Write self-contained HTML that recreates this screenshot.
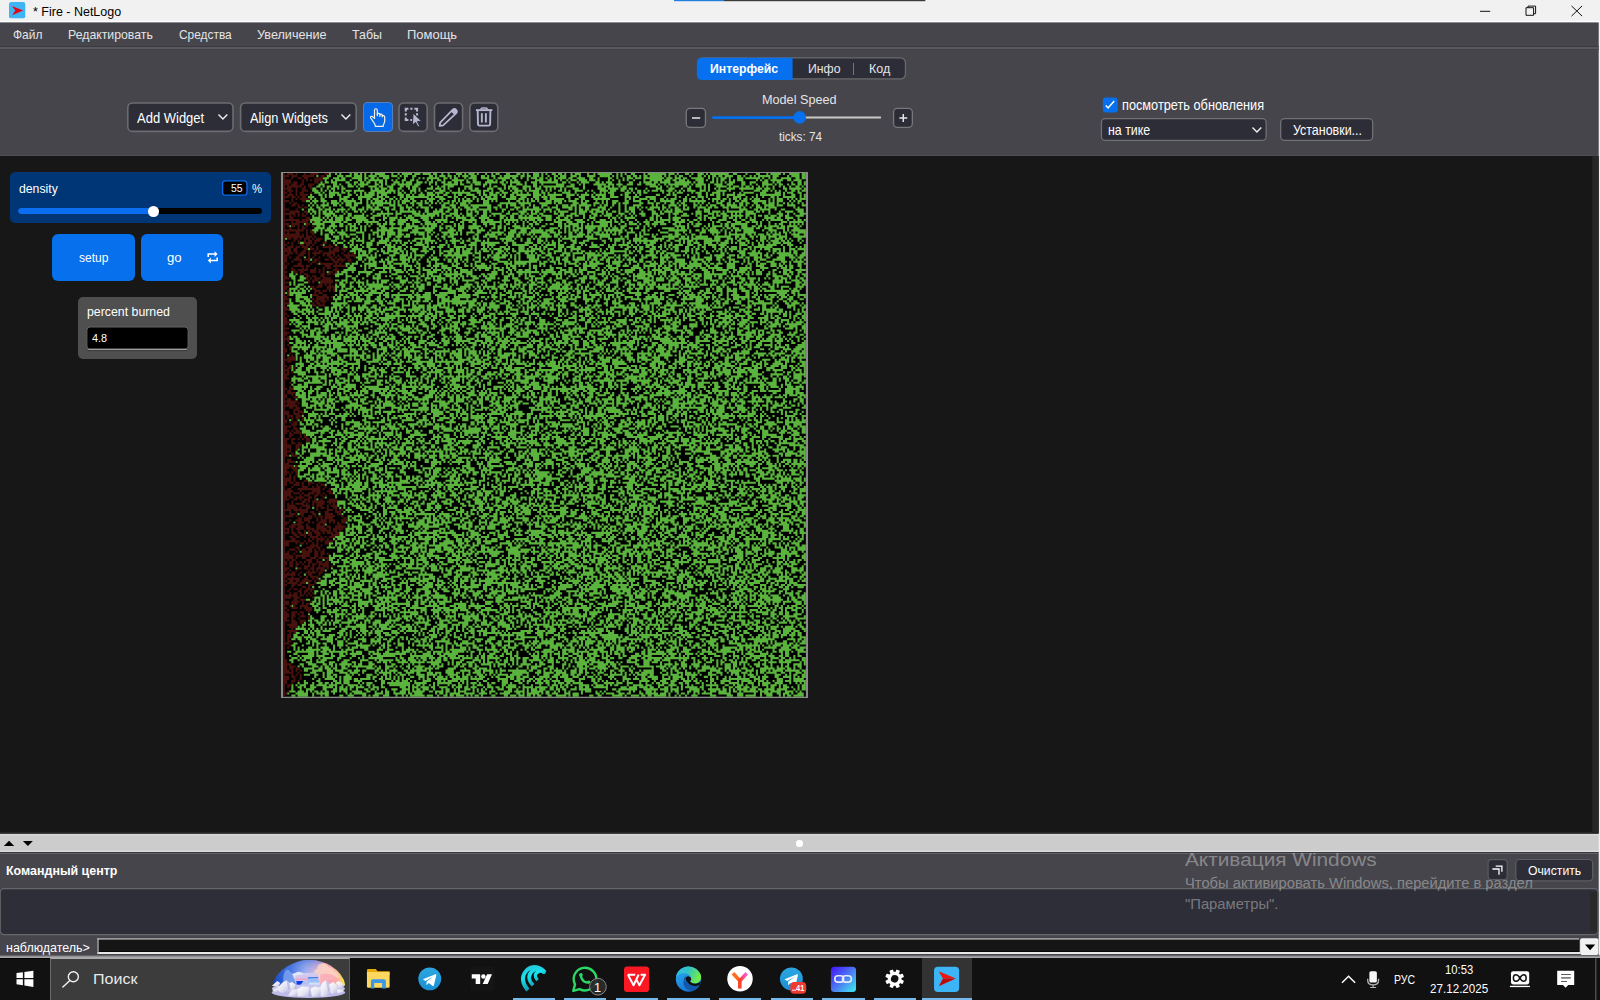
<!DOCTYPE html>
<html lang="ru">
<head>
<meta charset="utf-8">
<title>* Fire - NetLogo</title>
<style>
html,body{margin:0;padding:0;}
body{width:1600px;height:1000px;overflow:hidden;position:relative;background:#171717;font-family:"Liberation Sans",sans-serif;}
.a{position:absolute;box-sizing:border-box;}
.t{position:absolute;white-space:nowrap;line-height:1;transform-origin:0 50%;}
svg{position:absolute;overflow:visible;}
.box{position:absolute;box-sizing:border-box;background:#2d2d37;border:2px solid #5f5f64;border-radius:6px;}
.ul{position:absolute;top:997.6px;height:2.4px;background:#76b9ed;}
</style>
</head>
<body>
<!-- title bar + bands -->
<svg style="left:0;top:0;" width="1600" height="1000" viewBox="0 0 1600 1000">
<rect x="0" y="0" width="1600" height="957" fill="#f1f1f1"/>
<rect x="0" y="20.8" width="1600" height="1.6" fill="#ffffff"/>
<rect x="0" y="22.4" width="1598.7" height="133.5" fill="#46454b"/>
<rect x="0" y="46" width="1598.7" height="1" fill="#3c3b41"/>
<rect x="0" y="47" width="1598.7" height="2.1" fill="#58575d"/>
<rect x="0" y="49.1" width="1598.7" height="0.9" fill="#424147"/>
<rect x="0" y="155.9" width="1598.7" height="677" fill="#171717"/>
<rect x="1592.3" y="155.9" width="6.4" height="677" fill="#272727"/>
<rect x="0" y="832.9" width="1598.7" height="1" fill="#000"/>
<rect x="0" y="833.9" width="1598.7" height="18.1" fill="#cccccc"/>
<rect x="0" y="833.9" width="1598.7" height="1.6" fill="#d8d8d8"/>
<rect x="0" y="850.8" width="1598.7" height="1.2" fill="#dedede"/>
<rect x="0" y="852" width="1598.7" height="1.6" fill="#37363c"/>
<rect x="0" y="853.5" width="1598.7" height="102" fill="#46454b"/>
<rect x="0" y="955.5" width="1600" height="1.1" fill="#34343a"/>
<rect x="0" y="956.6" width="1600" height="1.6" fill="#a9a9a9"/>
<rect x="674" y="0" width="50" height="1.2" fill="#1e7fe0"/>
<rect x="724" y="0" width="201.3" height="1.2" fill="#3a3a3a"/>
</svg>
<!-- netlogo icon -->
<svg style="left:8.5px;top:2.4px;" width="16.3" height="16.4" viewBox="0 0 16.3 16.3"><rect width="16.3" height="16.3" rx="2.2" fill="#3fb4f4"/><path d="M2.9 3.9 L14.1 8.5 L3.1 13.1 L6.3 8.5 Z" fill="#e30613"/></svg>
<span class="t" style="left:33.10px;top:6.00px;font-size:12.60px;color:#000;transform:scaleX(0.9917);">* Fire - NetLogo</span>
<!-- window controls -->
<svg style="left:1470px;top:0;" width="128" height="22" viewBox="0 0 128 22" fill="none" stroke="#111" stroke-width="1">
<path d="M10 11.3h10.2"/>
<path d="M56 7.7h7.6v7.6h-7.6z M58 7.7v-1.6h7.6v7.6h-2" stroke-linejoin="round"/>
<path d="M101.5 5.9l10.6 10.2M112.1 5.9l-10.6 10.2"/>
</svg>
<!-- menu bar + toolbar -->
<span class="t" style="left:12.60px;top:30.00px;font-size:11.90px;color:#e4e4e6;transform:scaleX(1.0049);">Файл</span><span class="t" style="left:67.50px;top:30.00px;font-size:11.90px;color:#e4e4e6;transform:scaleX(1.0328);">Редактировать</span><span class="t" style="left:179.00px;top:30.00px;font-size:11.90px;color:#e4e4e6;">Средства</span><span class="t" style="left:257.40px;top:30.00px;font-size:11.90px;color:#e4e4e6;transform:scaleX(1.0618);">Увеличение</span><span class="t" style="left:351.60px;top:30.00px;font-size:11.90px;color:#e4e4e6;transform:scaleX(1.0445);">Табы</span><span class="t" style="left:407.40px;top:30.00px;font-size:11.90px;color:#e4e4e6;transform:scaleX(1.0900);">Помощь</span>
<svg style="left:0;top:0;" width="1600" height="160" viewBox="0 0 1600 160"><rect x="697.65" y="57.85" width="207.80" height="21.10" rx="4.85" fill="#2d2d37" stroke="#6a6a6e" stroke-width="1.30"/><rect x="127.80" y="103.00" width="105.20" height="28.40" rx="4.70" fill="#2d2d37" stroke="#6c6c70" stroke-width="1.60"/><rect x="240.60" y="103.00" width="115.60" height="28.40" rx="4.70" fill="#2d2d37" stroke="#6c6c70" stroke-width="1.60"/><rect x="399.00" y="103.00" width="28.20" height="28.40" rx="4.70" fill="#2d2d37" stroke="#6c6c70" stroke-width="1.60"/><rect x="434.50" y="103.00" width="28.10" height="28.40" rx="4.70" fill="#2d2d37" stroke="#6c6c70" stroke-width="1.60"/><rect x="469.80" y="103.00" width="28.00" height="28.40" rx="4.70" fill="#2d2d37" stroke="#6c6c70" stroke-width="1.60"/><rect x="686.25" y="108.45" width="19.20" height="19.00" rx="3.85" fill="#2d2d37" stroke="#78787c" stroke-width="1.30"/><rect x="893.55" y="108.45" width="18.80" height="19.00" rx="3.85" fill="#2d2d37" stroke="#78787c" stroke-width="1.30"/><rect x="1101.45" y="118.55" width="164.70" height="21.90" rx="3.85" fill="#2d2d37" stroke="#707074" stroke-width="1.30"/><rect x="1280.65" y="118.55" width="92.00" height="21.90" rx="3.85" fill="#2d2d37" stroke="#707074" stroke-width="1.30"/></svg>
<!-- tabs -->
<svg style="left:690px;top:52px;" width="110" height="34" viewBox="690 52 110 34"><path d="M702.3 57.8H792.6V79.9H702.3Q696.8 79.9 696.8 74.4V63.3Q696.8 57.8 702.3 57.8Z" fill="#0670ee"/></svg>
<div class="a" style="left:853px;top:63px;width:1.4px;height:12px;background:#76767a;"></div>
<span class="t" style="left:710.00px;top:63.00px;font-size:12.00px;color:#ffffff;font-weight:bold;transform:scaleX(1.0176);">Интерфейс</span><span class="t" style="left:807.50px;top:63.00px;font-size:12.00px;color:#e4e4e6;transform:scaleX(1.0220);">Инфо</span><span class="t" style="left:868.75px;top:63.00px;font-size:12.00px;color:#e4e4e6;transform:scaleX(1.0415);">Код</span>
<!-- toolbar left -->
<svg style="left:218px;top:113.6px;" width="10" height="6" viewBox="0 0 10 6" fill="none" stroke="#f0f0f0" stroke-width="1.4"><path d="M0.5 0.6L4.9 5L9.3 0.6"/></svg>
<svg style="left:341px;top:113.6px;" width="10" height="6" viewBox="0 0 10 6" fill="none" stroke="#f0f0f0" stroke-width="1.4"><path d="M0.5 0.6L4.9 5L9.3 0.6"/></svg>
<div class="a" style="left:363.2px;top:102.2px;width:29.6px;height:29.9px;background:#0569e8;border-radius:4px;border:1px solid #5a7fb8;"></div>
<svg style="left:360px;top:99px;" width="72" height="36" viewBox="0 0 1600 800" fill="none">
<g stroke="#f6f1e2" stroke-width="27" stroke-linejoin="round" stroke-linecap="round">
<path d="M322 432V250Q322 217 353 217Q385 217 385 250V372"/>
<path d="M385 338Q387 316 415 318Q442 321 442 347V386"/>
<path d="M442 352Q446 335 470 338Q495 342 495 366V396"/>
<path d="M495 378Q501 361 525 369Q550 379 550 412V470Q550 520 531 550Q516 575 516 608H341Q341 575 321 545L241 426Q226 401 241 389Q261 376 286 396L322 432"/>
</g>
<g stroke="#b6b6d0" stroke-width="46">
<path d="M1017 276V217H1076M1118 217H1166M1209 217H1268V276M1268 318V366M1166 468H1118M1076 468H1017V409M1017 366V318"/>
</g>
<path d="M1180 312L1368 492L1276 503L1326 602L1288 622L1236 522L1164 580Z" fill="#b6b6d0" stroke="#2d2d37" stroke-width="22"/>
</svg>
<svg style="left:430px;top:99px;" width="72" height="36" viewBox="0 0 1600 800" fill="none">
<path d="M214 596L226 527L506 238Q546 203 584 246Q616 286 578 322L292 588Z" stroke="#b6b6d0" stroke-width="38" stroke-linejoin="round"/>
<path d="M468 278L506 238Q546 203 584 246Q616 286 578 322L543 356Z" fill="#b6b6d0"/>
<g stroke="#b6b6d0" stroke-width="42">
<path d="M1020 247H1386"/>
<path d="M1060 268L1066 560Q1068 592 1100 592H1302Q1334 592 1336 560L1342 268" stroke-linejoin="round"/>
<path d="M1152 318V522M1242 318V522"/>
</g>
<path d="M1128 232Q1135 200 1170 200H1235Q1270 200 1277 232" stroke="#b6b6d0" stroke-width="34"/>
</svg>

<!-- speed -->
<svg style="left:680px;top:105px;" width="240" height="26" viewBox="680 105 240 26"><path d="M692 118H700.2M899.4 118H907.2M903.3 114.1V121.9" stroke="#e8e8ea" stroke-width="1.45" fill="none"/></svg>
<svg style="left:700px;top:108px;" width="200" height="20" viewBox="700 108 200 20"><rect x="712" y="116.2" width="88" height="2.7" rx="1.35" fill="#0670ee"/><rect x="800" y="116.6" width="81.2" height="1.9" rx="0.9" fill="#c8c8c8"/><circle cx="799.7" cy="117.4" r="6.3" fill="#0670ee"/></svg>
<!-- toolbar right -->
<svg style="left:1100px;top:95px;" width="20" height="20" viewBox="1100 95 20 20"><rect x="1102.8" y="97.5" width="14.9" height="14.9" rx="3" fill="#0670ee"/><path d="M1105.8 105.4L1108.1 107.9L1114.2 100.9" fill="none" stroke="#fff" stroke-width="1.5"/></svg>
<svg style="left:1251.6px;top:126.6px;" width="10" height="6" viewBox="0 0 10 6" fill="none" stroke="#f0f0f0" stroke-width="1.4"><path d="M0.5 0.6L4.9 5L9.3 0.6"/></svg>
<span class="t" style="left:137.00px;top:111.00px;font-size:14.10px;color:#ffffff;transform:scaleX(0.9219);">Add Widget</span><span class="t" style="left:249.50px;top:111.00px;font-size:14.10px;color:#ffffff;transform:scaleX(0.9048);">Align Widgets</span><span class="t" style="left:761.60px;top:94.00px;font-size:12.30px;color:#e4e4e6;transform:scaleX(1.0291);">Model Speed</span><span class="t" style="left:778.75px;top:131.00px;font-size:12.00px;color:#e4e4e6;transform:scaleX(0.9769);">ticks: 74</span><span class="t" style="left:1122.25px;top:98.00px;font-size:14.10px;color:#ffffff;transform:scaleX(0.9041);">посмотреть обновления</span><span class="t" style="left:1107.80px;top:123.00px;font-size:14.10px;color:#ffffff;transform:scaleX(0.8782);">на тике</span><span class="t" style="left:1292.60px;top:123.00px;font-size:14.10px;color:#ffffff;transform:scaleX(0.8832);">Установки...</span>
<!-- main area scrollbar gutter -->
<!-- widgets -->
<div class="a" style="left:10.2px;top:171.8px;width:260.7px;height:51.3px;background:#003676;border-radius:5px;"></div>
<svg style="left:215px;top:174px;" width="60" height="30" viewBox="215 174 60 30"><rect x="222.55" y="180.85" width="24.4" height="14.3" rx="3.2" fill="#000" stroke="#0a6cf0" stroke-width="1.3"/></svg>
<div class="a" style="left:18.4px;top:208px;width:244px;height:6px;background:#000;border-radius:3px;"></div>
<div class="a" style="left:18.4px;top:208px;width:137px;height:6px;background:#0b6ef0;border-radius:3px;"></div>
<div class="a" style="left:148.3px;top:206.4px;width:10.6px;height:10.6px;background:#fff;border-radius:50%;"></div>
<div class="a" style="left:51.8px;top:234.2px;width:83.2px;height:46.7px;background:#0670ed;border-radius:6px;"></div>
<div class="a" style="left:140.6px;top:234.2px;width:82.9px;height:46.7px;background:#0670ed;border-radius:6px;"></div>
<svg style="left:207px;top:251.2px;" width="11.4" height="12.6" viewBox="0 0 11.4 12.6" fill="none" stroke="#fff" stroke-width="1.5"><path d="M1.2 6V3.1H8.6"/><path d="M10.2 6.6V9.5H2.8"/><path d="M7.6 0.2L10.6 3.1L7.6 6Z" fill="#fff" stroke="none"/><path d="M3.8 6.6L0.8 9.5L3.8 12.4Z" fill="#fff" stroke="none"/></svg>
<div class="a" style="left:78px;top:297px;width:119.3px;height:62.2px;background:#4f4f4f;border-radius:5px;"></div>
<svg style="left:80px;top:320px;" width="116" height="36" viewBox="80 320 116 36"><rect x="86.9" y="327" width="101.2" height="22.2" rx="3.2" fill="#000" stroke="#646464" stroke-width="1"/><path d="M88.5 349.4H186.5" stroke="#a0a0a0" stroke-width="1.1"/><path d="M88 350.6H187" stroke="#3c3c3c" stroke-width="1"/></svg>
<span class="t" style="left:18.80px;top:182.00px;font-size:13.00px;color:#ffffff;transform:scaleX(0.9420);">density</span><span class="t" style="left:230.60px;top:183.00px;font-size:10.90px;color:#ffffff;transform:scaleX(0.9567);">55</span><span class="t" style="left:251.90px;top:182.00px;font-size:13.00px;color:#ffffff;transform:scaleX(0.8651);">%</span><span class="t" style="left:78.80px;top:252.00px;font-size:12.90px;color:#ffffff;transform:scaleX(0.9332);">setup</span><span class="t" style="left:166.70px;top:252.00px;font-size:12.90px;color:#ffffff;transform:scaleX(1.0175);">go</span><span class="t" style="left:87.20px;top:306.00px;font-size:12.90px;color:#ffffff;transform:scaleX(0.9564);">percent burned</span><span class="t" style="left:92.30px;top:333.00px;font-size:10.80px;color:#ffffff;transform:scaleX(1.0057);">4.8</span>
<!-- view -->
<div class="a" style="left:281px;top:172px;width:527.2px;height:526.2px;background:#8a8a8a;"></div>
<svg style="left:283.25px;top:173.2px;" width="522.85" height="523.7" viewBox="0 0 251 251" preserveAspectRatio="none"><rect width="251" height="251" fill="#000"/><path stroke="#5ab33d" stroke-width="1" fill="none" d="M22 0.5h1m2 0h1m1 0h1m4 0h1m1 0h2m1 0h1m1 0h1m2 0h1m1 0h5m3 0h1m2 0h1m1 0h5m1 0h3m1 0h4m1 0h2m2 0h1m2 0h1m3 0h3m1 0h1m1 0h3m1 0h1m3 0h1m2 0h1m1 0h2m3 0h2m3 0h2m1 0h1m1 0h1m2 0h3m1 0h1m1 0h1m2 0h2m1 0h2m1 0h1m2 0h1m1 0h3m3 0h1m2 0h1m1 0h7m2 0h1m1 0h1m1 0h1m2 0h2m4 0h1m1 0h9m1 0h3m1 0h1m3 0h2m1 0h1m2 0h3m1 0h1m1 0h9m2 0h2m4 0h1m4 0h2m3 0h1m1 0h5m1 0h1m2 0h5m1 0h2M16 1.5h1m4 0h2m3 0h3m1 0h3m1 0h4m1 0h1m1 0h4m1 0h5m1 0h3m1 0h1m1 0h2m2 0h2m6 0h2m1 0h1m1 0h3m1 0h2m1 0h1m1 0h1m1 0h3m1 0h3m2 0h2m1 0h1m1 0h2m2 0h1m1 0h7m1 0h2m1 0h2m1 0h3m1 0h1m2 0h1m2 0h2m1 0h3m2 0h3m1 0h1m3 0h4m2 0h5m1 0h1m1 0h1m1 0h1m2 0h2m1 0h2m1 0h1m1 0h2m1 0h6m1 0h1m1 0h1m2 0h1m1 0h2m3 0h1m3 0h2m1 0h1m1 0h1m1 0h2m1 0h2m1 0h4m2 0h2m1 0h1m2 0h1m1 0h1m1 0h6m1 0h3m4 0h1m1 0h4m1 0h2M19 2.5h3m2 0h3m1 0h2m3 0h5m1 0h2m1 0h2m1 0h1m2 0h3m4 0h1m2 0h1m3 0h1m2 0h1m1 0h1m1 0h6m2 0h2m1 0h1m1 0h2m3 0h1m1 0h4m2 0h4m2 0h1m1 0h6m1 0h2m2 0h1m2 0h1m1 0h3m1 0h2m1 0h1m1 0h1m1 0h1m1 0h4m1 0h2m2 0h4m2 0h2m2 0h1m4 0h2m2 0h1m2 0h1m1 0h3m1 0h3m1 0h10m1 0h3m1 0h3m1 0h2m2 0h6m2 0h1m1 0h1m1 0h1m1 0h3m1 0h1m3 0h3m1 0h7m1 0h1m2 0h1m1 0h2m2 0h5m2 0h2m1 0h2M20 3.5h1m2 0h1m1 0h5m2 0h1m3 0h2m1 0h1m1 0h7m1 0h1m2 0h1m1 0h1m2 0h2m2 0h2m1 0h1m4 0h1m1 0h1m2 0h2m1 0h1m3 0h6m1 0h1m2 0h2m5 0h3m1 0h1m2 0h2m2 0h1m1 0h2m4 0h1m3 0h4m2 0h2m1 0h2m1 0h1m2 0h1m1 0h3m1 0h4m1 0h3m1 0h1m4 0h1m1 0h1m2 0h1m1 0h1m1 0h1m2 0h1m4 0h1m2 0h6m1 0h3m1 0h2m1 0h3m1 0h1m3 0h4m1 0h1m2 0h1m1 0h1m1 0h2m2 0h1m1 0h1m1 0h3m6 0h1m1 0h1m1 0h2m1 0h6m2 0h2m1 0h4M18 4.5h1m1 0h2m1 0h3m4 0h2m2 0h2m1 0h2m1 0h2m2 0h1m1 0h2m1 0h1m3 0h3m1 0h1m1 0h3m2 0h3m1 0h1m1 0h2m1 0h1m2 0h2m1 0h2m1 0h2m1 0h1m2 0h2m1 0h4m2 0h6m1 0h2m1 0h1m1 0h5m2 0h1m2 0h3m1 0h9m2 0h2m1 0h1m3 0h1m1 0h4m3 0h2m1 0h1m1 0h3m3 0h1m4 0h2m3 0h1m1 0h4m1 0h2m1 0h5m2 0h8m1 0h1m1 0h3m3 0h2m1 0h1m1 0h1m1 0h1m1 0h3m3 0h2m2 0h3m3 0h3m2 0h1m1 0h2m5 0h1m2 0h2m1 0h1M17 5.5h3m4 0h2m1 0h1m3 0h2m1 0h1m1 0h5m3 0h2m1 0h1m1 0h1m2 0h2m1 0h7m1 0h3m4 0h1m2 0h1m3 0h7m1 0h2m3 0h1m1 0h3m1 0h2m1 0h1m5 0h2m2 0h1m2 0h3m1 0h1m3 0h2m2 0h1m6 0h4m3 0h2m2 0h1m1 0h1m4 0h6m1 0h3m1 0h3m2 0h3m2 0h2m2 0h5m1 0h1m2 0h1m1 0h10m1 0h1m1 0h5m1 0h1m2 0h4m2 0h3m4 0h2m2 0h1m2 0h1m2 0h5m1 0h1m1 0h2m2 0h1m1 0h2m1 0h2m1 0h1M16 6.5h2m1 0h1m1 0h2m1 0h3m1 0h1m2 0h3m1 0h1m1 0h2m2 0h4m1 0h2m2 0h3m3 0h2m1 0h2m1 0h3m6 0h1m2 0h1m1 0h2m1 0h3m5 0h4m5 0h1m2 0h1m1 0h2m3 0h1m1 0h4m3 0h4m1 0h2m1 0h1m1 0h10m1 0h4m4 0h1m6 0h2m1 0h3m1 0h1m2 0h1m1 0h2m11 0h4m1 0h1m2 0h1m1 0h1m1 0h2m2 0h2m1 0h1m2 0h3m1 0h1m1 0h1m3 0h5m1 0h1m1 0h3m1 0h1m1 0h2m1 0h1m2 0h1m1 0h1m1 0h1m2 0h1m2 0h1m1 0h1m2 0h1m2 0h2m1 0h1M14 7.5h2m2 0h1m2 0h1m1 0h2m1 0h1m1 0h2m6 0h1m5 0h1m1 0h2m1 0h3m1 0h2m2 0h2m3 0h1m1 0h2m1 0h1m3 0h3m1 0h3m1 0h1m1 0h1m4 0h1m2 0h1m1 0h2m1 0h2m4 0h3m2 0h2m1 0h1m1 0h1m1 0h3m2 0h2m1 0h1m2 0h3m2 0h1m1 0h1m1 0h1m2 0h1m1 0h1m3 0h3m2 0h1m6 0h4m1 0h5m1 0h3m1 0h2m1 0h1m4 0h1m4 0h3m3 0h3m3 0h1m2 0h2m4 0h1m1 0h1m1 0h1m2 0h1m1 0h1m3 0h4m2 0h7m1 0h3m1 0h3m1 0h1m4 0h2m1 0h6m1 0h1M14 8.5h3m1 0h1m1 0h1m1 0h1m1 0h1m3 0h1m1 0h3m1 0h5m3 0h7m1 0h4m1 0h1m1 0h1m3 0h3m1 0h1m2 0h1m3 0h1m2 0h3m2 0h1m3 0h1m1 0h1m3 0h5m1 0h3m1 0h1m3 0h2m3 0h1m1 0h4m1 0h1m1 0h5m1 0h1m1 0h1m1 0h1m3 0h2m1 0h1m1 0h1m2 0h4m2 0h1m1 0h1m3 0h4m1 0h3m2 0h2m1 0h1m1 0h1m2 0h2m1 0h1m1 0h1m1 0h3m1 0h2m1 0h3m1 0h1m1 0h1m1 0h1m1 0h4m2 0h3m1 0h1m3 0h5m1 0h1m5 0h1m5 0h3m1 0h3m1 0h1m1 0h1m1 0h1m2 0h1m2 0h2m1 0h1m1 0h2M15 9.5h3m1 0h1m2 0h5m1 0h2m1 0h1m2 0h1m2 0h1m1 0h1m1 0h3m1 0h7m1 0h1m1 0h2m1 0h1m2 0h1m1 0h1m2 0h1m2 0h3m1 0h4m1 0h2m1 0h9m3 0h2m1 0h1m2 0h2m1 0h2m1 0h3m2 0h3m1 0h1m2 0h1m2 0h3m1 0h2m1 0h1m2 0h1m3 0h4m2 0h1m4 0h1m3 0h1m2 0h1m1 0h1m1 0h3m5 0h3m1 0h1m1 0h2m1 0h2m7 0h1m2 0h1m1 0h1m1 0h3m4 0h1m1 0h3m2 0h1m2 0h4m1 0h1m4 0h1m2 0h1m1 0h5m3 0h3m4 0h3m1 0h1m1 0h3m2 0h2M13 10.5h1m3 0h2m1 0h1m1 0h3m1 0h2m3 0h2m2 0h1m1 0h1m1 0h5m1 0h1m1 0h3m5 0h3m1 0h2m1 0h1m2 0h3m1 0h4m1 0h1m2 0h2m3 0h1m1 0h2m2 0h4m2 0h1m1 0h2m1 0h4m1 0h1m1 0h1m2 0h2m1 0h7m1 0h4m1 0h1m1 0h7m2 0h4m1 0h1m1 0h4m1 0h1m1 0h5m2 0h2m3 0h1m1 0h2m3 0h1m1 0h1m7 0h2m3 0h2m1 0h2m5 0h1m4 0h2m2 0h1m1 0h2m1 0h2m1 0h1m1 0h4m1 0h4m5 0h1m1 0h10m1 0h1m3 0h2m2 0h1m1 0h1M12 11.5h3m3 0h1m1 0h1m1 0h2m3 0h1m1 0h3m4 0h7m2 0h3m1 0h2m2 0h1m2 0h2m1 0h11m1 0h1m1 0h4m2 0h2m1 0h2m3 0h1m3 0h2m2 0h1m1 0h3m1 0h2m2 0h2m2 0h3m2 0h3m3 0h3m1 0h3m1 0h3m5 0h2m4 0h3m3 0h2m1 0h1m1 0h2m2 0h4m3 0h3m1 0h3m3 0h5m4 0h1m4 0h1m1 0h1m2 0h1m2 0h2m1 0h3m1 0h1m4 0h2m3 0h1m2 0h4m2 0h1m2 0h1m1 0h1m2 0h1m3 0h2m1 0h1m2 0h6m2 0h1m1 0h1M13 12.5h1m1 0h1m2 0h2m7 0h4m2 0h1m2 0h2m2 0h2m1 0h3m1 0h2m2 0h2m1 0h1m1 0h1m1 0h2m1 0h2m6 0h4m2 0h3m4 0h1m1 0h1m1 0h1m1 0h2m1 0h1m1 0h1m1 0h2m1 0h5m4 0h5m1 0h3m1 0h1m1 0h1m1 0h2m2 0h2m1 0h7m2 0h1m2 0h2m1 0h2m4 0h8m7 0h1m1 0h1m1 0h1m2 0h4m1 0h3m2 0h2m1 0h1m1 0h3m3 0h2m1 0h1m2 0h1m2 0h1m2 0h1m1 0h4m1 0h2m1 0h1m1 0h2m1 0h1m1 0h2m1 0h1m1 0h3m4 0h1m1 0h1m1 0h3m2 0h1m1 0h1m1 0h1m1 0h3M11 13.5h2m1 0h3m1 0h3m2 0h3m1 0h1m1 0h6m2 0h1m2 0h1m1 0h1m1 0h4m1 0h1m1 0h1m1 0h1m1 0h1m1 0h4m1 0h2m2 0h1m1 0h1m1 0h2m2 0h1m1 0h1m2 0h1m1 0h2m1 0h1m1 0h5m2 0h1m2 0h3m1 0h1m1 0h1m5 0h1m3 0h2m1 0h1m1 0h1m1 0h2m1 0h1m3 0h3m1 0h4m1 0h1m1 0h4m2 0h1m1 0h2m3 0h1m2 0h1m1 0h1m2 0h3m3 0h2m2 0h4m3 0h1m2 0h1m2 0h7m2 0h1m1 0h2m1 0h8m3 0h1m1 0h1m1 0h2m2 0h1m2 0h2m1 0h3m2 0h7m1 0h1m1 0h1m1 0h3m3 0h1m1 0h1m1 0h2M13 14.5h1m1 0h1m3 0h1m1 0h1m1 0h4m1 0h1m1 0h3m1 0h4m2 0h1m1 0h10m1 0h1m1 0h1m1 0h2m2 0h2m1 0h3m1 0h2m1 0h1m1 0h1m1 0h1m1 0h3m1 0h1m1 0h1m1 0h3m1 0h1m6 0h3m5 0h8m1 0h6m4 0h6m1 0h1m1 0h2m5 0h3m1 0h3m3 0h3m1 0h1m1 0h1m2 0h2m1 0h1m1 0h3m5 0h2m2 0h3m1 0h2m2 0h1m2 0h2m1 0h1m1 0h2m4 0h1m1 0h1m1 0h1m2 0h1m3 0h3m2 0h2m1 0h1m2 0h2m1 0h2m2 0h2m2 0h2m1 0h3m1 0h1m2 0h1m1 0h1m1 0h1m2 0h1m1 0h1M12 15.5h1m1 0h1m1 0h1m1 0h4m2 0h2m1 0h1m2 0h3m1 0h2m4 0h2m1 0h1m1 0h3m3 0h3m1 0h2m2 0h1m2 0h1m2 0h2m3 0h1m5 0h2m2 0h3m2 0h4m1 0h10m3 0h2m2 0h1m1 0h3m2 0h2m2 0h1m1 0h1m3 0h3m4 0h1m2 0h3m1 0h3m1 0h6m1 0h1m2 0h1m1 0h2m2 0h1m2 0h1m2 0h1m3 0h4m5 0h1m1 0h1m2 0h1m2 0h4m1 0h1m1 0h2m3 0h2m1 0h1m2 0h1m1 0h3m2 0h2m1 0h5m1 0h2m1 0h1m2 0h1m1 0h2m2 0h5m1 0h3m2 0h4m3 0h2M13 16.5h1m2 0h2m1 0h1m2 0h1m5 0h1m3 0h3m3 0h1m1 0h3m1 0h2m2 0h3m2 0h1m2 0h2m1 0h3m2 0h1m1 0h4m1 0h1m4 0h4m1 0h2m1 0h1m2 0h3m1 0h3m4 0h2m1 0h2m1 0h1m2 0h1m3 0h3m1 0h1m1 0h1m2 0h3m1 0h1m2 0h1m1 0h3m2 0h5m1 0h1m1 0h1m2 0h2m4 0h4m2 0h1m3 0h1m2 0h1m1 0h3m1 0h1m1 0h1m1 0h1m1 0h5m1 0h2m1 0h1m2 0h2m2 0h1m1 0h1m2 0h1m1 0h4m1 0h2m1 0h2m2 0h3m1 0h5m1 0h1m2 0h1m2 0h3m1 0h1m1 0h4m8 0h1m1 0h1M9 17.5h1m2 0h3m2 0h2m1 0h3m1 0h1m1 0h4m1 0h1m1 0h2m1 0h3m1 0h1m1 0h5m2 0h2m1 0h2m2 0h2m2 0h1m1 0h1m5 0h2m3 0h1m1 0h2m2 0h2m1 0h2m1 0h1m2 0h5m1 0h6m2 0h1m2 0h2m2 0h2m1 0h1m2 0h9m1 0h4m2 0h2m4 0h2m1 0h1m1 0h2m1 0h2m1 0h4m1 0h2m1 0h1m4 0h1m2 0h1m1 0h3m2 0h1m3 0h3m2 0h1m1 0h1m1 0h1m1 0h1m1 0h3m1 0h3m4 0h1m2 0h3m8 0h1m5 0h4m3 0h2m1 0h5m2 0h1m2 0h2m5 0h4M12 18.5h1m1 0h2m1 0h1m1 0h2m1 0h2m1 0h2m1 0h1m1 0h1m3 0h2m1 0h1m1 0h1m3 0h1m3 0h1m2 0h1m3 0h1m1 0h8m1 0h1m2 0h2m2 0h5m1 0h2m2 0h2m4 0h1m1 0h1m1 0h2m2 0h2m1 0h1m5 0h1m2 0h1m4 0h4m2 0h1m1 0h2m2 0h1m2 0h1m1 0h1m1 0h5m3 0h1m1 0h4m1 0h2m1 0h4m1 0h1m2 0h2m1 0h1m2 0h2m1 0h2m3 0h1m4 0h2m2 0h1m1 0h4m1 0h4m6 0h3m1 0h3m1 0h4m1 0h1m1 0h8m1 0h4m1 0h2m1 0h1m2 0h1m4 0h1m2 0h4m2 0h3M13 19.5h1m1 0h1m1 0h1m1 0h6m4 0h1m1 0h2m5 0h1m3 0h1m2 0h8m1 0h3m5 0h4m1 0h1m1 0h6m1 0h2m2 0h4m1 0h1m2 0h3m2 0h1m2 0h2m2 0h5m2 0h2m1 0h3m1 0h2m1 0h1m1 0h3m1 0h2m5 0h2m1 0h2m3 0h3m1 0h3m3 0h3m2 0h1m1 0h3m3 0h3m2 0h1m1 0h1m2 0h3m3 0h3m1 0h2m2 0h1m1 0h3m2 0h2m2 0h1m1 0h3m3 0h3m1 0h1m1 0h3m2 0h1m1 0h1m1 0h1m2 0h5m6 0h1m3 0h3m2 0h1m2 0h1m2 0h3M14 20.5h1m2 0h1m2 0h3m1 0h2m1 0h2m2 0h2m1 0h5m1 0h1m2 0h4m1 0h1m1 0h1m3 0h1m3 0h1m1 0h2m1 0h10m1 0h1m1 0h1m1 0h3m1 0h3m1 0h1m1 0h3m1 0h1m2 0h3m1 0h1m1 0h1m2 0h3m2 0h2m2 0h2m1 0h1m1 0h2m2 0h1m1 0h5m3 0h3m1 0h3m1 0h2m2 0h1m2 0h1m1 0h2m1 0h1m1 0h4m2 0h1m1 0h1m1 0h1m2 0h1m1 0h1m2 0h2m3 0h1m1 0h2m4 0h1m2 0h1m2 0h4m3 0h1m1 0h1m1 0h2m2 0h1m1 0h2m1 0h3m1 0h6m1 0h2m2 0h1m1 0h2m1 0h2m1 0h3m1 0h2m1 0h2m3 0h4M14 21.5h4m1 0h1m1 0h1m1 0h1m1 0h4m1 0h2m1 0h7m2 0h2m4 0h2m1 0h4m1 0h1m2 0h4m3 0h4m1 0h1m4 0h1m1 0h1m2 0h1m1 0h5m2 0h2m2 0h5m5 0h2m1 0h1m1 0h2m2 0h11m2 0h3m2 0h2m2 0h2m1 0h1m5 0h1m2 0h3m6 0h1m1 0h2m1 0h1m2 0h5m7 0h2m1 0h1m1 0h1m3 0h1m1 0h4m8 0h2m1 0h1m1 0h4m3 0h2m1 0h2m1 0h1m1 0h1m2 0h1m1 0h1m1 0h1m4 0h5m1 0h2m2 0h4m2 0h1M13 22.5h6m1 0h1m1 0h2m1 0h4m1 0h3m2 0h6m2 0h1m2 0h1m1 0h1m2 0h3m1 0h5m1 0h4m2 0h3m3 0h6m4 0h1m2 0h7m2 0h2m1 0h3m3 0h1m1 0h7m1 0h1m1 0h1m1 0h3m1 0h3m1 0h3m1 0h1m1 0h6m2 0h4m2 0h1m2 0h1m2 0h3m2 0h1m1 0h1m2 0h1m2 0h1m3 0h1m4 0h1m1 0h2m1 0h1m1 0h5m1 0h3m1 0h2m1 0h1m2 0h2m1 0h1m1 0h1m2 0h1m3 0h4m3 0h2m2 0h2m2 0h3m3 0h1m1 0h1m1 0h6m2 0h1m2 0h1m1 0h2m1 0h1M13 23.5h1m1 0h3m1 0h9m1 0h2m4 0h3m1 0h7m3 0h1m1 0h2m2 0h4m3 0h4m2 0h3m1 0h1m1 0h2m1 0h2m1 0h2m3 0h2m2 0h2m1 0h1m2 0h10m1 0h1m1 0h1m1 0h1m1 0h1m2 0h1m1 0h1m2 0h2m1 0h1m6 0h4m2 0h3m2 0h4m3 0h1m1 0h8m1 0h2m1 0h2m2 0h2m2 0h1m2 0h3m2 0h5m2 0h1m2 0h5m2 0h2m2 0h1m6 0h1m1 0h2m3 0h2m2 0h3m2 0h2m1 0h3m1 0h1m3 0h1m5 0h3m1 0h7M10 24.5h1m3 0h6m3 0h2m2 0h2m2 0h2m1 0h1m1 0h1m3 0h1m1 0h1m2 0h2m1 0h2m1 0h3m1 0h3m1 0h2m1 0h1m3 0h1m1 0h6m2 0h1m5 0h1m1 0h1m1 0h1m4 0h2m3 0h2m1 0h3m2 0h1m2 0h2m2 0h1m3 0h1m2 0h2m1 0h2m3 0h1m1 0h2m2 0h2m1 0h1m1 0h5m1 0h1m2 0h1m1 0h1m3 0h4m1 0h1m3 0h1m2 0h1m1 0h4m1 0h1m2 0h2m1 0h3m1 0h3m3 0h2m1 0h1m3 0h1m1 0h1m1 0h3m3 0h1m1 0h1m3 0h1m1 0h2m1 0h8m4 0h1m1 0h1m3 0h1m2 0h1m1 0h2m3 0h1m1 0h1m1 0h1m1 0h1M3 25.5h1m12 0h2m1 0h1m2 0h4m1 0h2m1 0h1m1 0h3m2 0h1m1 0h1m1 0h1m4 0h3m3 0h1m3 0h1m2 0h6m2 0h1m1 0h1m1 0h3m1 0h1m2 0h3m1 0h1m1 0h3m2 0h6m2 0h1m3 0h1m1 0h2m1 0h1m3 0h4m1 0h1m1 0h1m1 0h1m4 0h2m6 0h2m1 0h3m1 0h3m1 0h1m1 0h11m1 0h1m1 0h1m2 0h3m5 0h1m2 0h1m1 0h1m2 0h1m9 0h5m1 0h1m2 0h3m2 0h1m1 0h1m1 0h5m1 0h2m1 0h2m3 0h3m2 0h2m1 0h2m1 0h1m1 0h5m1 0h2m1 0h5m1 0h1M15 26.5h5m1 0h2m1 0h1m5 0h1m1 0h1m1 0h2m1 0h1m1 0h1m5 0h1m1 0h3m1 0h6m1 0h4m1 0h10m2 0h2m1 0h1m1 0h2m2 0h3m2 0h5m1 0h1m4 0h2m1 0h2m1 0h1m1 0h1m2 0h8m1 0h1m2 0h1m4 0h4m1 0h1m1 0h1m1 0h1m1 0h1m1 0h3m1 0h5m1 0h2m1 0h1m1 0h1m1 0h3m1 0h2m2 0h2m1 0h2m2 0h1m2 0h1m5 0h6m1 0h1m1 0h2m1 0h1m6 0h1m1 0h1m1 0h3m3 0h1m1 0h2m1 0h3m1 0h6m1 0h2m2 0h4m2 0h4m1 0h1m2 0h3M14 27.5h3m1 0h1m1 0h4m1 0h1m2 0h1m1 0h1m1 0h3m2 0h1m1 0h1m2 0h1m2 0h8m2 0h5m2 0h3m3 0h4m3 0h1m3 0h4m1 0h2m4 0h1m2 0h4m2 0h1m3 0h1m2 0h1m2 0h3m2 0h3m2 0h6m1 0h4m2 0h1m2 0h1m1 0h1m1 0h3m1 0h1m2 0h3m2 0h2m1 0h9m1 0h1m2 0h1m4 0h2m1 0h1m4 0h1m4 0h9m1 0h1m2 0h2m1 0h2m1 0h5m1 0h1m1 0h1m2 0h1m1 0h3m1 0h5m4 0h1m2 0h4m3 0h1m1 0h1m1 0h7M15 28.5h1m2 0h1m3 0h3m1 0h4m5 0h4m4 0h3m1 0h2m1 0h4m1 0h2m4 0h7m1 0h2m1 0h1m3 0h6m1 0h1m1 0h1m2 0h4m1 0h2m3 0h1m1 0h6m2 0h4m1 0h4m1 0h9m1 0h3m1 0h2m1 0h1m1 0h2m1 0h1m1 0h2m2 0h2m1 0h3m1 0h1m1 0h1m1 0h1m1 0h1m1 0h2m2 0h4m2 0h1m1 0h1m7 0h4m3 0h2m2 0h1m2 0h1m4 0h3m2 0h5m2 0h1m1 0h1m2 0h1m3 0h6m5 0h1m1 0h1m1 0h1m1 0h1m1 0h2m1 0h1m1 0h1m1 0h4M18 29.5h1m1 0h2m1 0h1m3 0h4m1 0h3m3 0h1m2 0h1m1 0h1m1 0h1m1 0h2m1 0h4m1 0h3m1 0h2m2 0h1m1 0h3m1 0h1m1 0h1m2 0h1m2 0h2m1 0h4m1 0h1m2 0h1m3 0h2m3 0h5m1 0h2m1 0h1m1 0h3m1 0h2m1 0h1m1 0h2m1 0h1m3 0h4m2 0h3m4 0h2m2 0h4m1 0h1m1 0h1m1 0h7m1 0h2m1 0h1m3 0h1m3 0h1m1 0h1m1 0h3m1 0h1m1 0h1m5 0h2m1 0h3m2 0h1m2 0h2m2 0h1m5 0h1m1 0h1m3 0h1m1 0h8m1 0h2m1 0h1m1 0h3m1 0h2m1 0h4m2 0h1m2 0h4m2 0h1M20 30.5h2m2 0h3m1 0h1m1 0h2m3 0h1m2 0h1m2 0h1m3 0h3m2 0h2m2 0h3m1 0h3m6 0h1m1 0h2m2 0h1m2 0h2m1 0h3m9 0h1m1 0h1m2 0h2m1 0h4m4 0h4m1 0h2m5 0h1m1 0h1m1 0h6m1 0h2m1 0h1m1 0h1m1 0h7m1 0h4m3 0h5m5 0h1m1 0h2m3 0h1m1 0h2m4 0h2m3 0h8m1 0h2m1 0h1m1 0h1m1 0h6m3 0h8m2 0h2m1 0h2m2 0h2m1 0h1m1 0h3m1 0h4m1 0h4m3 0h6M1 31.5h1m18 0h3m2 0h2m1 0h1m4 0h2m1 0h1m1 0h1m2 0h1m1 0h1m3 0h1m1 0h2m2 0h1m1 0h1m7 0h8m3 0h1m2 0h1m3 0h2m2 0h1m3 0h1m1 0h3m4 0h1m3 0h1m1 0h6m1 0h1m2 0h1m2 0h2m1 0h1m1 0h2m2 0h1m5 0h1m1 0h5m1 0h1m5 0h5m1 0h1m3 0h2m1 0h5m1 0h1m2 0h4m1 0h2m3 0h5m2 0h3m2 0h5m1 0h10m1 0h3m3 0h3m1 0h1m1 0h4m2 0h1m3 0h3m1 0h1m2 0h4m1 0h1m1 0h1m3 0h2M20 32.5h1m2 0h3m3 0h1m2 0h2m1 0h4m3 0h2m2 0h5m1 0h5m3 0h1m1 0h2m2 0h1m1 0h5m2 0h1m2 0h1m1 0h5m1 0h1m1 0h2m2 0h3m1 0h1m1 0h1m6 0h1m1 0h4m3 0h1m2 0h2m3 0h3m1 0h1m2 0h1m2 0h2m4 0h3m3 0h3m6 0h2m2 0h1m1 0h3m1 0h1m2 0h1m1 0h12m1 0h1m2 0h2m2 0h3m1 0h1m1 0h3m1 0h1m3 0h8m2 0h2m1 0h1m2 0h2m2 0h2m3 0h1m1 0h2m1 0h1m1 0h4m1 0h2m1 0h1m1 0h1m2 0h1m1 0h1M8 33.5h2m14 0h1m1 0h3m2 0h1m1 0h1m4 0h1m1 0h3m2 0h5m1 0h1m2 0h1m1 0h1m1 0h2m1 0h1m2 0h3m1 0h2m1 0h1m1 0h1m4 0h1m2 0h2m2 0h2m3 0h3m2 0h9m2 0h2m2 0h2m4 0h4m2 0h2m1 0h1m1 0h1m1 0h2m1 0h1m2 0h1m3 0h2m1 0h3m3 0h1m5 0h1m4 0h1m3 0h1m1 0h2m2 0h1m1 0h1m1 0h2m1 0h3m4 0h1m2 0h1m3 0h1m1 0h1m1 0h2m1 0h3m2 0h4m2 0h1m1 0h4m1 0h1m1 0h1m1 0h3m1 0h1m1 0h1m2 0h1m1 0h1m2 0h1m1 0h4m1 0h4m4 0h1M19 34.5h1m5 0h1m3 0h1m2 0h2m1 0h1m1 0h1m2 0h3m2 0h1m3 0h3m1 0h1m3 0h2m4 0h5m1 0h1m5 0h3m1 0h1m2 0h1m4 0h1m1 0h4m2 0h2m1 0h4m5 0h1m2 0h8m2 0h2m2 0h1m1 0h5m1 0h3m3 0h2m3 0h1m1 0h1m2 0h3m1 0h2m2 0h1m1 0h2m1 0h5m1 0h1m2 0h1m3 0h4m3 0h1m1 0h1m1 0h2m1 0h4m2 0h3m2 0h2m1 0h1m1 0h4m1 0h4m6 0h4m2 0h1m2 0h3m1 0h5m2 0h1m2 0h3m5 0h1M29 35.5h2m1 0h1m1 0h2m2 0h1m1 0h2m6 0h1m1 0h4m1 0h2m2 0h1m1 0h1m5 0h3m1 0h2m1 0h3m2 0h1m2 0h6m2 0h1m1 0h1m3 0h1m1 0h1m1 0h1m3 0h3m1 0h1m4 0h3m2 0h2m1 0h1m1 0h1m1 0h2m3 0h1m1 0h3m1 0h4m1 0h2m4 0h5m4 0h3m3 0h1m2 0h2m1 0h2m1 0h2m1 0h2m1 0h2m1 0h2m1 0h1m1 0h1m1 0h3m3 0h2m2 0h1m1 0h1m1 0h2m3 0h2m2 0h2m1 0h1m1 0h3m1 0h1m3 0h2m1 0h9m5 0h1m2 0h1m2 0h1m1 0h1m1 0h1M12 36.5h1m20 0h5m3 0h4m2 0h1m2 0h2m1 0h4m1 0h1m2 0h4m2 0h2m1 0h2m3 0h1m4 0h2m1 0h2m1 0h1m1 0h3m1 0h1m2 0h3m1 0h1m1 0h4m1 0h3m1 0h1m2 0h3m1 0h1m1 0h5m1 0h1m1 0h3m2 0h2m1 0h1m2 0h5m9 0h1m2 0h1m1 0h2m5 0h2m3 0h1m1 0h2m3 0h3m2 0h1m2 0h1m1 0h1m1 0h2m3 0h2m1 0h1m1 0h2m2 0h1m4 0h1m1 0h2m1 0h1m1 0h4m1 0h1m1 0h2m1 0h1m1 0h1m2 0h1m1 0h3m1 0h4m1 0h1m2 0h3m1 0h4M32 37.5h3m1 0h4m1 0h2m2 0h1m1 0h2m1 0h5m1 0h2m1 0h1m2 0h2m2 0h4m2 0h1m2 0h1m1 0h5m1 0h2m1 0h4m2 0h1m1 0h1m1 0h3m1 0h1m2 0h3m1 0h1m2 0h2m1 0h8m2 0h2m2 0h1m2 0h4m1 0h1m2 0h1m2 0h1m1 0h2m2 0h1m2 0h1m1 0h1m1 0h1m2 0h8m1 0h1m1 0h1m1 0h2m2 0h4m1 0h2m1 0h2m4 0h2m1 0h4m1 0h1m1 0h1m2 0h1m1 0h1m2 0h1m1 0h1m1 0h1m1 0h1m2 0h1m2 0h4m3 0h2m1 0h1m4 0h1m1 0h2m1 0h1m1 0h1m2 0h1m1 0h2m3 0h1M34 38.5h1m1 0h1m1 0h2m1 0h1m2 0h1m3 0h3m2 0h3m1 0h1m1 0h1m1 0h1m1 0h1m4 0h1m3 0h1m2 0h2m2 0h2m1 0h3m1 0h5m1 0h3m5 0h1m1 0h3m1 0h1m1 0h1m3 0h2m2 0h2m1 0h1m1 0h1m2 0h2m1 0h2m1 0h1m3 0h4m1 0h5m1 0h5m1 0h1m1 0h6m5 0h1m1 0h2m3 0h1m4 0h2m1 0h1m1 0h2m1 0h4m5 0h1m2 0h1m1 0h2m3 0h2m5 0h2m1 0h1m5 0h3m1 0h7m2 0h1m2 0h1m1 0h7m1 0h2m2 0h2M36 39.5h5m1 0h1m1 0h1m1 0h1m4 0h3m2 0h4m1 0h1m1 0h5m3 0h1m3 0h1m1 0h12m2 0h1m2 0h1m3 0h2m1 0h3m1 0h3m1 0h1m1 0h1m1 0h1m3 0h4m1 0h2m2 0h3m4 0h2m1 0h2m1 0h1m4 0h1m1 0h7m1 0h2m3 0h1m1 0h1m1 0h3m3 0h1m2 0h1m1 0h5m2 0h1m1 0h2m1 0h5m1 0h1m1 0h1m2 0h1m1 0h1m5 0h1m1 0h5m2 0h3m1 0h1m1 0h2m2 0h4m1 0h1m1 0h2m1 0h1m3 0h7m1 0h1m1 0h3M10 40.5h1m24 0h3m2 0h5m5 0h1m1 0h1m3 0h3m1 0h2m1 0h1m2 0h1m3 0h1m1 0h2m4 0h1m2 0h1m1 0h3m2 0h1m3 0h3m1 0h1m1 0h1m1 0h7m2 0h1m1 0h1m1 0h1m3 0h4m1 0h1m1 0h2m2 0h2m1 0h2m2 0h2m2 0h1m1 0h4m1 0h2m1 0h2m2 0h2m1 0h3m1 0h2m2 0h1m1 0h1m1 0h1m3 0h3m2 0h3m1 0h5m1 0h2m5 0h1m1 0h2m1 0h1m2 0h4m2 0h3m2 0h2m3 0h3m1 0h2m2 0h4m2 0h2m3 0h4m2 0h3m1 0h3M13 41.5h1m22 0h2m1 0h1m1 0h3m3 0h1m1 0h2m1 0h3m1 0h5m1 0h2m1 0h1m3 0h1m1 0h4m2 0h1m1 0h2m1 0h2m1 0h1m1 0h2m2 0h1m2 0h1m2 0h1m3 0h3m4 0h1m2 0h1m1 0h1m4 0h5m4 0h1m1 0h1m1 0h2m1 0h3m2 0h6m1 0h1m1 0h3m1 0h2m1 0h2m2 0h1m1 0h1m1 0h1m1 0h4m2 0h2m4 0h1m3 0h2m1 0h1m3 0h5m3 0h6m1 0h3m2 0h2m1 0h1m2 0h3m4 0h1m1 0h1m2 0h2m1 0h3m3 0h6m3 0h1m1 0h1m1 0h1m1 0h1M35 42.5h1m2 0h1m2 0h1m1 0h2m1 0h3m1 0h3m4 0h2m1 0h1m1 0h1m1 0h1m4 0h2m2 0h1m5 0h2m1 0h2m2 0h1m1 0h1m3 0h3m4 0h1m3 0h5m1 0h1m1 0h11m1 0h1m1 0h2m1 0h3m1 0h1m2 0h3m2 0h2m3 0h1m1 0h2m1 0h2m3 0h2m1 0h5m3 0h1m1 0h2m1 0h2m1 0h3m1 0h1m2 0h3m1 0h2m1 0h5m2 0h1m1 0h2m2 0h2m1 0h1m4 0h1m2 0h1m1 0h1m1 0h3m2 0h1m1 0h1m1 0h1m1 0h2m3 0h4m3 0h3m1 0h1m1 0h5M17 43.5h1m12 0h2m1 0h3m3 0h6m3 0h1m1 0h2m1 0h7m4 0h2m4 0h1m2 0h4m4 0h1m1 0h2m2 0h1m2 0h1m1 0h1m2 0h2m3 0h3m3 0h4m1 0h6m1 0h1m4 0h3m4 0h1m1 0h2m1 0h1m1 0h4m1 0h1m1 0h2m1 0h7m2 0h1m1 0h4m2 0h1m1 0h1m3 0h1m2 0h1m2 0h4m1 0h2m2 0h1m1 0h2m1 0h4m1 0h6m1 0h2m1 0h2m1 0h3m2 0h4m3 0h1m2 0h2m2 0h1m1 0h3m2 0h3m1 0h1m1 0h1m2 0h1m3 0h2m1 0h1M30 44.5h1m1 0h2m3 0h1m1 0h1m1 0h4m3 0h2m1 0h2m3 0h1m1 0h4m1 0h1m1 0h1m3 0h2m1 0h3m1 0h3m2 0h3m3 0h2m1 0h1m1 0h6m1 0h1m1 0h1m5 0h1m1 0h3m1 0h1m1 0h1m2 0h1m1 0h2m1 0h1m1 0h1m2 0h1m6 0h1m4 0h2m2 0h7m4 0h3m2 0h2m1 0h3m2 0h3m2 0h6m1 0h2m1 0h1m1 0h2m1 0h1m1 0h3m1 0h7m2 0h2m2 0h2m4 0h4m5 0h1m1 0h1m2 0h4m3 0h3m1 0h2m1 0h1m1 0h2m2 0h2M31 45.5h4m4 0h1m1 0h1m2 0h10m4 0h1m2 0h1m2 0h2m1 0h1m3 0h1m1 0h1m2 0h5m2 0h3m5 0h1m1 0h7m1 0h3m1 0h1m1 0h2m1 0h2m6 0h1m1 0h2m6 0h2m1 0h3m3 0h2m3 0h1m1 0h2m2 0h2m1 0h1m2 0h1m1 0h5m6 0h5m1 0h1m1 0h1m2 0h1m1 0h1m1 0h4m2 0h1m1 0h1m1 0h5m1 0h1m1 0h3m1 0h7m2 0h4m2 0h6m4 0h4m4 0h1m1 0h3m1 0h2m3 0h1M29 46.5h6m4 0h1m3 0h1m4 0h1m2 0h1m1 0h4m1 0h1m1 0h3m2 0h1m1 0h4m1 0h4m1 0h1m1 0h2m1 0h1m2 0h4m1 0h1m1 0h1m1 0h1m2 0h2m2 0h1m1 0h3m2 0h2m1 0h1m1 0h2m1 0h3m2 0h1m2 0h1m1 0h4m3 0h3m1 0h2m1 0h1m1 0h4m4 0h2m1 0h1m1 0h1m1 0h2m1 0h1m1 0h1m1 0h5m2 0h2m2 0h1m1 0h5m1 0h4m1 0h2m5 0h1m1 0h1m3 0h3m2 0h1m1 0h6m2 0h2m1 0h4m1 0h1m2 0h2m1 0h1m4 0h2m3 0h4m2 0h5M4 47.5h1m16 0h1m4 0h1m1 0h3m2 0h1m2 0h7m3 0h4m1 0h1m2 0h4m1 0h1m2 0h1m1 0h2m3 0h5m2 0h1m1 0h1m1 0h1m1 0h2m1 0h6m9 0h3m2 0h1m1 0h1m1 0h1m2 0h11m1 0h7m1 0h2m1 0h4m1 0h1m1 0h2m2 0h4m3 0h2m1 0h1m3 0h2m2 0h4m3 0h3m1 0h2m1 0h1m1 0h4m2 0h4m1 0h2m2 0h2m5 0h3m1 0h1m4 0h2m1 0h1m1 0h1m1 0h4m1 0h1m1 0h1m1 0h3m3 0h1m1 0h1m2 0h1m1 0h2m1 0h2m2 0h2M3 48.5h2m1 0h1m18 0h4m1 0h1m5 0h1m3 0h2m2 0h3m5 0h3m5 0h1m4 0h1m1 0h1m1 0h3m3 0h1m1 0h9m2 0h3m4 0h2m1 0h5m2 0h1m2 0h3m2 0h2m1 0h1m1 0h1m4 0h1m1 0h2m2 0h5m1 0h1m2 0h2m1 0h1m1 0h1m2 0h1m2 0h1m1 0h4m1 0h1m1 0h1m3 0h2m1 0h1m2 0h1m1 0h7m1 0h1m1 0h1m1 0h2m2 0h2m1 0h7m1 0h4m1 0h11m2 0h1m2 0h1m1 0h1m1 0h2m1 0h1m1 0h3m2 0h2m1 0h2m3 0h3m1 0h1m2 0h1m1 0h2M3 49.5h3m2 0h2m15 0h2m3 0h3m2 0h1m4 0h1m2 0h1m1 0h2m2 0h1m1 0h1m3 0h2m1 0h1m2 0h4m1 0h2m1 0h1m1 0h5m2 0h3m1 0h2m1 0h2m1 0h1m1 0h3m1 0h1m1 0h2m1 0h3m4 0h3m1 0h1m2 0h1m2 0h1m1 0h3m3 0h2m5 0h1m1 0h1m3 0h1m1 0h2m3 0h2m1 0h3m3 0h1m1 0h1m1 0h1m1 0h2m5 0h1m1 0h6m1 0h3m3 0h1m1 0h1m1 0h1m1 0h2m2 0h1m1 0h1m2 0h2m1 0h2m1 0h4m1 0h1m1 0h2m2 0h1m1 0h5m3 0h1m8 0h1m2 0h5m2 0h2m2 0h2m2 0h1M4 50.5h2m2 0h3m19 0h1m2 0h2m3 0h1m4 0h4m5 0h1m1 0h3m2 0h1m4 0h2m2 0h3m1 0h1m1 0h4m2 0h3m1 0h1m1 0h1m4 0h3m3 0h5m1 0h1m2 0h2m2 0h3m3 0h2m1 0h1m1 0h4m3 0h1m2 0h3m2 0h1m5 0h4m1 0h4m3 0h2m2 0h1m1 0h2m1 0h2m3 0h1m1 0h6m1 0h1m1 0h4m1 0h1m1 0h4m2 0h4m1 0h3m2 0h4m3 0h2m1 0h1m1 0h1m1 0h1m2 0h3m1 0h4m1 0h1m2 0h1m1 0h1m2 0h2m1 0h3m1 0h1m2 0h1m1 0h2M5 51.5h1m1 0h3m15 0h2m1 0h3m3 0h1m1 0h1m3 0h1m4 0h1m1 0h4m5 0h4m2 0h1m1 0h1m1 0h1m1 0h1m3 0h4m1 0h1m2 0h1m1 0h2m2 0h6m3 0h2m1 0h2m5 0h4m2 0h3m4 0h2m1 0h1m2 0h1m2 0h2m1 0h1m3 0h2m4 0h2m1 0h2m4 0h1m1 0h1m1 0h2m3 0h3m1 0h1m2 0h2m1 0h2m3 0h5m1 0h4m2 0h3m1 0h2m2 0h3m2 0h1m1 0h1m1 0h1m2 0h4m2 0h1m3 0h2m3 0h2m2 0h2m2 0h1m6 0h5m1 0h1m2 0h4m1 0h2M3 52.5h1m1 0h1m4 0h2m5 0h1m9 0h2m1 0h1m1 0h2m1 0h4m1 0h1m2 0h1m1 0h1m1 0h3m2 0h1m3 0h3m1 0h2m1 0h3m3 0h2m3 0h2m4 0h1m1 0h2m4 0h1m3 0h2m2 0h2m3 0h1m1 0h1m2 0h1m4 0h1m1 0h2m2 0h1m1 0h2m1 0h4m2 0h1m2 0h2m1 0h2m1 0h2m1 0h1m2 0h2m2 0h1m1 0h1m1 0h3m3 0h4m3 0h3m3 0h2m1 0h3m1 0h2m6 0h1m2 0h3m2 0h1m1 0h3m1 0h1m2 0h1m3 0h1m1 0h1m2 0h1m1 0h4m1 0h3m1 0h1m1 0h2m1 0h1m3 0h2m2 0h5m1 0h3m2 0h3m1 0h1M3 53.5h1m1 0h1m1 0h3m15 0h1m1 0h3m2 0h1m3 0h1m1 0h1m1 0h8m3 0h1m1 0h3m1 0h1m4 0h1m1 0h1m1 0h2m1 0h2m2 0h1m3 0h2m2 0h1m1 0h1m3 0h4m2 0h1m1 0h1m1 0h1m3 0h1m2 0h4m1 0h1m1 0h3m1 0h2m1 0h4m2 0h1m1 0h1m2 0h5m1 0h3m3 0h2m3 0h1m3 0h4m1 0h2m3 0h1m3 0h1m1 0h3m1 0h4m1 0h4m1 0h1m1 0h4m1 0h3m1 0h1m1 0h2m1 0h1m1 0h1m1 0h4m1 0h3m2 0h3m3 0h2m1 0h1m1 0h6m1 0h1m1 0h4m1 0h1m1 0h1m8 0h2m1 0h2M6 54.5h2m2 0h1m1 0h1m12 0h2m1 0h2m2 0h2m2 0h2m1 0h1m1 0h10m1 0h1m1 0h3m2 0h1m1 0h2m1 0h4m4 0h4m1 0h2m1 0h1m4 0h5m1 0h1m1 0h2m1 0h6m1 0h3m1 0h1m1 0h3m1 0h1m1 0h1m2 0h2m2 0h2m2 0h1m1 0h5m1 0h3m1 0h1m2 0h1m1 0h1m1 0h2m2 0h1m2 0h1m1 0h1m1 0h1m2 0h2m2 0h1m2 0h1m1 0h1m2 0h2m1 0h1m1 0h2m1 0h5m1 0h1m1 0h1m2 0h1m1 0h8m5 0h1m2 0h2m1 0h1m1 0h1m5 0h2m2 0h2m1 0h2m1 0h1m3 0h3m1 0h1m1 0h4m3 0h4M3 55.5h4m1 0h2m1 0h1m1 0h1m11 0h1m2 0h1m1 0h3m1 0h1m2 0h2m1 0h3m1 0h3m1 0h3m2 0h1m1 0h1m2 0h2m3 0h1m1 0h3m4 0h1m3 0h5m2 0h5m1 0h1m2 0h1m1 0h1m1 0h1m1 0h1m1 0h3m1 0h3m3 0h1m1 0h1m1 0h2m2 0h2m1 0h1m2 0h2m1 0h12m1 0h2m1 0h1m1 0h1m1 0h3m3 0h1m1 0h2m1 0h2m1 0h1m3 0h3m1 0h4m1 0h4m2 0h10m1 0h1m3 0h1m1 0h1m5 0h2m1 0h1m1 0h3m2 0h2m1 0h2m1 0h3m2 0h1m1 0h3m1 0h2m2 0h2m3 0h1m3 0h1m1 0h2m1 0h1M3 56.5h1m1 0h1m1 0h1m1 0h2m1 0h1m12 0h1m1 0h4m3 0h7m1 0h3m2 0h2m3 0h1m3 0h3m2 0h2m2 0h2m5 0h2m5 0h4m1 0h3m1 0h1m2 0h1m1 0h3m3 0h1m2 0h1m3 0h1m1 0h2m5 0h2m1 0h1m1 0h1m2 0h1m3 0h2m2 0h1m1 0h1m1 0h2m2 0h1m1 0h2m1 0h3m3 0h1m1 0h1m2 0h4m1 0h1m2 0h1m1 0h2m3 0h1m3 0h2m7 0h3m4 0h1m1 0h4m4 0h2m1 0h2m3 0h3m2 0h5m2 0h4m2 0h2m1 0h1m1 0h12m1 0h4M1 57.5h1m1 0h8m16 0h1m3 0h3m1 0h1m2 0h1m2 0h7m1 0h2m4 0h1m6 0h1m1 0h1m3 0h3m1 0h1m2 0h8m3 0h2m4 0h6m1 0h1m1 0h2m1 0h1m2 0h3m1 0h4m1 0h1m1 0h2m1 0h2m5 0h2m2 0h4m1 0h1m3 0h2m1 0h1m2 0h1m2 0h2m1 0h1m5 0h4m3 0h6m1 0h2m3 0h2m1 0h2m6 0h3m1 0h2m1 0h1m2 0h2m1 0h4m1 0h1m2 0h1m2 0h1m2 0h2m4 0h2m1 0h1m1 0h1m9 0h5m2 0h2m1 0h1M3 58.5h2m1 0h3m4 0h1m11 0h1m1 0h2m1 0h1m1 0h4m1 0h1m1 0h4m3 0h1m1 0h3m1 0h10m1 0h3m1 0h4m2 0h6m3 0h1m1 0h6m1 0h3m6 0h2m2 0h3m2 0h1m1 0h1m1 0h1m1 0h2m3 0h1m1 0h1m1 0h1m1 0h1m1 0h1m3 0h2m2 0h1m1 0h2m1 0h1m2 0h2m1 0h6m1 0h1m1 0h3m1 0h1m1 0h2m5 0h3m3 0h1m1 0h2m2 0h1m3 0h3m2 0h1m1 0h1m1 0h4m1 0h1m1 0h2m3 0h1m2 0h2m2 0h1m1 0h4m3 0h2m2 0h2m1 0h1m1 0h1m1 0h4m1 0h3m1 0h1m2 0h1m1 0h4M6 59.5h6m1 0h1m10 0h1m1 0h2m1 0h3m1 0h1m1 0h2m3 0h2m3 0h2m2 0h2m1 0h1m1 0h2m4 0h3m1 0h7m3 0h4m1 0h1m2 0h8m3 0h1m1 0h2m1 0h1m1 0h3m1 0h1m3 0h4m1 0h1m1 0h6m2 0h1m5 0h1m1 0h2m1 0h3m1 0h1m1 0h3m1 0h2m2 0h2m2 0h1m1 0h1m1 0h1m1 0h1m1 0h2m2 0h4m2 0h1m3 0h6m1 0h2m1 0h1m4 0h1m2 0h2m1 0h6m1 0h3m1 0h2m1 0h1m3 0h1m2 0h8m1 0h2m1 0h1m2 0h2m1 0h2m1 0h1m1 0h3m1 0h2m2 0h1m2 0h1M3 60.5h1m2 0h2m2 0h3m11 0h4m1 0h1m3 0h1m1 0h4m1 0h2m2 0h3m1 0h1m4 0h5m1 0h1m1 0h1m2 0h2m2 0h3m3 0h1m1 0h4m1 0h4m3 0h1m2 0h2m4 0h1m3 0h1m2 0h1m1 0h1m3 0h1m3 0h2m2 0h2m2 0h1m2 0h5m2 0h4m1 0h4m3 0h5m2 0h1m2 0h3m2 0h1m1 0h1m2 0h1m2 0h5m1 0h4m1 0h5m2 0h2m4 0h6m1 0h4m1 0h1m2 0h1m1 0h1m1 0h2m1 0h2m1 0h3m1 0h2m1 0h1m3 0h2m3 0h3m3 0h2m2 0h3m3 0h2M3 61.5h1m2 0h4m1 0h3m11 0h1m3 0h1m1 0h2m1 0h4m1 0h5m1 0h3m1 0h1m1 0h1m1 0h3m1 0h1m2 0h1m1 0h4m1 0h3m1 0h1m2 0h1m1 0h17m2 0h1m4 0h1m1 0h2m2 0h3m3 0h2m1 0h1m1 0h2m1 0h2m1 0h1m1 0h3m2 0h1m2 0h4m3 0h1m4 0h2m1 0h1m1 0h2m3 0h1m2 0h2m1 0h2m8 0h1m2 0h1m3 0h3m3 0h1m1 0h1m1 0h1m3 0h1m5 0h4m5 0h3m2 0h2m1 0h1m2 0h2m3 0h3m2 0h3m3 0h1m2 0h1m2 0h2m1 0h1m1 0h2M3 62.5h2m3 0h3m1 0h1m10 0h8m8 0h3m4 0h2m2 0h4m3 0h1m2 0h1m1 0h1m1 0h1m5 0h1m3 0h4m1 0h1m1 0h7m1 0h3m1 0h2m1 0h2m1 0h3m2 0h3m1 0h2m3 0h1m1 0h3m1 0h1m2 0h1m1 0h6m2 0h1m1 0h1m3 0h2m5 0h1m4 0h1m3 0h2m2 0h4m4 0h3m3 0h1m1 0h1m1 0h6m2 0h2m1 0h2m2 0h3m1 0h6m2 0h1m2 0h1m1 0h2m1 0h3m3 0h3m3 0h1m1 0h10m1 0h1m4 0h2m1 0h4m1 0h1M2 63.5h6m1 0h5m10 0h4m1 0h1m1 0h1m4 0h1m1 0h2m3 0h2m2 0h2m4 0h1m3 0h4m1 0h2m1 0h3m1 0h2m1 0h4m1 0h1m1 0h1m3 0h1m1 0h1m3 0h4m1 0h1m1 0h2m1 0h5m3 0h2m1 0h1m1 0h1m1 0h1m2 0h1m1 0h3m1 0h3m1 0h1m1 0h1m1 0h5m2 0h3m1 0h1m3 0h2m1 0h4m2 0h1m3 0h1m1 0h3m1 0h1m1 0h2m1 0h1m1 0h4m1 0h1m2 0h1m2 0h9m2 0h1m1 0h1m1 0h6m1 0h1m1 0h1m1 0h1m1 0h1m8 0h2m1 0h2m1 0h1m3 0h2m3 0h1m1 0h1m4 0h4m2 0h1m1 0h1M3 64.5h4m4 0h1m1 0h1m2 0h1m3 0h2m1 0h3m1 0h2m1 0h2m1 0h2m1 0h5m1 0h3m1 0h1m2 0h1m1 0h5m1 0h1m4 0h6m1 0h5m1 0h5m1 0h1m4 0h2m1 0h2m2 0h1m1 0h2m1 0h6m3 0h3m3 0h1m1 0h1m1 0h4m1 0h1m1 0h3m1 0h2m2 0h1m1 0h2m4 0h2m1 0h1m1 0h2m1 0h2m1 0h1m5 0h13m2 0h4m1 0h1m1 0h1m1 0h3m2 0h2m4 0h1m2 0h1m1 0h8m1 0h5m3 0h1m1 0h3m3 0h3m3 0h1m1 0h2m2 0h1m1 0h2m4 0h2m1 0h1m3 0h2M3 65.5h5m1 0h4m1 0h1m2 0h2m1 0h2m1 0h1m1 0h1m1 0h1m3 0h1m1 0h2m1 0h3m1 0h2m2 0h3m1 0h5m2 0h4m1 0h6m1 0h1m1 0h2m1 0h2m4 0h4m2 0h3m1 0h2m1 0h1m1 0h4m2 0h1m1 0h2m4 0h1m1 0h4m2 0h1m1 0h1m1 0h1m2 0h1m3 0h1m1 0h3m1 0h2m2 0h1m5 0h6m2 0h1m1 0h1m2 0h1m1 0h2m4 0h2m1 0h2m1 0h2m2 0h3m1 0h1m2 0h1m2 0h5m2 0h2m1 0h1m1 0h3m1 0h1m1 0h1m1 0h3m6 0h1m1 0h1m4 0h3m1 0h1m2 0h3m1 0h7m1 0h2m5 0h1m1 0h1m1 0h1M4 66.5h2m1 0h3m1 0h4m1 0h1m3 0h4m1 0h2m1 0h1m2 0h1m1 0h1m3 0h1m2 0h5m1 0h3m4 0h3m2 0h1m2 0h1m1 0h2m1 0h3m1 0h1m2 0h4m1 0h5m1 0h3m1 0h2m3 0h3m2 0h1m3 0h1m1 0h1m1 0h3m3 0h1m1 0h4m2 0h1m4 0h1m6 0h2m2 0h1m2 0h2m1 0h2m1 0h1m1 0h2m2 0h3m1 0h3m1 0h3m1 0h1m2 0h2m1 0h1m1 0h2m1 0h1m1 0h2m1 0h1m2 0h2m1 0h1m1 0h2m1 0h2m1 0h1m1 0h1m1 0h1m2 0h3m3 0h1m1 0h3m1 0h2m1 0h2m2 0h1m1 0h4m5 0h1m1 0h8m1 0h1m1 0h1m3 0h1m1 0h2M5 67.5h2m2 0h2m1 0h1m1 0h1m2 0h6m1 0h1m1 0h1m3 0h2m2 0h1m1 0h1m2 0h1m1 0h2m1 0h2m1 0h1m1 0h2m1 0h1m1 0h2m6 0h1m2 0h3m1 0h3m1 0h1m1 0h2m2 0h1m2 0h1m3 0h1m4 0h1m2 0h1m1 0h1m2 0h3m1 0h3m1 0h1m1 0h4m3 0h2m1 0h4m1 0h2m1 0h1m1 0h1m2 0h1m1 0h1m1 0h1m1 0h1m1 0h1m4 0h3m2 0h1m2 0h1m1 0h1m1 0h2m2 0h1m1 0h1m2 0h3m4 0h2m2 0h2m1 0h1m1 0h4m2 0h1m1 0h1m1 0h1m1 0h2m2 0h4m3 0h1m3 0h4m1 0h1m2 0h2m3 0h2m1 0h2m2 0h2m1 0h1m1 0h1m3 0h1m1 0h2m1 0h1m2 0h3m1 0h1M7 68.5h1m3 0h1m3 0h1m4 0h1m1 0h1m1 0h3m2 0h1m1 0h2m1 0h4m2 0h3m2 0h1m3 0h10m1 0h7m1 0h2m1 0h3m1 0h1m3 0h3m2 0h4m2 0h1m1 0h1m3 0h4m1 0h1m8 0h2m6 0h1m3 0h1m5 0h1m3 0h2m1 0h1m3 0h2m1 0h2m1 0h2m1 0h1m2 0h1m6 0h1m2 0h1m3 0h1m1 0h1m4 0h1m2 0h2m1 0h6m5 0h1m2 0h1m1 0h4m2 0h1m1 0h1m2 0h2m1 0h2m2 0h4m1 0h5m1 0h2m6 0h2m1 0h1m1 0h2m2 0h2m1 0h1m1 0h2m2 0h2M5 69.5h1m2 0h1m2 0h2m1 0h3m1 0h1m1 0h2m1 0h3m1 0h2m2 0h1m1 0h1m1 0h1m1 0h1m1 0h3m1 0h2m1 0h8m1 0h1m3 0h1m1 0h1m1 0h1m1 0h1m2 0h3m1 0h2m2 0h2m2 0h3m1 0h1m1 0h1m3 0h2m3 0h3m1 0h1m1 0h2m2 0h1m1 0h3m1 0h1m1 0h1m1 0h2m1 0h1m2 0h1m1 0h1m6 0h2m5 0h4m2 0h2m2 0h3m1 0h1m1 0h2m1 0h2m6 0h1m4 0h3m4 0h1m1 0h1m1 0h1m3 0h1m1 0h1m1 0h2m2 0h2m1 0h1m3 0h3m1 0h3m3 0h6m1 0h2m2 0h1m2 0h3m2 0h5m1 0h2m1 0h2m4 0h1m1 0h1m1 0h1m1 0h2M3 70.5h5m4 0h2m1 0h1m1 0h1m1 0h1m1 0h1m1 0h1m3 0h1m1 0h2m1 0h2m1 0h1m1 0h1m1 0h1m1 0h2m2 0h1m1 0h4m1 0h1m2 0h1m1 0h1m1 0h1m1 0h1m3 0h2m1 0h2m1 0h2m2 0h1m2 0h3m3 0h1m4 0h4m1 0h2m4 0h2m2 0h2m3 0h2m1 0h1m1 0h2m2 0h1m4 0h3m5 0h3m1 0h2m3 0h1m1 0h3m1 0h2m2 0h1m3 0h1m1 0h1m3 0h5m1 0h2m1 0h1m1 0h1m1 0h1m1 0h2m1 0h1m2 0h6m1 0h1m1 0h1m1 0h1m2 0h3m2 0h2m3 0h1m1 0h2m2 0h2m1 0h2m2 0h1m1 0h4m5 0h1m1 0h2m3 0h2m1 0h4m2 0h1m2 0h1m1 0h1M4 71.5h1m1 0h4m1 0h6m1 0h2m1 0h2m1 0h2m1 0h5m1 0h4m1 0h3m1 0h3m4 0h1m1 0h1m3 0h2m3 0h4m2 0h2m3 0h1m2 0h1m1 0h1m2 0h1m1 0h4m1 0h2m2 0h5m1 0h1m1 0h2m1 0h1m2 0h1m4 0h1m1 0h2m1 0h1m1 0h5m2 0h3m1 0h1m2 0h1m3 0h7m4 0h3m1 0h1m1 0h5m1 0h3m1 0h4m3 0h3m1 0h2m2 0h1m1 0h1m4 0h1m1 0h1m1 0h4m7 0h1m2 0h1m1 0h1m1 0h1m1 0h1m1 0h6m1 0h1m2 0h4m1 0h4m1 0h3m1 0h2m1 0h2m1 0h1m2 0h1m1 0h1m1 0h4M3 72.5h1m1 0h1m1 0h2m3 0h1m2 0h2m1 0h1m1 0h4m1 0h6m3 0h2m1 0h2m1 0h1m3 0h3m1 0h3m1 0h3m2 0h1m4 0h1m2 0h4m2 0h2m2 0h1m2 0h1m1 0h1m1 0h2m1 0h3m1 0h3m4 0h1m1 0h3m1 0h1m1 0h1m2 0h4m2 0h2m1 0h3m1 0h1m1 0h8m1 0h2m1 0h6m1 0h1m3 0h1m2 0h1m1 0h1m1 0h1m1 0h1m4 0h3m1 0h2m2 0h2m4 0h3m7 0h1m2 0h3m1 0h1m4 0h4m2 0h1m1 0h1m1 0h2m2 0h2m1 0h2m1 0h2m1 0h4m1 0h1m1 0h1m3 0h1m2 0h1m1 0h5m2 0h8m1 0h1M6 73.5h2m1 0h4m6 0h3m1 0h1m2 0h2m1 0h7m6 0h1m3 0h3m1 0h1m1 0h1m2 0h3m1 0h2m1 0h1m1 0h1m2 0h3m2 0h2m2 0h1m1 0h1m1 0h4m2 0h1m4 0h2m2 0h3m1 0h3m2 0h1m1 0h4m1 0h2m4 0h1m3 0h1m1 0h2m1 0h1m3 0h1m2 0h2m1 0h1m3 0h1m1 0h1m2 0h1m2 0h2m1 0h1m3 0h2m1 0h1m1 0h3m2 0h1m3 0h4m1 0h2m2 0h1m3 0h4m1 0h3m2 0h2m1 0h4m3 0h1m3 0h1m1 0h2m1 0h2m1 0h1m4 0h2m1 0h2m1 0h1m5 0h1m1 0h4m1 0h1m1 0h1m2 0h4m2 0h2M8 74.5h1m1 0h1m1 0h1m2 0h3m2 0h2m1 0h3m2 0h1m1 0h2m1 0h1m1 0h1m3 0h2m4 0h3m1 0h1m1 0h4m1 0h6m1 0h2m4 0h1m1 0h2m3 0h5m1 0h3m3 0h3m2 0h1m1 0h12m2 0h2m1 0h1m1 0h1m1 0h2m4 0h5m1 0h2m2 0h1m4 0h1m1 0h7m7 0h4m1 0h2m5 0h1m4 0h1m1 0h3m1 0h1m3 0h2m1 0h6m3 0h2m2 0h1m8 0h2m4 0h1m2 0h3m1 0h1m2 0h3m3 0h1m3 0h2m1 0h1m6 0h4m1 0h1m2 0h2M4 75.5h4m1 0h1m1 0h1m1 0h3m1 0h1m1 0h3m8 0h3m1 0h1m1 0h2m4 0h1m1 0h1m1 0h1m1 0h1m2 0h1m2 0h1m2 0h4m1 0h1m1 0h3m2 0h1m5 0h3m2 0h3m1 0h1m4 0h1m1 0h1m5 0h1m1 0h1m1 0h1m2 0h2m3 0h3m2 0h2m1 0h5m2 0h1m1 0h1m3 0h1m2 0h1m1 0h6m1 0h2m3 0h7m1 0h1m1 0h1m4 0h2m1 0h2m1 0h3m1 0h1m1 0h1m1 0h1m1 0h3m3 0h2m1 0h5m1 0h3m5 0h1m1 0h1m1 0h3m4 0h1m1 0h1m3 0h3m2 0h1m1 0h2m1 0h3m3 0h2m1 0h2m7 0h1m1 0h1m1 0h1M5 76.5h1m2 0h2m3 0h2m1 0h3m1 0h1m4 0h2m1 0h1m1 0h1m2 0h3m5 0h2m1 0h6m5 0h2m3 0h4m1 0h1m1 0h2m1 0h1m3 0h1m1 0h1m3 0h1m1 0h2m3 0h3m3 0h2m1 0h1m1 0h6m1 0h1m2 0h3m1 0h2m1 0h4m1 0h3m1 0h1m2 0h1m3 0h1m1 0h2m2 0h2m1 0h1m1 0h3m1 0h2m1 0h1m1 0h2m1 0h4m3 0h1m1 0h1m1 0h1m1 0h1m1 0h1m1 0h1m1 0h1m2 0h1m2 0h2m1 0h3m3 0h1m2 0h2m1 0h3m3 0h2m3 0h4m1 0h1m1 0h2m1 0h1m2 0h2m2 0h5m1 0h1m1 0h1m1 0h2m1 0h1m2 0h2m3 0h1m1 0h2m3 0h1M9 77.5h3m1 0h2m1 0h2m5 0h2m2 0h1m2 0h1m1 0h1m2 0h2m1 0h1m1 0h1m2 0h3m3 0h1m1 0h2m3 0h2m8 0h2m3 0h2m3 0h2m5 0h2m3 0h1m3 0h2m1 0h3m2 0h2m1 0h1m1 0h1m3 0h1m1 0h3m1 0h3m3 0h2m2 0h1m2 0h2m1 0h1m2 0h5m2 0h1m4 0h3m2 0h3m1 0h5m1 0h4m1 0h1m2 0h1m7 0h2m1 0h2m2 0h2m5 0h1m3 0h2m3 0h1m1 0h3m2 0h1m2 0h2m3 0h1m2 0h7m1 0h1m1 0h3m3 0h5m3 0h4m2 0h2M3 78.5h1m1 0h2m2 0h1m1 0h9m1 0h1m1 0h2m1 0h2m1 0h1m1 0h5m1 0h2m1 0h1m1 0h1m2 0h1m1 0h2m1 0h1m1 0h2m4 0h1m1 0h2m1 0h2m1 0h1m2 0h3m5 0h2m1 0h1m1 0h4m1 0h1m4 0h2m1 0h5m2 0h2m1 0h1m1 0h2m3 0h6m1 0h1m8 0h2m1 0h2m1 0h3m1 0h5m2 0h2m1 0h2m4 0h1m1 0h1m1 0h1m2 0h2m1 0h2m1 0h3m1 0h3m1 0h1m1 0h4m2 0h2m1 0h1m2 0h3m1 0h2m3 0h2m1 0h1m1 0h3m1 0h2m2 0h2m1 0h3m3 0h1m1 0h4m1 0h3m3 0h3m1 0h2m1 0h1m3 0h1m1 0h2m2 0h1M3 79.5h2m1 0h2m7 0h3m1 0h3m1 0h5m1 0h4m1 0h2m1 0h3m1 0h2m1 0h1m1 0h2m1 0h5m3 0h1m1 0h2m2 0h1m2 0h1m2 0h1m2 0h1m3 0h2m1 0h1m1 0h1m1 0h3m2 0h4m1 0h1m3 0h3m1 0h1m1 0h2m1 0h2m1 0h3m6 0h1m1 0h1m2 0h2m1 0h2m1 0h2m3 0h4m1 0h1m3 0h1m2 0h1m2 0h1m1 0h5m3 0h1m1 0h1m3 0h1m2 0h4m1 0h2m1 0h1m1 0h8m1 0h2m1 0h3m5 0h2m2 0h2m2 0h2m2 0h2m1 0h3m1 0h1m1 0h2m1 0h2m3 0h2m1 0h1m1 0h3m1 0h1m1 0h2m1 0h1m1 0h1m3 0h1m1 0h1M6 80.5h3m1 0h1m1 0h1m2 0h1m1 0h2m1 0h3m1 0h2m3 0h6m1 0h1m1 0h4m2 0h1m3 0h2m2 0h1m1 0h1m1 0h1m1 0h1m1 0h1m4 0h4m2 0h1m1 0h1m2 0h4m2 0h8m2 0h4m1 0h4m2 0h6m1 0h1m1 0h2m3 0h1m1 0h5m2 0h1m3 0h1m1 0h2m1 0h2m1 0h4m2 0h2m1 0h3m2 0h1m6 0h1m1 0h1m1 0h2m1 0h3m1 0h1m3 0h1m1 0h1m4 0h6m1 0h1m2 0h2m1 0h1m3 0h7m2 0h7m2 0h1m3 0h3m1 0h3m2 0h6m1 0h4m2 0h1m1 0h1m2 0h1m2 0h1M3 81.5h2m1 0h5m2 0h1m2 0h1m1 0h11m1 0h1m1 0h1m1 0h1m1 0h1m2 0h1m1 0h3m2 0h2m2 0h1m1 0h1m1 0h2m2 0h1m1 0h3m2 0h3m1 0h4m2 0h1m1 0h3m3 0h2m1 0h1m2 0h4m2 0h3m1 0h2m1 0h2m1 0h3m1 0h8m1 0h1m1 0h1m2 0h2m1 0h1m1 0h1m1 0h7m2 0h3m2 0h3m1 0h2m3 0h2m2 0h12m1 0h1m1 0h1m4 0h3m2 0h12m1 0h2m1 0h2m6 0h2m1 0h2m2 0h1m1 0h1m1 0h1m2 0h2m2 0h1m3 0h2m4 0h1m2 0h2m5 0h2m3 0h2M5 82.5h2m1 0h1m1 0h1m1 0h1m2 0h2m3 0h1m1 0h1m1 0h6m1 0h3m1 0h2m1 0h3m1 0h3m1 0h2m2 0h3m1 0h1m1 0h2m3 0h3m1 0h1m2 0h1m1 0h5m2 0h2m2 0h1m1 0h1m1 0h1m1 0h1m3 0h2m1 0h1m1 0h1m1 0h2m2 0h1m1 0h3m1 0h1m2 0h2m4 0h3m2 0h3m1 0h2m1 0h1m1 0h2m2 0h1m1 0h2m1 0h2m2 0h3m2 0h2m1 0h1m1 0h1m1 0h1m1 0h4m3 0h3m2 0h1m2 0h2m2 0h2m1 0h2m1 0h1m1 0h5m1 0h1m2 0h5m1 0h2m1 0h2m2 0h2m2 0h3m3 0h3m2 0h1m1 0h1m2 0h3m1 0h4m1 0h1m1 0h1m2 0h2m4 0h4M4 83.5h9m1 0h7m1 0h1m1 0h4m4 0h1m4 0h1m1 0h1m3 0h2m2 0h3m1 0h3m1 0h1m2 0h1m1 0h1m1 0h5m1 0h1m5 0h3m9 0h1m1 0h1m1 0h2m4 0h1m1 0h1m1 0h2m2 0h4m3 0h1m1 0h1m1 0h5m2 0h2m1 0h4m3 0h1m1 0h1m3 0h1m1 0h1m3 0h1m1 0h3m1 0h4m6 0h2m1 0h2m1 0h2m1 0h1m2 0h2m1 0h3m2 0h3m2 0h2m1 0h2m1 0h4m1 0h4m4 0h1m1 0h1m2 0h2m4 0h3m2 0h1m1 0h1m1 0h1m1 0h3m5 0h1m1 0h5m1 0h1m3 0h5M4 84.5h1m2 0h1m1 0h3m2 0h1m1 0h2m1 0h1m1 0h4m1 0h5m1 0h3m1 0h2m1 0h2m4 0h5m2 0h1m1 0h2m1 0h3m1 0h2m4 0h3m2 0h1m4 0h1m1 0h1m3 0h3m1 0h3m1 0h1m3 0h1m3 0h3m1 0h2m1 0h1m2 0h3m1 0h4m3 0h1m1 0h1m1 0h2m2 0h4m1 0h1m4 0h1m1 0h6m3 0h5m1 0h1m2 0h1m1 0h6m1 0h3m5 0h2m2 0h5m1 0h2m1 0h1m2 0h1m2 0h1m1 0h1m1 0h1m1 0h2m2 0h1m1 0h1m1 0h4m1 0h2m6 0h1m1 0h2m4 0h2m2 0h1m2 0h2m2 0h4m1 0h4m1 0h1M4 85.5h3m3 0h1m2 0h2m1 0h1m1 0h6m2 0h5m1 0h4m2 0h1m2 0h1m3 0h1m2 0h2m3 0h1m2 0h1m1 0h8m2 0h1m1 0h2m1 0h7m1 0h2m1 0h2m1 0h1m1 0h4m1 0h1m1 0h1m1 0h1m1 0h1m2 0h2m5 0h1m2 0h3m1 0h3m2 0h2m1 0h1m1 0h1m3 0h2m1 0h2m1 0h3m2 0h1m4 0h5m1 0h1m1 0h1m1 0h1m1 0h2m1 0h1m1 0h1m1 0h1m5 0h1m2 0h1m1 0h1m1 0h4m1 0h2m1 0h2m1 0h1m2 0h3m3 0h2m2 0h1m2 0h4m1 0h2m1 0h1m3 0h1m1 0h4m3 0h1m6 0h2m3 0h1m1 0h1m2 0h4m1 0h2M6 86.5h2m3 0h1m1 0h3m1 0h1m1 0h1m1 0h5m6 0h1m1 0h2m2 0h2m3 0h1m1 0h1m1 0h2m1 0h1m1 0h2m1 0h2m1 0h3m2 0h1m2 0h1m1 0h2m2 0h2m1 0h1m1 0h1m2 0h6m1 0h1m1 0h4m1 0h1m1 0h1m1 0h2m1 0h1m1 0h2m1 0h6m3 0h2m1 0h3m1 0h1m4 0h1m2 0h1m5 0h3m1 0h8m4 0h1m1 0h1m1 0h1m2 0h1m2 0h6m2 0h7m1 0h1m2 0h5m4 0h1m1 0h2m1 0h7m1 0h1m1 0h1m2 0h1m1 0h1m2 0h1m2 0h8m2 0h6m1 0h2m1 0h5m3 0h1m1 0h5M2 87.5h1m3 0h1m3 0h4m2 0h5m2 0h2m1 0h1m2 0h10m1 0h2m1 0h1m1 0h3m1 0h1m1 0h1m2 0h3m1 0h4m1 0h1m1 0h1m2 0h1m4 0h3m1 0h1m2 0h1m1 0h4m1 0h1m1 0h1m1 0h3m2 0h3m4 0h6m1 0h2m1 0h1m1 0h1m2 0h4m2 0h1m1 0h2m1 0h1m3 0h1m1 0h3m1 0h1m3 0h2m2 0h2m2 0h1m1 0h1m4 0h1m3 0h1m1 0h3m3 0h1m1 0h2m1 0h2m1 0h1m1 0h7m1 0h1m1 0h1m1 0h1m1 0h1m3 0h1m3 0h2m1 0h2m3 0h2m1 0h1m1 0h1m1 0h2m2 0h1m3 0h1m2 0h3m1 0h1m1 0h3m1 0h1m2 0h3m1 0h2m1 0h1m1 0h1M6 88.5h1m1 0h1m1 0h5m1 0h2m1 0h4m3 0h2m1 0h1m2 0h1m1 0h1m2 0h2m1 0h2m1 0h1m1 0h2m1 0h1m3 0h2m1 0h1m2 0h1m1 0h2m1 0h4m1 0h2m1 0h1m1 0h1m1 0h2m3 0h2m1 0h3m2 0h3m1 0h2m1 0h1m2 0h2m1 0h2m1 0h4m2 0h1m2 0h1m1 0h1m2 0h1m2 0h2m1 0h2m3 0h3m2 0h1m2 0h3m2 0h1m2 0h1m1 0h1m3 0h3m1 0h3m2 0h2m3 0h3m2 0h5m2 0h4m2 0h2m5 0h3m1 0h3m2 0h2m1 0h1m3 0h3m3 0h4m1 0h5m1 0h1m2 0h1m1 0h1m6 0h1m3 0h2m1 0h1m1 0h2m1 0h4M6 89.5h1m1 0h1m2 0h1m1 0h2m1 0h1m2 0h3m1 0h1m2 0h3m3 0h1m1 0h3m1 0h2m3 0h4m1 0h2m3 0h2m1 0h1m3 0h1m1 0h4m4 0h2m1 0h1m2 0h1m1 0h1m2 0h1m2 0h6m1 0h4m1 0h3m3 0h3m2 0h1m1 0h5m6 0h1m6 0h1m1 0h1m3 0h2m1 0h2m2 0h1m1 0h1m2 0h1m1 0h2m3 0h5m1 0h3m1 0h1m2 0h4m1 0h1m1 0h5m1 0h3m3 0h1m3 0h1m1 0h4m3 0h1m1 0h1m5 0h1m1 0h1m4 0h2m3 0h3m2 0h3m5 0h4m2 0h1m1 0h5m1 0h1m3 0h1M8 90.5h1m2 0h2m2 0h2m1 0h4m1 0h4m1 0h3m4 0h2m3 0h6m1 0h1m2 0h2m2 0h1m1 0h2m1 0h3m2 0h8m1 0h14m2 0h3m1 0h4m2 0h1m1 0h1m1 0h2m2 0h1m1 0h1m1 0h3m1 0h1m1 0h1m2 0h1m2 0h1m2 0h1m1 0h3m1 0h2m1 0h2m1 0h1m2 0h2m1 0h1m1 0h1m1 0h2m1 0h1m1 0h4m1 0h6m2 0h1m1 0h1m1 0h2m2 0h1m2 0h6m2 0h1m2 0h5m1 0h3m1 0h1m1 0h1m2 0h2m1 0h1m2 0h2m1 0h2m1 0h2m1 0h1m2 0h2m2 0h2m2 0h1m1 0h1m4 0h3m2 0h2m1 0h2m2 0h3M6 91.5h4m3 0h2m1 0h2m1 0h1m1 0h8m1 0h7m4 0h1m4 0h1m1 0h4m1 0h4m5 0h5m2 0h4m2 0h1m2 0h2m2 0h4m2 0h1m1 0h5m1 0h4m2 0h2m1 0h3m1 0h2m1 0h5m1 0h3m1 0h3m1 0h5m1 0h1m1 0h1m1 0h1m2 0h2m1 0h1m1 0h1m2 0h2m1 0h5m3 0h7m7 0h2m2 0h3m1 0h4m3 0h2m1 0h2m2 0h2m1 0h4m1 0h1m1 0h1m2 0h2m1 0h5m2 0h1m1 0h4m2 0h1m1 0h3m1 0h2m2 0h5m1 0h1m5 0h1m1 0h2M4 92.5h1m1 0h1m1 0h2m2 0h2m1 0h7m1 0h1m2 0h1m2 0h2m2 0h1m2 0h1m2 0h1m3 0h1m6 0h1m5 0h1m1 0h1m4 0h2m1 0h2m1 0h4m1 0h2m3 0h1m1 0h1m1 0h1m1 0h1m4 0h2m3 0h2m1 0h1m1 0h1m1 0h1m3 0h1m1 0h2m6 0h3m4 0h3m1 0h6m1 0h7m1 0h2m1 0h1m4 0h1m2 0h3m1 0h1m1 0h2m4 0h1m1 0h3m1 0h1m4 0h3m1 0h1m1 0h1m2 0h2m1 0h1m2 0h2m1 0h2m1 0h1m1 0h1m2 0h3m2 0h4m1 0h5m2 0h1m5 0h3m1 0h1m1 0h1m2 0h4m1 0h3m1 0h2m1 0h1m1 0h3M4 93.5h1m2 0h2m2 0h5m2 0h3m1 0h4m2 0h1m3 0h2m1 0h2m2 0h1m1 0h3m1 0h1m1 0h1m1 0h1m2 0h2m1 0h3m2 0h2m1 0h3m1 0h2m1 0h1m1 0h2m3 0h5m1 0h1m1 0h1m1 0h2m3 0h3m1 0h2m2 0h3m1 0h1m1 0h4m1 0h5m4 0h1m2 0h1m5 0h6m1 0h2m2 0h2m1 0h1m1 0h5m1 0h2m1 0h2m1 0h1m1 0h8m2 0h1m1 0h4m2 0h4m1 0h1m2 0h4m1 0h1m3 0h1m3 0h4m1 0h1m2 0h4m1 0h2m2 0h1m1 0h3m1 0h4m1 0h4m2 0h4m3 0h3m2 0h2m1 0h1m2 0h1M4 94.5h1m1 0h3m2 0h2m2 0h1m3 0h1m1 0h1m1 0h5m1 0h2m2 0h1m1 0h1m3 0h1m2 0h3m1 0h3m3 0h1m2 0h1m2 0h1m1 0h1m3 0h1m2 0h2m2 0h1m1 0h4m2 0h2m2 0h4m1 0h1m1 0h2m2 0h2m8 0h2m1 0h7m2 0h1m1 0h3m1 0h10m2 0h1m2 0h4m1 0h8m4 0h2m1 0h2m4 0h2m1 0h5m1 0h2m1 0h2m1 0h2m1 0h4m2 0h1m4 0h4m1 0h2m1 0h1m5 0h1m1 0h2m1 0h4m1 0h1m1 0h4m1 0h5m4 0h2m1 0h5m4 0h1m1 0h3m1 0h1M5 95.5h6m1 0h1m2 0h2m1 0h2m3 0h2m1 0h5m1 0h1m1 0h1m6 0h2m1 0h1m2 0h3m3 0h5m1 0h2m1 0h1m3 0h1m2 0h7m1 0h1m1 0h2m1 0h5m1 0h1m1 0h2m1 0h2m3 0h2m1 0h2m1 0h2m3 0h2m1 0h2m2 0h2m3 0h2m1 0h1m1 0h1m1 0h2m2 0h2m1 0h2m3 0h2m1 0h1m1 0h1m1 0h1m3 0h6m1 0h1m1 0h1m1 0h2m4 0h3m1 0h3m1 0h1m1 0h1m1 0h3m1 0h1m1 0h2m4 0h1m1 0h5m2 0h3m1 0h2m2 0h6m1 0h7m1 0h4m2 0h1m5 0h1m3 0h1m1 0h2m1 0h1m2 0h1m1 0h1M7 96.5h4m5 0h1m3 0h1m1 0h1m1 0h4m3 0h3m1 0h1m2 0h4m2 0h2m1 0h1m4 0h1m6 0h2m6 0h2m1 0h1m2 0h1m1 0h2m3 0h1m3 0h1m1 0h1m1 0h3m2 0h2m2 0h5m1 0h2m1 0h3m2 0h4m1 0h1m2 0h1m1 0h3m2 0h3m2 0h2m1 0h3m2 0h1m2 0h2m2 0h1m2 0h1m2 0h2m1 0h4m1 0h3m1 0h2m1 0h1m3 0h4m2 0h2m2 0h3m1 0h1m1 0h1m1 0h2m2 0h1m1 0h1m2 0h3m1 0h2m1 0h2m1 0h3m1 0h3m3 0h2m2 0h1m2 0h5m4 0h6m2 0h1m2 0h6M5 97.5h1m3 0h1m1 0h10m1 0h1m3 0h1m4 0h1m2 0h3m1 0h2m1 0h4m1 0h2m1 0h1m1 0h1m1 0h3m3 0h5m2 0h2m1 0h2m2 0h1m1 0h1m1 0h5m1 0h7m1 0h2m2 0h3m1 0h1m2 0h1m1 0h1m2 0h1m2 0h1m1 0h2m1 0h8m1 0h8m2 0h1m1 0h1m3 0h3m2 0h4m1 0h3m2 0h1m1 0h3m3 0h1m1 0h9m2 0h2m2 0h2m3 0h2m2 0h2m3 0h2m2 0h1m3 0h3m1 0h2m1 0h1m3 0h1m1 0h6m3 0h4m2 0h1m3 0h1m2 0h1m2 0h2m1 0h1m1 0h4m1 0h1M4 98.5h5m1 0h2m2 0h3m1 0h3m4 0h1m1 0h3m1 0h1m2 0h3m2 0h2m3 0h1m6 0h3m2 0h1m4 0h1m2 0h1m1 0h1m1 0h2m2 0h2m2 0h2m1 0h1m1 0h4m1 0h1m1 0h1m1 0h2m1 0h1m2 0h3m1 0h1m1 0h1m2 0h2m3 0h1m1 0h2m2 0h5m2 0h1m1 0h1m1 0h6m1 0h1m4 0h2m1 0h1m1 0h2m1 0h1m3 0h1m2 0h3m1 0h1m5 0h6m1 0h1m1 0h1m1 0h1m2 0h2m2 0h1m1 0h1m1 0h2m2 0h3m1 0h3m2 0h5m1 0h1m1 0h1m4 0h1m1 0h2m1 0h2m3 0h1m1 0h1m2 0h2m1 0h3m2 0h2m1 0h1m1 0h3m2 0h4M4 99.5h2m1 0h3m2 0h1m1 0h4m2 0h1m1 0h2m1 0h2m2 0h3m1 0h1m1 0h2m3 0h1m1 0h2m1 0h3m1 0h1m1 0h1m1 0h4m2 0h1m1 0h1m1 0h2m1 0h1m2 0h1m1 0h2m2 0h1m1 0h1m2 0h5m1 0h1m2 0h2m1 0h2m1 0h1m3 0h1m7 0h3m1 0h7m2 0h1m4 0h5m1 0h1m3 0h1m1 0h1m1 0h4m4 0h1m1 0h10m1 0h6m1 0h10m2 0h1m1 0h1m1 0h3m1 0h4m3 0h2m2 0h1m2 0h1m8 0h1m2 0h3m1 0h1m3 0h2m1 0h1m1 0h2m1 0h1m1 0h1m3 0h2m1 0h1m2 0h2m1 0h1m2 0h2m1 0h1M5 100.5h1m4 0h9m1 0h1m1 0h1m2 0h5m1 0h1m5 0h1m1 0h3m3 0h2m2 0h2m3 0h3m1 0h1m1 0h4m1 0h2m2 0h1m1 0h1m4 0h2m1 0h1m1 0h2m3 0h1m1 0h2m3 0h2m3 0h2m3 0h3m1 0h1m1 0h2m3 0h4m1 0h4m4 0h3m3 0h1m2 0h1m2 0h1m2 0h2m1 0h2m1 0h1m3 0h2m2 0h2m1 0h1m2 0h1m2 0h1m2 0h2m2 0h4m2 0h2m1 0h1m3 0h5m1 0h1m1 0h3m3 0h6m1 0h3m2 0h3m2 0h2m1 0h2m1 0h9m1 0h5m4 0h1m1 0h1m1 0h3m1 0h2M4 101.5h1m2 0h2m1 0h2m7 0h2m1 0h1m1 0h1m1 0h2m2 0h5m3 0h1m6 0h3m3 0h1m1 0h1m1 0h1m1 0h2m2 0h1m1 0h1m1 0h1m1 0h2m2 0h2m5 0h1m1 0h5m3 0h2m2 0h1m1 0h1m1 0h1m1 0h2m6 0h1m1 0h1m1 0h1m1 0h1m3 0h1m1 0h5m1 0h2m1 0h1m5 0h2m5 0h1m1 0h2m2 0h2m2 0h1m2 0h1m2 0h2m1 0h2m1 0h3m5 0h1m1 0h2m1 0h1m1 0h4m2 0h1m2 0h1m2 0h3m1 0h5m1 0h3m3 0h1m1 0h2m3 0h3m1 0h1m2 0h1m1 0h1m7 0h3m1 0h4m2 0h1m1 0h3m4 0h1M5 102.5h7m1 0h1m2 0h3m4 0h3m1 0h1m1 0h6m2 0h1m1 0h7m3 0h2m1 0h2m3 0h8m1 0h6m2 0h1m2 0h2m1 0h1m1 0h6m1 0h3m2 0h1m1 0h1m4 0h5m1 0h1m1 0h2m1 0h2m1 0h4m1 0h4m1 0h3m1 0h1m1 0h1m2 0h2m2 0h3m1 0h7m3 0h2m2 0h3m1 0h1m1 0h1m6 0h3m2 0h4m1 0h4m1 0h2m1 0h1m2 0h1m1 0h3m1 0h2m1 0h4m1 0h1m2 0h3m2 0h2m1 0h2m1 0h1m2 0h2m3 0h1m1 0h3m1 0h1m1 0h4m1 0h1m2 0h3m1 0h4M5 103.5h4m1 0h1m2 0h1m1 0h3m3 0h1m1 0h1m2 0h4m1 0h2m1 0h1m3 0h2m1 0h10m1 0h1m1 0h2m1 0h2m3 0h2m1 0h2m1 0h2m1 0h1m1 0h1m2 0h1m2 0h1m1 0h3m1 0h1m2 0h2m1 0h1m4 0h1m1 0h2m1 0h2m1 0h1m1 0h1m1 0h1m1 0h1m1 0h3m1 0h2m2 0h4m1 0h2m1 0h11m1 0h5m1 0h5m1 0h1m2 0h1m1 0h1m1 0h1m2 0h3m2 0h3m1 0h1m1 0h1m2 0h1m1 0h1m2 0h4m5 0h3m3 0h1m2 0h1m2 0h1m3 0h3m4 0h2m1 0h4m1 0h2m6 0h2m1 0h1m5 0h1m2 0h7m1 0h1M7 104.5h3m2 0h3m1 0h1m4 0h2m3 0h1m2 0h3m3 0h1m1 0h4m2 0h4m1 0h2m1 0h3m1 0h5m1 0h3m4 0h1m1 0h4m1 0h1m1 0h2m1 0h2m1 0h2m1 0h2m2 0h2m1 0h1m1 0h1m1 0h1m1 0h1m4 0h1m3 0h2m1 0h5m2 0h2m4 0h3m1 0h1m2 0h1m1 0h4m1 0h4m2 0h2m1 0h3m2 0h1m2 0h1m6 0h1m5 0h1m1 0h1m3 0h1m1 0h1m3 0h2m1 0h3m1 0h7m2 0h2m2 0h1m2 0h2m1 0h8m4 0h1m2 0h2m2 0h3m1 0h3m1 0h6m2 0h4m1 0h2M6 105.5h2m1 0h2m1 0h2m2 0h1m1 0h3m1 0h1m1 0h1m1 0h2m1 0h1m2 0h1m1 0h2m1 0h1m1 0h2m2 0h1m2 0h3m1 0h2m2 0h1m2 0h5m3 0h2m3 0h3m1 0h1m1 0h2m1 0h1m2 0h1m2 0h1m2 0h4m2 0h4m1 0h4m1 0h2m4 0h1m1 0h2m3 0h1m1 0h2m1 0h1m1 0h1m2 0h2m2 0h1m2 0h1m1 0h2m1 0h2m2 0h1m2 0h3m1 0h2m2 0h3m1 0h1m3 0h2m1 0h1m3 0h1m3 0h3m1 0h1m1 0h9m1 0h4m1 0h2m2 0h1m1 0h1m3 0h2m1 0h1m1 0h2m1 0h2m1 0h3m1 0h3m2 0h2m9 0h2m4 0h4m1 0h4M6 106.5h5m1 0h1m3 0h5m1 0h2m2 0h2m2 0h1m1 0h7m3 0h2m3 0h7m1 0h1m2 0h1m1 0h3m5 0h4m1 0h1m1 0h3m1 0h1m1 0h1m1 0h2m1 0h1m2 0h4m1 0h3m1 0h2m1 0h2m3 0h1m3 0h2m1 0h1m1 0h1m1 0h1m1 0h2m3 0h1m2 0h2m2 0h1m4 0h1m1 0h1m1 0h2m1 0h2m2 0h2m2 0h4m2 0h2m2 0h1m1 0h3m5 0h2m3 0h6m1 0h3m2 0h1m1 0h1m1 0h4m1 0h1m1 0h5m4 0h3m1 0h2m1 0h4m1 0h1m2 0h1m1 0h1m1 0h1m3 0h1m2 0h1m3 0h1m1 0h2m1 0h4m1 0h3M7 107.5h4m1 0h7m1 0h1m1 0h1m2 0h1m1 0h5m1 0h1m2 0h1m2 0h2m2 0h1m1 0h1m3 0h2m1 0h1m2 0h5m2 0h3m2 0h5m1 0h2m1 0h1m2 0h3m1 0h2m1 0h4m3 0h1m1 0h1m1 0h2m1 0h2m1 0h2m1 0h7m2 0h4m1 0h2m1 0h2m1 0h5m4 0h3m3 0h1m2 0h1m1 0h3m1 0h1m5 0h2m2 0h2m2 0h2m1 0h8m1 0h2m6 0h1m1 0h2m1 0h1m1 0h2m1 0h2m1 0h3m2 0h4m2 0h1m2 0h1m4 0h1m1 0h1m2 0h2m2 0h4m1 0h5m1 0h4m1 0h1m5 0h2m1 0h1M6 108.5h1m2 0h4m1 0h2m1 0h1m1 0h1m1 0h4m2 0h5m2 0h2m1 0h3m5 0h2m2 0h1m2 0h1m2 0h1m1 0h2m1 0h2m1 0h7m3 0h1m1 0h1m4 0h2m1 0h4m1 0h1m1 0h1m2 0h3m1 0h2m1 0h2m1 0h1m2 0h4m1 0h1m5 0h1m1 0h1m3 0h6m1 0h1m1 0h1m2 0h1m1 0h3m2 0h1m2 0h3m2 0h2m1 0h6m1 0h3m1 0h3m2 0h3m1 0h2m1 0h1m1 0h2m1 0h1m1 0h1m3 0h5m2 0h1m1 0h2m2 0h3m1 0h1m1 0h1m1 0h3m1 0h1m2 0h3m1 0h2m4 0h2m1 0h2m2 0h2m6 0h1m4 0h2m1 0h2M9 109.5h2m2 0h4m1 0h2m1 0h3m1 0h2m1 0h1m2 0h2m2 0h1m1 0h2m2 0h2m1 0h1m1 0h2m1 0h3m1 0h1m2 0h1m2 0h1m5 0h1m1 0h1m1 0h1m2 0h6m1 0h3m1 0h4m2 0h1m1 0h2m1 0h2m3 0h2m1 0h2m1 0h4m1 0h2m1 0h2m4 0h3m1 0h2m1 0h1m1 0h5m6 0h2m1 0h2m1 0h3m1 0h1m1 0h2m1 0h2m2 0h1m1 0h2m2 0h1m1 0h3m2 0h1m2 0h1m3 0h1m1 0h1m1 0h1m1 0h2m1 0h3m2 0h1m1 0h5m1 0h3m1 0h1m1 0h3m1 0h4m1 0h2m1 0h4m1 0h8m1 0h3m1 0h1m3 0h2m1 0h1m1 0h1m2 0h2M9 110.5h3m3 0h5m1 0h1m1 0h2m7 0h4m2 0h3m3 0h1m1 0h1m1 0h5m2 0h1m1 0h1m2 0h1m1 0h3m1 0h4m1 0h1m3 0h5m2 0h2m3 0h2m2 0h2m1 0h2m4 0h4m2 0h1m1 0h1m2 0h3m1 0h3m2 0h1m1 0h3m1 0h1m1 0h2m2 0h1m3 0h2m1 0h1m1 0h3m3 0h4m1 0h1m1 0h5m1 0h6m1 0h1m2 0h1m3 0h3m2 0h1m3 0h3m1 0h10m1 0h4m3 0h4m2 0h2m1 0h1m2 0h1m2 0h2m3 0h1m1 0h1m4 0h1m1 0h1m1 0h2m1 0h2m2 0h1m3 0h1m1 0h1M9 111.5h3m1 0h3m1 0h2m1 0h3m1 0h1m5 0h8m4 0h2m1 0h2m1 0h6m2 0h1m1 0h3m1 0h3m2 0h2m2 0h3m1 0h4m2 0h1m1 0h2m3 0h1m1 0h1m2 0h1m1 0h1m3 0h2m1 0h3m1 0h2m1 0h4m8 0h4m2 0h1m1 0h1m3 0h3m2 0h4m2 0h1m1 0h1m3 0h1m2 0h2m3 0h1m1 0h1m2 0h2m5 0h1m2 0h4m1 0h1m1 0h1m1 0h1m3 0h4m1 0h2m2 0h1m1 0h1m3 0h3m2 0h6m2 0h1m2 0h4m5 0h3m1 0h3m2 0h5m1 0h1m2 0h2m1 0h1m2 0h1M11 112.5h3m1 0h1m2 0h1m2 0h4m3 0h1m1 0h3m1 0h2m1 0h3m2 0h1m1 0h5m3 0h5m1 0h1m1 0h1m4 0h5m1 0h1m1 0h1m1 0h1m1 0h3m1 0h1m2 0h2m2 0h1m1 0h2m3 0h4m2 0h1m1 0h4m1 0h2m1 0h2m5 0h3m1 0h1m1 0h5m1 0h3m1 0h2m2 0h1m1 0h2m3 0h1m2 0h1m2 0h3m1 0h5m3 0h1m4 0h1m1 0h1m1 0h3m1 0h3m1 0h1m1 0h2m1 0h1m1 0h16m2 0h1m1 0h1m1 0h3m1 0h4m1 0h4m1 0h1m1 0h2m2 0h1m2 0h1m1 0h3m3 0h4m5 0h2M10 113.5h1m4 0h7m1 0h1m1 0h2m2 0h1m2 0h1m1 0h1m1 0h7m3 0h1m5 0h1m2 0h5m1 0h9m1 0h4m2 0h1m2 0h5m1 0h1m1 0h1m1 0h1m1 0h4m1 0h1m1 0h2m1 0h3m1 0h2m1 0h1m2 0h1m6 0h8m1 0h1m4 0h1m2 0h3m3 0h2m1 0h1m2 0h1m2 0h2m1 0h8m2 0h3m1 0h2m2 0h1m4 0h3m2 0h1m2 0h3m1 0h1m1 0h1m2 0h1m4 0h3m1 0h1m1 0h2m1 0h4m3 0h1m2 0h5m2 0h1m1 0h1m1 0h1m2 0h1m1 0h1m3 0h2m6 0h2M10 114.5h2m2 0h1m5 0h1m2 0h1m6 0h1m1 0h1m3 0h1m1 0h3m1 0h1m1 0h3m1 0h6m1 0h1m1 0h1m5 0h1m2 0h1m1 0h1m2 0h6m1 0h2m3 0h2m1 0h2m2 0h2m8 0h3m1 0h3m4 0h4m4 0h1m4 0h1m1 0h4m1 0h6m1 0h4m1 0h1m1 0h1m1 0h2m2 0h2m1 0h1m1 0h7m2 0h1m1 0h1m1 0h1m1 0h2m2 0h3m2 0h1m3 0h3m2 0h2m1 0h2m1 0h1m1 0h2m1 0h2m1 0h1m1 0h2m1 0h4m4 0h3m1 0h2m1 0h1m1 0h2m3 0h1m3 0h2m1 0h1m1 0h1m1 0h1m1 0h2m1 0h1m2 0h1M12 115.5h5m1 0h1m1 0h1m1 0h3m2 0h1m1 0h3m1 0h1m2 0h1m1 0h1m1 0h1m1 0h1m1 0h1m1 0h1m3 0h2m6 0h6m1 0h1m3 0h2m1 0h5m3 0h2m1 0h1m1 0h4m1 0h1m2 0h1m1 0h2m1 0h8m1 0h1m1 0h7m1 0h3m3 0h1m4 0h1m1 0h2m1 0h2m2 0h3m1 0h2m2 0h1m1 0h2m1 0h5m4 0h1m1 0h5m1 0h3m2 0h2m1 0h4m2 0h1m2 0h3m1 0h2m1 0h3m4 0h1m4 0h2m1 0h5m1 0h2m1 0h1m3 0h1m3 0h4m2 0h1m1 0h1m7 0h1m1 0h1m3 0h2m1 0h1M9 116.5h1m2 0h4m1 0h1m1 0h3m3 0h6m1 0h1m1 0h1m3 0h5m4 0h1m2 0h1m2 0h1m1 0h5m1 0h1m1 0h1m3 0h2m3 0h3m2 0h1m2 0h2m1 0h1m1 0h1m2 0h1m1 0h6m1 0h1m1 0h1m5 0h1m1 0h3m1 0h1m1 0h2m2 0h2m2 0h1m1 0h7m1 0h5m1 0h2m1 0h1m1 0h1m1 0h10m1 0h1m1 0h5m1 0h1m6 0h1m1 0h3m3 0h1m1 0h3m1 0h1m2 0h3m1 0h1m1 0h1m1 0h2m3 0h3m1 0h1m2 0h1m1 0h8m1 0h8m1 0h1m1 0h2m1 0h1m2 0h1m5 0h5m3 0h2M10 117.5h1m1 0h1m2 0h1m1 0h1m5 0h1m1 0h1m2 0h2m9 0h1m1 0h3m1 0h1m2 0h1m1 0h1m1 0h3m1 0h1m2 0h3m2 0h1m2 0h2m2 0h2m2 0h5m1 0h2m1 0h1m1 0h3m1 0h7m2 0h4m3 0h1m1 0h2m1 0h1m1 0h1m3 0h2m1 0h2m1 0h2m1 0h1m1 0h1m3 0h2m4 0h1m1 0h1m1 0h2m1 0h3m1 0h2m2 0h2m1 0h3m6 0h2m1 0h1m7 0h3m1 0h3m1 0h1m1 0h1m1 0h1m4 0h1m1 0h1m1 0h1m1 0h2m2 0h1m2 0h3m1 0h4m2 0h1m2 0h1m1 0h1m1 0h1m2 0h1m2 0h1m3 0h1m3 0h1m1 0h1m2 0h1m1 0h1m1 0h1m2 0h1M3 118.5h1m3 0h1m2 0h5m1 0h3m3 0h1m1 0h1m3 0h2m3 0h1m4 0h2m7 0h2m1 0h2m5 0h6m2 0h5m2 0h1m1 0h3m3 0h2m4 0h3m3 0h2m1 0h1m2 0h3m1 0h1m1 0h1m1 0h1m1 0h3m1 0h6m2 0h1m1 0h1m3 0h1m6 0h5m1 0h1m1 0h1m1 0h1m3 0h2m1 0h1m1 0h1m1 0h2m3 0h1m2 0h2m1 0h2m3 0h1m1 0h2m1 0h2m1 0h1m1 0h3m1 0h1m2 0h1m1 0h1m1 0h3m5 0h1m1 0h1m1 0h1m2 0h2m2 0h1m3 0h2m4 0h1m2 0h2m1 0h2m1 0h1m1 0h2m4 0h1m3 0h2m1 0h1m1 0h2m1 0h2M8 119.5h1m2 0h1m1 0h2m3 0h1m4 0h1m1 0h1m4 0h7m2 0h3m1 0h6m2 0h1m2 0h1m2 0h1m6 0h3m1 0h1m1 0h1m1 0h1m5 0h5m7 0h2m1 0h4m1 0h4m2 0h5m2 0h1m1 0h3m1 0h1m2 0h1m1 0h1m3 0h5m1 0h1m8 0h4m1 0h1m4 0h1m1 0h3m1 0h2m3 0h3m1 0h2m1 0h5m1 0h2m1 0h2m2 0h1m2 0h2m2 0h1m1 0h2m1 0h4m3 0h2m1 0h1m1 0h1m2 0h1m1 0h2m5 0h1m3 0h1m4 0h3m2 0h4m1 0h3m1 0h10M8 120.5h2m1 0h3m1 0h2m6 0h1m4 0h1m1 0h2m2 0h4m1 0h1m1 0h1m3 0h1m3 0h3m1 0h1m1 0h2m3 0h5m1 0h1m1 0h4m1 0h2m1 0h1m3 0h1m3 0h1m1 0h2m2 0h2m1 0h1m2 0h1m2 0h2m2 0h1m3 0h6m4 0h1m3 0h4m2 0h1m1 0h4m1 0h5m1 0h2m2 0h1m1 0h1m2 0h2m1 0h1m1 0h3m1 0h1m2 0h2m1 0h3m1 0h1m1 0h4m1 0h1m1 0h2m3 0h2m8 0h1m1 0h1m2 0h4m1 0h1m1 0h2m1 0h1m1 0h9m3 0h1m1 0h2m1 0h2m3 0h6m4 0h2m2 0h4M10 121.5h1m3 0h1m1 0h1m1 0h1m1 0h2m3 0h1m2 0h1m4 0h4m1 0h1m1 0h2m1 0h1m1 0h1m1 0h2m1 0h4m2 0h3m2 0h2m2 0h1m1 0h2m3 0h6m2 0h1m2 0h1m1 0h3m1 0h1m2 0h1m2 0h3m1 0h1m1 0h3m1 0h2m2 0h3m2 0h3m1 0h5m1 0h1m1 0h1m1 0h4m1 0h7m2 0h1m1 0h1m3 0h1m1 0h1m1 0h1m2 0h3m3 0h5m3 0h3m1 0h3m1 0h1m2 0h2m1 0h1m2 0h4m2 0h5m1 0h2m1 0h1m1 0h1m1 0h2m2 0h1m3 0h1m3 0h3m1 0h1m2 0h2m1 0h1m1 0h2m2 0h2m2 0h1m2 0h1m1 0h2m1 0h2m1 0h3M8 122.5h3m3 0h1m4 0h4m5 0h1m1 0h1m1 0h2m2 0h9m2 0h3m1 0h5m1 0h1m1 0h1m2 0h1m9 0h3m1 0h5m1 0h2m1 0h1m1 0h1m1 0h6m1 0h3m1 0h4m1 0h1m1 0h1m1 0h1m1 0h1m2 0h1m3 0h1m2 0h2m2 0h2m4 0h1m3 0h1m1 0h1m1 0h4m1 0h3m2 0h1m1 0h2m1 0h2m2 0h5m3 0h3m1 0h1m1 0h2m2 0h1m2 0h3m8 0h1m2 0h1m1 0h1m1 0h1m1 0h1m1 0h1m1 0h1m2 0h6m3 0h1m1 0h2m1 0h4m2 0h1m2 0h2m2 0h1m1 0h1m1 0h2m1 0h1m1 0h3m2 0h1m1 0h2M9 123.5h4m3 0h6m1 0h2m1 0h1m2 0h2m3 0h2m3 0h1m1 0h2m2 0h1m1 0h1m4 0h1m1 0h1m4 0h3m1 0h2m1 0h1m3 0h2m2 0h1m2 0h5m1 0h2m1 0h9m2 0h1m2 0h1m2 0h1m2 0h1m2 0h3m2 0h2m3 0h4m1 0h1m3 0h1m1 0h1m3 0h3m1 0h1m1 0h1m2 0h4m2 0h2m3 0h1m1 0h1m2 0h3m1 0h3m3 0h1m4 0h1m1 0h1m5 0h1m1 0h1m4 0h1m3 0h1m3 0h1m1 0h1m1 0h1m1 0h5m1 0h5m1 0h2m1 0h1m1 0h3m4 0h2m1 0h3m1 0h1m2 0h1m1 0h3m2 0h3m2 0h2M9 124.5h8m1 0h2m2 0h2m2 0h2m1 0h5m2 0h3m1 0h2m1 0h2m1 0h1m1 0h5m1 0h1m1 0h1m2 0h2m2 0h3m4 0h2m3 0h2m5 0h1m2 0h1m1 0h7m1 0h3m3 0h5m2 0h7m2 0h1m1 0h1m1 0h1m1 0h1m2 0h2m1 0h5m1 0h1m3 0h1m2 0h1m1 0h3m2 0h1m1 0h5m1 0h1m2 0h3m1 0h3m1 0h2m1 0h1m1 0h2m3 0h1m1 0h1m2 0h9m2 0h2m1 0h2m1 0h1m2 0h1m1 0h2m4 0h2m2 0h1m4 0h2m1 0h2m3 0h1m1 0h3m5 0h3m1 0h2m1 0h3m1 0h2M11 125.5h4m3 0h1m4 0h1m1 0h4m1 0h1m1 0h7m1 0h1m5 0h1m2 0h4m1 0h3m4 0h8m3 0h1m1 0h1m2 0h3m2 0h1m2 0h1m1 0h2m1 0h1m2 0h1m2 0h1m1 0h2m2 0h1m1 0h1m3 0h4m2 0h1m1 0h1m1 0h4m2 0h2m1 0h2m2 0h1m6 0h2m1 0h2m1 0h3m1 0h2m1 0h1m1 0h7m4 0h4m2 0h5m4 0h4m2 0h2m2 0h2m1 0h1m4 0h7m2 0h1m1 0h8m1 0h1m3 0h2m1 0h1m1 0h1m3 0h7m2 0h1m4 0h4M13 126.5h1m1 0h1m1 0h2m2 0h4m3 0h2m1 0h3m2 0h2m1 0h2m1 0h2m2 0h1m1 0h1m1 0h1m2 0h1m1 0h2m3 0h3m3 0h1m5 0h4m1 0h3m3 0h1m1 0h2m2 0h1m1 0h3m1 0h2m3 0h8m1 0h3m1 0h1m1 0h1m1 0h3m4 0h1m1 0h2m1 0h4m2 0h1m1 0h1m2 0h1m2 0h1m5 0h1m3 0h3m2 0h2m5 0h8m2 0h7m2 0h4m1 0h1m1 0h1m3 0h1m3 0h3m2 0h1m5 0h1m2 0h1m1 0h1m2 0h1m1 0h3m2 0h4m1 0h2m2 0h6m3 0h1m1 0h1m2 0h1m1 0h1M14 127.5h2m3 0h2m4 0h1m1 0h1m1 0h2m4 0h2m1 0h1m1 0h10m1 0h1m2 0h1m1 0h1m1 0h2m1 0h1m2 0h2m1 0h1m3 0h2m1 0h1m1 0h1m1 0h5m5 0h1m5 0h2m2 0h1m3 0h3m2 0h2m1 0h7m2 0h1m1 0h1m1 0h5m1 0h1m1 0h4m2 0h4m2 0h2m2 0h2m1 0h4m1 0h2m3 0h1m2 0h1m5 0h1m1 0h4m1 0h4m1 0h1m1 0h2m3 0h2m1 0h4m1 0h2m2 0h1m1 0h1m1 0h1m1 0h1m1 0h2m2 0h1m1 0h2m1 0h2m1 0h2m2 0h2m4 0h1m2 0h1m4 0h2m1 0h3m1 0h5M14 128.5h2m1 0h6m2 0h1m2 0h2m2 0h4m1 0h1m1 0h1m1 0h2m2 0h1m1 0h1m5 0h1m1 0h1m3 0h2m1 0h1m2 0h3m2 0h1m2 0h2m1 0h5m1 0h1m1 0h7m1 0h2m1 0h2m3 0h1m3 0h1m1 0h2m1 0h1m2 0h1m1 0h1m1 0h6m2 0h1m1 0h1m4 0h5m2 0h2m3 0h1m1 0h3m2 0h1m1 0h3m3 0h1m2 0h1m1 0h2m1 0h1m1 0h1m2 0h7m4 0h1m1 0h6m1 0h4m1 0h5m2 0h1m1 0h1m1 0h3m3 0h1m3 0h3m4 0h2m1 0h3m1 0h2m1 0h2m2 0h1m1 0h2m3 0h2m2 0h2M11 129.5h2m1 0h1m1 0h1m2 0h1m4 0h2m1 0h2m2 0h2m1 0h1m1 0h1m1 0h3m1 0h1m1 0h6m1 0h3m1 0h1m1 0h6m1 0h1m1 0h1m1 0h3m2 0h2m4 0h3m1 0h2m1 0h4m3 0h2m1 0h1m2 0h2m1 0h1m1 0h2m1 0h5m1 0h4m1 0h5m2 0h3m2 0h10m1 0h2m1 0h2m2 0h3m1 0h2m3 0h3m1 0h1m1 0h3m1 0h3m1 0h1m1 0h2m1 0h1m1 0h1m1 0h4m2 0h2m4 0h2m1 0h3m2 0h9m1 0h1m5 0h1m2 0h1m1 0h2m2 0h1m1 0h1m1 0h1m2 0h1m3 0h1m1 0h8m1 0h1m2 0h1M9 130.5h1m1 0h1m1 0h4m2 0h2m2 0h1m1 0h1m1 0h1m3 0h2m2 0h2m2 0h1m2 0h1m1 0h1m1 0h2m1 0h3m2 0h1m2 0h2m3 0h1m4 0h1m3 0h2m4 0h4m1 0h2m3 0h1m3 0h4m5 0h1m4 0h4m2 0h1m1 0h1m3 0h1m1 0h1m1 0h3m1 0h5m2 0h2m1 0h2m2 0h1m3 0h2m5 0h1m2 0h2m1 0h1m2 0h1m1 0h2m1 0h1m1 0h1m1 0h1m1 0h1m3 0h1m3 0h2m2 0h1m2 0h1m1 0h2m1 0h6m1 0h2m1 0h1m1 0h1m1 0h1m2 0h1m2 0h1m1 0h4m1 0h2m2 0h2m2 0h1m2 0h1m1 0h1m1 0h1m4 0h2m4 0h7M9 131.5h3m1 0h7m6 0h3m2 0h2m1 0h1m1 0h5m1 0h1m1 0h2m1 0h1m2 0h1m1 0h3m1 0h2m1 0h3m2 0h1m1 0h3m2 0h2m1 0h1m2 0h2m1 0h2m2 0h3m4 0h3m1 0h1m2 0h6m3 0h2m3 0h5m1 0h1m7 0h1m2 0h1m1 0h2m4 0h4m6 0h4m2 0h1m1 0h4m2 0h1m1 0h1m2 0h4m1 0h1m3 0h1m1 0h3m1 0h1m1 0h3m2 0h3m4 0h3m1 0h2m2 0h2m3 0h3m3 0h2m1 0h3m2 0h2m1 0h1m2 0h2m3 0h2m2 0h1m1 0h3m3 0h1m2 0h3M7 132.5h1m1 0h1m2 0h1m3 0h5m1 0h2m1 0h1m1 0h1m1 0h1m1 0h5m3 0h5m2 0h1m1 0h2m1 0h1m1 0h5m1 0h3m1 0h3m1 0h1m2 0h1m2 0h1m1 0h1m1 0h6m2 0h1m1 0h2m3 0h1m1 0h1m1 0h1m1 0h1m4 0h1m2 0h1m2 0h2m6 0h1m1 0h3m1 0h3m1 0h1m2 0h1m2 0h2m2 0h3m1 0h3m1 0h4m3 0h8m4 0h7m1 0h2m1 0h1m1 0h2m1 0h2m2 0h2m1 0h1m2 0h1m2 0h4m1 0h3m2 0h7m2 0h9m1 0h1m2 0h2m1 0h1m2 0h1m3 0h6m1 0h1m2 0h1m2 0h1m1 0h1M6 133.5h1m2 0h2m1 0h1m3 0h2m2 0h1m1 0h1m2 0h3m1 0h2m1 0h2m1 0h2m6 0h1m1 0h2m2 0h1m1 0h2m3 0h3m2 0h2m2 0h1m2 0h9m1 0h1m1 0h1m2 0h1m1 0h4m1 0h3m1 0h1m2 0h1m1 0h2m3 0h2m2 0h3m2 0h2m1 0h2m1 0h3m1 0h1m2 0h1m1 0h2m4 0h8m2 0h1m1 0h3m1 0h2m3 0h2m5 0h1m1 0h3m1 0h3m2 0h3m1 0h2m3 0h1m1 0h2m2 0h1m7 0h9m5 0h4m1 0h3m1 0h2m1 0h2m2 0h1m1 0h4m4 0h2m2 0h1m1 0h3m2 0h4M6 134.5h2m1 0h1m3 0h8m1 0h2m1 0h1m3 0h3m3 0h1m1 0h1m1 0h2m3 0h1m2 0h1m1 0h1m1 0h3m1 0h4m1 0h1m2 0h3m1 0h1m1 0h1m2 0h1m2 0h2m1 0h1m1 0h3m1 0h2m1 0h1m1 0h1m1 0h4m1 0h4m1 0h4m2 0h1m3 0h1m1 0h1m1 0h2m1 0h7m1 0h1m2 0h5m1 0h1m1 0h3m1 0h5m3 0h3m3 0h2m3 0h1m3 0h2m1 0h2m1 0h1m2 0h1m1 0h2m1 0h1m1 0h1m3 0h2m2 0h3m2 0h3m1 0h1m4 0h4m4 0h2m1 0h3m2 0h1m2 0h1m3 0h5m1 0h2m5 0h2m1 0h6m1 0h3M3 135.5h1m4 0h1m4 0h5m1 0h4m2 0h2m1 0h2m2 0h1m1 0h5m1 0h1m1 0h2m1 0h1m2 0h2m1 0h1m1 0h3m1 0h1m1 0h2m2 0h6m1 0h4m1 0h5m1 0h3m7 0h1m5 0h2m1 0h1m1 0h1m4 0h1m3 0h1m1 0h3m1 0h1m1 0h4m1 0h2m1 0h1m1 0h2m2 0h1m3 0h5m1 0h1m4 0h2m1 0h3m1 0h3m1 0h8m1 0h1m1 0h2m2 0h2m4 0h1m1 0h3m1 0h1m2 0h1m6 0h1m2 0h1m5 0h3m2 0h1m1 0h3m1 0h2m1 0h8m1 0h3m1 0h2m1 0h3m1 0h1m1 0h3m2 0h3m1 0h1M7 136.5h1m1 0h1m1 0h4m6 0h4m1 0h1m1 0h1m1 0h5m1 0h4m1 0h2m2 0h1m1 0h2m4 0h2m5 0h1m2 0h3m1 0h1m2 0h3m2 0h2m1 0h2m1 0h2m1 0h6m1 0h2m1 0h4m1 0h2m1 0h2m2 0h3m3 0h4m1 0h1m2 0h3m6 0h3m2 0h3m1 0h1m1 0h1m2 0h1m3 0h2m1 0h2m2 0h2m2 0h3m2 0h3m2 0h1m1 0h7m1 0h2m2 0h4m1 0h1m1 0h1m5 0h2m1 0h1m1 0h2m1 0h7m1 0h3m2 0h2m2 0h1m2 0h2m2 0h2m1 0h3m4 0h1m11 0h2M10 137.5h5m2 0h2m2 0h3m1 0h4m3 0h5m1 0h2m1 0h1m2 0h3m1 0h1m1 0h1m1 0h4m2 0h1m6 0h1m2 0h2m2 0h2m2 0h2m2 0h1m2 0h3m2 0h1m1 0h1m1 0h1m4 0h1m1 0h6m7 0h2m2 0h3m1 0h3m3 0h3m2 0h4m3 0h2m1 0h3m1 0h2m1 0h3m2 0h4m1 0h1m1 0h2m1 0h1m1 0h1m4 0h1m2 0h1m1 0h4m3 0h2m1 0h1m1 0h1m2 0h1m4 0h1m2 0h6m1 0h4m3 0h3m3 0h2m1 0h3m1 0h1m2 0h2m1 0h1m1 0h1m3 0h1m2 0h4m1 0h2m1 0h1m1 0h1M6 138.5h1m1 0h5m1 0h1m1 0h1m2 0h1m4 0h1m1 0h1m1 0h6m2 0h1m3 0h2m4 0h2m3 0h3m1 0h3m1 0h2m1 0h2m4 0h2m1 0h5m1 0h1m1 0h1m1 0h6m1 0h2m3 0h1m1 0h1m2 0h6m2 0h4m1 0h1m4 0h1m1 0h2m4 0h1m1 0h4m4 0h3m3 0h1m1 0h1m4 0h1m2 0h1m2 0h4m2 0h2m1 0h1m1 0h1m1 0h3m1 0h1m1 0h1m1 0h3m3 0h2m2 0h1m1 0h1m3 0h5m3 0h4m2 0h2m1 0h2m1 0h1m2 0h2m2 0h11m2 0h1m1 0h2m3 0h1m1 0h2m1 0h2m1 0h2m1 0h2M8 139.5h1m2 0h3m3 0h1m1 0h5m2 0h1m1 0h3m4 0h1m3 0h1m2 0h6m2 0h2m1 0h5m1 0h1m1 0h1m1 0h1m7 0h3m1 0h1m4 0h1m3 0h1m3 0h2m3 0h3m2 0h2m4 0h1m2 0h5m3 0h5m1 0h3m1 0h5m1 0h2m1 0h1m1 0h2m2 0h5m1 0h1m4 0h3m1 0h1m1 0h1m2 0h1m4 0h5m3 0h5m1 0h1m2 0h1m1 0h1m1 0h1m1 0h1m1 0h2m2 0h3m2 0h1m6 0h4m1 0h6m1 0h2m2 0h5m1 0h2m2 0h3m1 0h1m1 0h1m2 0h2m1 0h7M5 140.5h1m1 0h5m3 0h2m1 0h4m3 0h1m1 0h2m1 0h2m1 0h2m1 0h2m1 0h1m1 0h5m3 0h1m7 0h3m1 0h3m2 0h1m4 0h2m13 0h4m4 0h1m1 0h1m1 0h8m4 0h1m2 0h2m2 0h3m1 0h2m1 0h1m1 0h1m2 0h1m2 0h1m2 0h1m2 0h2m1 0h4m1 0h1m3 0h2m1 0h2m1 0h2m1 0h2m1 0h2m1 0h2m1 0h3m1 0h1m1 0h2m2 0h1m3 0h3m3 0h2m4 0h2m2 0h4m3 0h1m1 0h3m1 0h3m1 0h1m1 0h2m1 0h1m3 0h2m2 0h1m4 0h4m1 0h1m1 0h1m2 0h1m1 0h1m1 0h2m1 0h1M8 141.5h3m1 0h1m1 0h4m1 0h1m1 0h2m1 0h2m3 0h1m1 0h1m6 0h4m2 0h1m1 0h2m1 0h1m1 0h3m1 0h1m1 0h2m1 0h1m2 0h1m3 0h5m1 0h3m1 0h1m1 0h1m1 0h1m1 0h2m1 0h1m1 0h4m2 0h1m1 0h2m1 0h2m7 0h5m1 0h1m2 0h1m3 0h1m1 0h1m2 0h1m2 0h1m4 0h4m1 0h1m2 0h1m1 0h5m3 0h1m1 0h3m2 0h1m1 0h1m3 0h2m1 0h1m1 0h2m2 0h1m2 0h7m3 0h1m2 0h1m2 0h1m1 0h2m3 0h6m1 0h5m1 0h1m2 0h1m1 0h1m2 0h2m4 0h2m1 0h5m1 0h2m6 0h1m2 0h1m1 0h1M7 142.5h3m2 0h6m2 0h3m1 0h3m1 0h3m3 0h1m1 0h1m1 0h1m2 0h1m2 0h4m1 0h1m6 0h2m5 0h3m1 0h1m2 0h1m1 0h4m2 0h1m2 0h2m2 0h3m1 0h3m3 0h5m5 0h1m1 0h4m1 0h2m1 0h2m1 0h1m1 0h3m9 0h2m2 0h1m1 0h1m4 0h5m1 0h1m2 0h2m1 0h1m1 0h2m2 0h1m2 0h4m3 0h3m1 0h3m1 0h2m3 0h2m2 0h3m3 0h3m1 0h1m3 0h1m1 0h2m1 0h3m1 0h4m1 0h1m1 0h2m1 0h2m1 0h3m1 0h2m3 0h3m1 0h3m1 0h1m1 0h4m1 0h1M7 143.5h1m4 0h1m4 0h3m1 0h6m1 0h2m1 0h1m2 0h2m3 0h1m1 0h3m2 0h1m2 0h4m3 0h3m6 0h2m1 0h1m1 0h1m1 0h3m2 0h1m1 0h2m1 0h2m2 0h4m1 0h3m1 0h1m1 0h1m1 0h6m2 0h1m3 0h1m1 0h1m1 0h1m1 0h1m1 0h1m1 0h7m1 0h1m2 0h1m1 0h2m2 0h1m4 0h4m1 0h6m2 0h2m1 0h2m1 0h2m1 0h1m3 0h2m1 0h1m1 0h3m2 0h3m1 0h1m1 0h3m2 0h1m1 0h1m1 0h1m2 0h2m1 0h2m2 0h3m1 0h1m1 0h3m2 0h1m1 0h1m1 0h2m1 0h1m4 0h4m1 0h2m1 0h1m2 0h1m1 0h1m3 0h2m2 0h2M7 144.5h1m2 0h3m1 0h1m1 0h4m1 0h1m4 0h1m1 0h5m1 0h1m1 0h1m1 0h2m3 0h2m2 0h2m1 0h2m2 0h1m3 0h1m9 0h3m1 0h2m1 0h1m2 0h2m1 0h2m1 0h2m2 0h1m2 0h2m2 0h2m1 0h2m2 0h1m1 0h1m1 0h1m1 0h2m1 0h3m2 0h3m1 0h7m1 0h1m2 0h3m4 0h1m2 0h4m2 0h12m3 0h2m1 0h2m1 0h1m1 0h1m3 0h3m1 0h1m5 0h2m1 0h2m1 0h1m1 0h2m1 0h3m2 0h1m3 0h2m1 0h1m3 0h2m1 0h4m1 0h2m1 0h2m1 0h2m2 0h4m1 0h2m1 0h2m1 0h1m1 0h1m1 0h4m1 0h1M7 145.5h4m2 0h2m1 0h1m1 0h1m1 0h3m2 0h2m2 0h1m1 0h1m1 0h1m1 0h2m1 0h1m1 0h1m2 0h2m1 0h1m2 0h4m1 0h3m2 0h2m1 0h1m1 0h2m2 0h2m1 0h4m1 0h3m1 0h3m1 0h1m3 0h1m6 0h2m4 0h2m2 0h2m1 0h1m2 0h2m3 0h3m1 0h1m1 0h7m4 0h2m2 0h1m1 0h3m1 0h1m1 0h3m1 0h2m2 0h1m1 0h7m2 0h2m1 0h3m1 0h2m1 0h1m3 0h3m1 0h6m2 0h2m2 0h3m1 0h2m2 0h1m2 0h3m1 0h1m2 0h1m2 0h1m6 0h2m2 0h1m1 0h3m3 0h1m1 0h4m1 0h1m1 0h1m4 0h1M8 146.5h1m2 0h2m1 0h1m1 0h4m1 0h1m1 0h2m3 0h3m1 0h1m1 0h1m1 0h1m1 0h1m1 0h1m1 0h4m1 0h1m2 0h1m1 0h1m3 0h1m2 0h2m1 0h3m1 0h1m3 0h3m7 0h2m1 0h2m1 0h1m3 0h2m4 0h1m1 0h1m3 0h2m4 0h1m1 0h2m1 0h2m3 0h2m1 0h4m1 0h7m8 0h2m2 0h4m3 0h3m4 0h1m3 0h6m2 0h1m1 0h2m1 0h3m2 0h3m3 0h4m2 0h1m2 0h2m1 0h2m1 0h2m1 0h1m2 0h2m1 0h2m13 0h3m1 0h6m1 0h1m1 0h5m1 0h4m1 0h1M12 147.5h2m1 0h6m1 0h1m1 0h2m1 0h1m2 0h1m1 0h2m1 0h2m3 0h1m1 0h2m2 0h2m1 0h1m2 0h1m3 0h4m1 0h2m1 0h3m1 0h4m1 0h1m4 0h7m2 0h1m3 0h2m1 0h3m3 0h1m1 0h2m1 0h4m1 0h2m1 0h1m2 0h1m1 0h6m2 0h3m3 0h1m2 0h2m2 0h1m1 0h1m3 0h4m1 0h1m1 0h4m1 0h2m2 0h1m4 0h3m1 0h1m2 0h1m1 0h1m2 0h2m1 0h2m1 0h3m2 0h4m3 0h1m1 0h1m3 0h5m1 0h1m3 0h5m1 0h1m1 0h1m2 0h1m3 0h2m7 0h9m1 0h3m1 0h1M21 148.5h4m3 0h1m2 0h2m1 0h4m1 0h2m2 0h5m2 0h11m2 0h2m2 0h1m1 0h1m1 0h5m1 0h1m2 0h1m1 0h2m1 0h1m1 0h6m1 0h1m3 0h1m3 0h1m1 0h1m1 0h1m3 0h1m1 0h2m2 0h1m1 0h2m3 0h5m1 0h1m3 0h2m2 0h1m1 0h1m2 0h1m1 0h1m2 0h2m1 0h1m3 0h1m2 0h3m1 0h1m1 0h7m2 0h1m2 0h3m5 0h1m1 0h2m1 0h3m1 0h2m1 0h1m1 0h1m3 0h2m1 0h3m2 0h1m2 0h1m2 0h1m1 0h2m1 0h7m1 0h1m8 0h3m2 0h1m1 0h2m2 0h2M20 149.5h1m2 0h4m1 0h1m2 0h7m1 0h2m3 0h1m1 0h5m1 0h1m1 0h3m7 0h1m1 0h1m1 0h5m1 0h3m1 0h9m1 0h1m1 0h1m3 0h1m1 0h1m1 0h1m1 0h1m2 0h2m7 0h1m1 0h7m1 0h2m1 0h3m1 0h1m3 0h2m1 0h1m1 0h1m1 0h1m1 0h2m2 0h4m3 0h2m2 0h1m7 0h3m1 0h4m4 0h3m1 0h3m1 0h2m1 0h2m2 0h1m1 0h2m1 0h6m1 0h5m1 0h2m1 0h1m1 0h1m3 0h1m1 0h1m6 0h2m1 0h1m1 0h1m1 0h2m2 0h1m1 0h1m2 0h1m1 0h1m1 0h1M25 150.5h2m1 0h1m1 0h2m1 0h4m1 0h3m2 0h2m1 0h3m1 0h4m1 0h9m1 0h5m1 0h1m2 0h2m1 0h1m1 0h3m2 0h1m5 0h4m2 0h1m3 0h3m1 0h1m1 0h1m1 0h5m2 0h1m3 0h1m2 0h1m8 0h2m2 0h1m1 0h2m1 0h6m1 0h2m2 0h1m1 0h2m1 0h3m1 0h1m1 0h1m1 0h4m2 0h1m3 0h1m7 0h2m1 0h1m5 0h2m3 0h3m1 0h2m1 0h3m3 0h4m2 0h3m1 0h1m1 0h2m1 0h2m3 0h2m1 0h3m1 0h1m1 0h4m2 0h2m1 0h1m2 0h1M23 151.5h3m1 0h6m1 0h6m1 0h1m1 0h1m3 0h1m1 0h1m1 0h1m1 0h1m1 0h4m3 0h2m6 0h1m1 0h1m1 0h1m2 0h1m1 0h2m1 0h2m1 0h1m1 0h6m2 0h2m4 0h1m1 0h2m1 0h1m2 0h1m3 0h2m5 0h4m1 0h2m3 0h2m2 0h3m3 0h1m1 0h2m2 0h3m2 0h4m6 0h2m2 0h3m1 0h1m2 0h7m2 0h1m1 0h1m1 0h5m1 0h7m1 0h2m1 0h1m1 0h4m2 0h1m3 0h2m2 0h4m1 0h1m1 0h4m1 0h2m1 0h2m1 0h1m2 0h2m4 0h2m1 0h3M24 152.5h2m1 0h1m2 0h1m1 0h6m3 0h1m2 0h11m3 0h1m1 0h2m4 0h1m1 0h2m3 0h3m2 0h1m1 0h2m3 0h2m3 0h1m2 0h2m1 0h5m1 0h1m1 0h3m1 0h1m7 0h1m2 0h2m1 0h1m2 0h4m2 0h2m2 0h1m1 0h2m1 0h1m1 0h1m2 0h2m1 0h1m4 0h1m2 0h1m1 0h3m1 0h2m1 0h1m1 0h2m1 0h3m3 0h1m1 0h3m4 0h1m1 0h4m1 0h1m2 0h1m2 0h3m9 0h3m2 0h1m3 0h2m1 0h1m1 0h1m2 0h1m1 0h3m1 0h3m2 0h1m1 0h1m2 0h1m1 0h1m2 0h3M24 153.5h1m1 0h2m1 0h2m2 0h1m4 0h1m2 0h1m1 0h1m1 0h1m1 0h1m2 0h3m3 0h4m1 0h1m1 0h1m1 0h3m4 0h1m1 0h4m3 0h2m1 0h2m2 0h1m2 0h1m1 0h3m1 0h3m2 0h1m1 0h2m5 0h1m2 0h1m2 0h1m1 0h2m1 0h3m1 0h1m1 0h1m2 0h1m1 0h1m1 0h1m1 0h1m1 0h1m1 0h1m1 0h1m3 0h1m3 0h3m7 0h3m1 0h2m1 0h1m3 0h3m3 0h1m2 0h1m1 0h3m3 0h4m1 0h2m7 0h2m2 0h2m3 0h1m1 0h1m3 0h5m2 0h1m2 0h1m1 0h1m2 0h2m1 0h3m5 0h3m1 0h1M25 154.5h1m4 0h1m2 0h3m1 0h1m3 0h6m1 0h1m1 0h1m1 0h4m1 0h5m1 0h3m1 0h2m2 0h5m1 0h1m2 0h4m3 0h1m1 0h3m1 0h3m1 0h2m1 0h1m3 0h2m3 0h3m7 0h1m2 0h1m2 0h6m3 0h8m1 0h9m2 0h1m2 0h2m2 0h1m1 0h1m2 0h7m2 0h1m4 0h2m1 0h4m4 0h1m2 0h1m2 0h1m6 0h2m1 0h1m1 0h2m1 0h3m2 0h2m1 0h2m1 0h3m3 0h4m1 0h3m1 0h1m2 0h2m4 0h4M20 155.5h1m4 0h1m4 0h1m1 0h1m2 0h1m1 0h2m1 0h2m1 0h1m1 0h2m2 0h3m3 0h1m2 0h1m1 0h3m2 0h4m3 0h2m1 0h3m4 0h1m1 0h1m2 0h1m1 0h2m1 0h2m2 0h2m2 0h4m3 0h2m1 0h2m2 0h3m1 0h1m1 0h1m1 0h3m1 0h1m3 0h3m1 0h2m3 0h3m2 0h1m1 0h3m1 0h3m1 0h1m2 0h1m4 0h1m1 0h1m3 0h3m2 0h1m1 0h4m1 0h2m1 0h1m1 0h5m1 0h2m1 0h3m1 0h4m1 0h4m1 0h1m2 0h1m1 0h1m1 0h2m2 0h1m4 0h1m2 0h5m2 0h4m1 0h3m1 0h1m1 0h1m1 0h3M16 156.5h1m14 0h1m1 0h4m1 0h2m1 0h1m1 0h3m2 0h4m4 0h2m1 0h2m4 0h1m2 0h1m1 0h1m2 0h1m4 0h3m2 0h2m1 0h2m3 0h4m1 0h2m1 0h2m1 0h3m2 0h4m1 0h1m1 0h1m1 0h1m1 0h2m1 0h1m1 0h1m1 0h4m1 0h1m4 0h1m2 0h3m1 0h1m1 0h2m2 0h1m1 0h1m1 0h3m2 0h4m2 0h2m1 0h7m2 0h5m5 0h1m3 0h1m1 0h7m1 0h3m1 0h3m1 0h3m4 0h1m3 0h1m1 0h1m2 0h1m2 0h1m3 0h6m1 0h2m1 0h4m1 0h1m1 0h2M26 157.5h4m2 0h1m1 0h1m2 0h1m2 0h2m2 0h2m3 0h5m1 0h3m1 0h1m2 0h3m2 0h1m3 0h3m2 0h3m1 0h2m2 0h1m3 0h2m2 0h4m1 0h1m4 0h2m1 0h3m1 0h5m4 0h1m2 0h1m3 0h1m2 0h3m2 0h2m2 0h2m1 0h2m2 0h1m1 0h4m1 0h1m1 0h2m3 0h1m1 0h3m1 0h1m1 0h1m2 0h1m2 0h3m2 0h2m2 0h7m2 0h2m6 0h5m5 0h1m5 0h5m3 0h1m2 0h3m1 0h1m1 0h1m1 0h2m2 0h1m1 0h2m2 0h4m1 0h3M26 158.5h4m1 0h3m1 0h1m1 0h2m3 0h1m2 0h2m1 0h1m1 0h1m1 0h1m2 0h1m2 0h1m2 0h2m1 0h1m1 0h2m1 0h4m1 0h1m2 0h4m4 0h2m2 0h1m2 0h5m1 0h1m1 0h1m1 0h1m2 0h4m1 0h3m2 0h2m1 0h3m1 0h1m1 0h2m3 0h1m3 0h2m1 0h4m5 0h7m1 0h2m1 0h1m3 0h1m1 0h2m1 0h1m1 0h3m1 0h1m1 0h1m1 0h2m1 0h1m5 0h3m2 0h1m2 0h1m1 0h1m1 0h9m4 0h9m1 0h4m2 0h2m6 0h6m2 0h3m1 0h2m1 0h2M26 159.5h1m2 0h1m3 0h4m1 0h2m2 0h1m1 0h1m2 0h2m2 0h1m1 0h2m4 0h1m3 0h3m3 0h2m2 0h3m4 0h1m5 0h2m1 0h3m2 0h2m2 0h1m2 0h4m1 0h2m1 0h1m1 0h1m1 0h3m1 0h2m1 0h5m1 0h1m1 0h5m2 0h1m5 0h1m1 0h2m1 0h2m4 0h2m1 0h3m1 0h1m2 0h1m3 0h4m1 0h7m2 0h1m2 0h1m1 0h3m1 0h1m1 0h1m3 0h1m1 0h1m3 0h1m1 0h1m1 0h3m2 0h1m1 0h1m1 0h2m1 0h3m3 0h1m2 0h2m2 0h3m2 0h2m1 0h6m2 0h2m1 0h1M14 160.5h1m12 0h1m1 0h1m1 0h1m3 0h3m1 0h1m1 0h2m1 0h1m3 0h1m1 0h5m3 0h1m1 0h2m1 0h1m1 0h1m3 0h3m1 0h3m2 0h1m3 0h2m1 0h1m5 0h1m1 0h3m1 0h4m2 0h4m2 0h1m1 0h2m1 0h4m1 0h1m3 0h1m1 0h2m2 0h1m3 0h4m9 0h4m3 0h3m1 0h2m3 0h1m1 0h1m1 0h3m1 0h2m1 0h2m1 0h5m4 0h1m4 0h3m4 0h4m3 0h1m2 0h3m1 0h3m6 0h7m6 0h4m5 0h2m3 0h2m1 0h1M30 161.5h3m4 0h5m1 0h1m4 0h2m4 0h3m1 0h5m2 0h2m1 0h3m1 0h1m1 0h1m4 0h4m2 0h2m3 0h3m1 0h3m2 0h2m1 0h2m4 0h1m2 0h3m1 0h4m1 0h2m1 0h3m1 0h9m2 0h1m1 0h2m1 0h1m4 0h1m1 0h3m4 0h6m1 0h3m1 0h1m1 0h1m2 0h2m1 0h2m2 0h1m2 0h2m2 0h1m1 0h1m4 0h1m2 0h2m1 0h4m1 0h1m1 0h2m2 0h3m1 0h8m1 0h2m1 0h1m1 0h1m1 0h3m1 0h2m2 0h1m1 0h2m2 0h1m1 0h4M29 162.5h1m1 0h1m1 0h1m7 0h2m2 0h1m2 0h2m1 0h3m1 0h6m1 0h2m2 0h2m5 0h1m2 0h1m6 0h4m1 0h1m1 0h1m2 0h1m1 0h1m3 0h1m2 0h1m1 0h3m1 0h2m1 0h2m1 0h5m3 0h2m1 0h2m3 0h1m2 0h4m1 0h3m3 0h1m1 0h1m1 0h3m3 0h3m1 0h1m2 0h1m1 0h2m1 0h4m1 0h1m1 0h5m1 0h1m1 0h1m1 0h1m1 0h1m2 0h1m2 0h1m3 0h1m1 0h1m2 0h1m1 0h2m3 0h5m2 0h2m4 0h1m7 0h2m3 0h2m3 0h2m3 0h2m1 0h2m1 0h2M7 163.5h1m9 0h1m10 0h1m7 0h1m2 0h1m3 0h2m1 0h1m1 0h2m2 0h2m2 0h1m2 0h3m1 0h10m2 0h5m1 0h1m1 0h1m1 0h1m1 0h2m1 0h2m1 0h1m2 0h3m2 0h2m1 0h2m4 0h1m1 0h3m1 0h3m4 0h1m2 0h1m1 0h1m4 0h3m2 0h3m2 0h2m3 0h4m1 0h1m2 0h1m6 0h1m1 0h1m1 0h1m3 0h1m1 0h4m1 0h2m1 0h1m3 0h1m4 0h4m1 0h5m1 0h2m2 0h3m1 0h4m3 0h1m1 0h1m2 0h3m3 0h2m2 0h1m2 0h4m1 0h5m2 0h1m2 0h2M31 164.5h2m1 0h4m3 0h1m2 0h1m1 0h1m1 0h1m3 0h1m1 0h1m1 0h2m1 0h1m3 0h1m4 0h1m1 0h1m1 0h1m1 0h2m1 0h4m4 0h1m2 0h2m4 0h4m1 0h4m2 0h1m1 0h1m1 0h1m2 0h1m2 0h1m5 0h2m1 0h6m1 0h4m1 0h4m2 0h4m1 0h1m1 0h1m1 0h3m1 0h2m1 0h1m1 0h2m2 0h2m1 0h1m1 0h1m2 0h2m2 0h2m3 0h1m2 0h2m1 0h3m1 0h2m3 0h1m1 0h4m1 0h1m2 0h3m1 0h3m1 0h1m3 0h1m1 0h1m5 0h2m1 0h3m2 0h1m1 0h1m2 0h1m4 0h3m1 0h2M31 165.5h1m1 0h2m2 0h1m2 0h1m3 0h2m1 0h1m1 0h1m1 0h1m1 0h10m1 0h1m2 0h4m1 0h2m1 0h2m1 0h2m1 0h4m1 0h3m3 0h1m2 0h2m1 0h1m2 0h2m1 0h3m1 0h3m1 0h6m2 0h1m1 0h2m1 0h1m1 0h1m1 0h4m1 0h1m5 0h7m1 0h1m4 0h3m1 0h1m1 0h4m1 0h2m2 0h1m1 0h1m2 0h3m1 0h1m1 0h1m1 0h4m1 0h3m3 0h5m1 0h2m1 0h1m1 0h3m2 0h1m1 0h3m1 0h5m1 0h1m1 0h4m2 0h1m1 0h2m1 0h3m1 0h6m1 0h2m1 0h1m2 0h1M31 166.5h2m1 0h4m5 0h2m1 0h1m1 0h1m2 0h1m2 0h1m1 0h1m4 0h1m3 0h3m1 0h2m1 0h3m1 0h2m1 0h1m1 0h2m2 0h2m2 0h1m1 0h1m2 0h1m2 0h1m2 0h3m1 0h5m1 0h1m4 0h3m1 0h1m2 0h1m2 0h2m1 0h4m2 0h1m3 0h1m5 0h2m1 0h1m2 0h1m1 0h4m1 0h2m1 0h1m2 0h5m2 0h1m1 0h3m1 0h1m2 0h1m1 0h7m4 0h3m1 0h2m2 0h1m1 0h4m1 0h1m1 0h5m1 0h3m1 0h1m1 0h4m1 0h2m4 0h4m2 0h2m1 0h3m1 0h4M5 167.5h1m24 0h1m5 0h3m3 0h3m2 0h1m1 0h4m1 0h1m2 0h1m1 0h1m2 0h1m1 0h4m1 0h4m1 0h1m1 0h5m4 0h1m1 0h4m3 0h4m1 0h2m2 0h5m3 0h4m1 0h1m1 0h1m1 0h3m1 0h1m1 0h5m2 0h1m2 0h1m1 0h1m1 0h1m1 0h1m3 0h3m1 0h1m4 0h1m4 0h2m1 0h1m4 0h2m1 0h1m1 0h3m3 0h3m1 0h2m1 0h2m1 0h1m2 0h2m4 0h5m1 0h1m1 0h2m2 0h1m2 0h1m3 0h5m1 0h2m1 0h1m5 0h1m1 0h4m1 0h3m1 0h2m3 0h3M20 168.5h1m10 0h1m1 0h1m2 0h1m1 0h4m2 0h2m1 0h1m2 0h2m2 0h4m2 0h3m1 0h6m2 0h5m1 0h1m3 0h3m1 0h2m1 0h2m3 0h1m2 0h1m1 0h5m2 0h1m1 0h2m2 0h1m1 0h1m2 0h3m1 0h2m1 0h2m5 0h2m1 0h4m1 0h4m1 0h2m2 0h2m1 0h1m1 0h1m2 0h1m3 0h3m1 0h3m1 0h6m3 0h1m1 0h2m1 0h1m4 0h3m2 0h1m3 0h2m4 0h1m2 0h1m1 0h3m1 0h4m1 0h5m1 0h1m1 0h3m1 0h2m1 0h2m2 0h1m2 0h5m1 0h1m1 0h2m2 0h1M31 169.5h1m1 0h5m2 0h1m1 0h1m2 0h2m1 0h1m1 0h1m1 0h2m1 0h2m3 0h6m1 0h8m3 0h2m4 0h4m1 0h2m1 0h2m1 0h2m1 0h4m3 0h4m3 0h1m5 0h1m2 0h6m2 0h2m1 0h3m3 0h2m1 0h3m1 0h1m1 0h1m1 0h1m1 0h2m1 0h2m1 0h3m2 0h1m2 0h5m2 0h4m1 0h3m1 0h4m3 0h1m1 0h2m1 0h4m1 0h1m3 0h1m1 0h4m1 0h4m1 0h5m1 0h4m2 0h3m1 0h1m1 0h1m1 0h1m2 0h1m2 0h3m4 0h1m2 0h1M30 170.5h4m1 0h3m3 0h2m4 0h4m2 0h4m6 0h2m1 0h1m1 0h2m5 0h3m1 0h1m4 0h1m1 0h4m2 0h1m1 0h3m1 0h4m3 0h2m3 0h2m1 0h1m4 0h1m5 0h2m1 0h1m2 0h1m5 0h1m3 0h3m1 0h1m4 0h1m1 0h1m1 0h2m1 0h2m1 0h1m1 0h1m2 0h4m1 0h2m1 0h3m3 0h1m2 0h2m1 0h1m1 0h3m1 0h1m1 0h1m1 0h3m1 0h2m1 0h1m1 0h2m3 0h2m2 0h2m2 0h1m2 0h1m1 0h1m5 0h3m3 0h3m4 0h3m1 0h1m3 0h2M30 171.5h2m1 0h1m2 0h2m2 0h3m3 0h2m4 0h1m1 0h4m1 0h1m2 0h1m2 0h1m1 0h2m3 0h4m1 0h1m2 0h2m7 0h3m2 0h1m7 0h2m3 0h1m1 0h2m1 0h3m2 0h8m2 0h4m1 0h3m1 0h1m2 0h2m2 0h1m9 0h1m1 0h1m1 0h4m1 0h1m1 0h5m1 0h5m1 0h2m1 0h1m2 0h1m1 0h5m3 0h4m4 0h1m1 0h2m7 0h3m1 0h2m3 0h3m2 0h1m1 0h6m1 0h1m1 0h1m2 0h6m1 0h1m1 0h2M11 172.5h1m15 0h2m1 0h1m1 0h3m1 0h2m1 0h1m2 0h1m3 0h1m1 0h1m2 0h1m2 0h1m1 0h2m3 0h1m1 0h11m1 0h8m3 0h1m1 0h1m1 0h4m2 0h1m2 0h3m1 0h1m2 0h2m3 0h1m1 0h1m2 0h2m1 0h7m3 0h2m1 0h8m1 0h1m1 0h3m2 0h10m3 0h1m1 0h2m2 0h1m2 0h4m2 0h1m3 0h2m1 0h3m2 0h1m2 0h1m1 0h1m2 0h1m1 0h2m1 0h2m3 0h1m3 0h1m2 0h1m1 0h2m1 0h3m1 0h2m1 0h1m2 0h1m1 0h6m2 0h1m4 0h1m1 0h2m1 0h3M27 173.5h2m1 0h4m1 0h1m4 0h2m1 0h1m1 0h1m3 0h1m1 0h1m1 0h1m6 0h2m1 0h3m3 0h1m2 0h3m3 0h1m2 0h6m1 0h1m1 0h5m3 0h1m2 0h1m1 0h5m3 0h4m3 0h5m1 0h5m1 0h2m1 0h2m1 0h2m2 0h4m1 0h3m2 0h4m1 0h2m1 0h1m1 0h1m2 0h1m2 0h1m3 0h3m2 0h2m1 0h1m2 0h2m2 0h2m3 0h4m2 0h1m1 0h4m2 0h3m4 0h1m2 0h3m3 0h2m2 0h3m3 0h3m1 0h3m1 0h2m6 0h1m2 0h1M25 174.5h5m4 0h1m1 0h5m2 0h1m1 0h3m1 0h1m1 0h3m1 0h5m1 0h2m2 0h2m1 0h5m1 0h5m3 0h2m2 0h1m2 0h3m1 0h1m1 0h4m4 0h3m1 0h2m8 0h1m1 0h1m1 0h3m3 0h3m1 0h1m2 0h1m2 0h2m3 0h1m1 0h1m1 0h3m1 0h3m2 0h1m1 0h3m4 0h1m2 0h2m2 0h2m1 0h1m2 0h2m2 0h1m1 0h2m1 0h2m1 0h6m3 0h1m1 0h2m3 0h1m1 0h5m1 0h4m2 0h1m2 0h2m1 0h1m1 0h1m2 0h3m1 0h2m2 0h1m1 0h1m1 0h1m1 0h1m2 0h1m1 0h1M24 175.5h1m1 0h3m1 0h2m1 0h2m1 0h1m1 0h1m3 0h3m1 0h3m3 0h5m1 0h1m2 0h1m1 0h1m1 0h6m1 0h2m1 0h1m2 0h2m3 0h3m1 0h2m1 0h1m1 0h3m2 0h1m2 0h3m1 0h2m5 0h7m1 0h2m2 0h3m3 0h1m2 0h2m2 0h4m1 0h2m2 0h3m5 0h2m1 0h3m2 0h2m1 0h1m2 0h2m1 0h1m1 0h4m3 0h1m2 0h2m4 0h2m2 0h1m1 0h2m1 0h1m1 0h1m3 0h3m3 0h3m1 0h2m1 0h3m2 0h11m1 0h6m1 0h3m3 0h1m1 0h2M25 176.5h1m2 0h4m1 0h1m1 0h2m1 0h1m1 0h1m2 0h1m2 0h2m3 0h3m1 0h1m1 0h1m1 0h3m1 0h1m4 0h2m2 0h2m3 0h5m1 0h3m1 0h3m3 0h2m1 0h7m4 0h2m1 0h1m1 0h1m1 0h1m1 0h3m2 0h1m1 0h2m3 0h1m4 0h3m1 0h2m1 0h1m2 0h5m1 0h1m3 0h5m1 0h1m5 0h2m4 0h1m1 0h1m1 0h1m1 0h1m1 0h4m3 0h1m3 0h1m1 0h3m1 0h3m2 0h1m1 0h1m2 0h1m1 0h1m1 0h4m1 0h1m1 0h2m3 0h2m5 0h1m1 0h1m1 0h2m4 0h1m3 0h1m1 0h1m1 0h2M22 177.5h2m1 0h5m2 0h1m1 0h3m1 0h2m2 0h2m4 0h2m2 0h3m4 0h2m1 0h3m1 0h4m2 0h1m2 0h7m2 0h3m1 0h1m2 0h1m1 0h2m2 0h3m4 0h6m1 0h1m1 0h1m1 0h1m2 0h8m1 0h15m1 0h1m1 0h1m1 0h1m2 0h1m5 0h1m2 0h3m4 0h1m3 0h2m1 0h2m1 0h5m1 0h4m1 0h1m2 0h1m1 0h1m1 0h2m1 0h7m1 0h2m2 0h2m1 0h3m1 0h1m2 0h2m1 0h2m2 0h1m1 0h1m1 0h2m1 0h1m1 0h2m1 0h1m1 0h1m1 0h1m1 0h4M8 178.5h1m13 0h1m2 0h1m1 0h1m1 0h2m1 0h1m1 0h1m2 0h2m1 0h2m2 0h1m1 0h2m1 0h2m2 0h1m2 0h2m3 0h3m1 0h2m1 0h1m1 0h9m2 0h2m1 0h2m1 0h3m1 0h3m1 0h2m5 0h1m1 0h1m3 0h2m2 0h3m1 0h1m6 0h1m1 0h1m1 0h3m1 0h2m1 0h2m3 0h5m1 0h3m1 0h4m4 0h3m2 0h5m1 0h10m1 0h3m2 0h1m1 0h2m1 0h6m1 0h9m1 0h2m1 0h2m1 0h1m2 0h1m2 0h6m1 0h1m1 0h1m1 0h3m4 0h1m1 0h1m2 0h2m3 0h2m1 0h2M21 179.5h4m1 0h2m1 0h1m1 0h3m3 0h2m4 0h1m1 0h1m1 0h1m1 0h2m2 0h1m1 0h6m1 0h7m4 0h3m1 0h4m1 0h2m1 0h3m2 0h2m3 0h4m1 0h2m1 0h2m2 0h1m1 0h5m5 0h2m1 0h1m1 0h1m1 0h1m2 0h1m2 0h2m1 0h8m1 0h1m1 0h2m1 0h2m2 0h2m1 0h1m1 0h1m1 0h3m1 0h1m3 0h3m1 0h3m2 0h1m2 0h1m1 0h1m3 0h1m1 0h2m5 0h2m1 0h2m1 0h1m2 0h6m1 0h2m1 0h1m1 0h3m1 0h1m2 0h1m1 0h4m3 0h1m3 0h4m1 0h1m1 0h3m1 0h4M26 180.5h3m1 0h2m1 0h1m1 0h2m2 0h1m2 0h1m3 0h1m4 0h1m1 0h2m2 0h1m1 0h1m2 0h3m1 0h1m1 0h1m1 0h6m1 0h5m2 0h1m1 0h1m2 0h2m1 0h1m2 0h2m1 0h3m1 0h1m4 0h6m1 0h5m1 0h1m3 0h2m1 0h6m2 0h1m1 0h1m1 0h2m3 0h2m1 0h1m2 0h1m3 0h2m2 0h1m1 0h2m2 0h4m1 0h1m3 0h1m1 0h1m1 0h5m2 0h4m2 0h1m5 0h3m1 0h2m1 0h4m2 0h1m1 0h3m1 0h1m1 0h3m2 0h1m2 0h5m1 0h1m1 0h1m5 0h3m1 0h1m1 0h1m1 0h4M8 181.5h1m17 0h2m3 0h1m2 0h3m6 0h2m1 0h3m4 0h6m2 0h4m1 0h3m1 0h3m1 0h3m2 0h3m1 0h4m1 0h1m1 0h2m1 0h13m2 0h10m1 0h4m1 0h3m1 0h2m1 0h2m1 0h5m1 0h1m2 0h2m2 0h4m2 0h2m1 0h3m1 0h2m1 0h4m1 0h3m1 0h6m3 0h2m1 0h3m5 0h2m3 0h3m6 0h1m1 0h3m2 0h1m1 0h1m1 0h4m1 0h3m1 0h2m3 0h1m1 0h3m3 0h4m1 0h3m2 0h1M24 182.5h1m5 0h1m2 0h1m1 0h1m4 0h3m1 0h3m1 0h2m2 0h2m4 0h1m2 0h2m2 0h1m1 0h1m1 0h3m6 0h2m1 0h2m1 0h1m1 0h5m1 0h2m2 0h1m2 0h5m4 0h6m2 0h1m3 0h1m2 0h2m1 0h2m2 0h2m1 0h2m2 0h4m1 0h1m1 0h1m1 0h1m2 0h5m1 0h1m1 0h1m3 0h4m1 0h3m1 0h3m1 0h3m1 0h1m3 0h1m1 0h1m1 0h3m1 0h1m1 0h1m3 0h8m1 0h3m1 0h1m2 0h2m4 0h3m1 0h4m1 0h1m1 0h1m1 0h5m1 0h10m3 0h1M22 183.5h1m1 0h5m3 0h2m1 0h2m1 0h4m2 0h2m5 0h4m1 0h2m2 0h1m2 0h1m1 0h3m1 0h6m3 0h1m2 0h4m1 0h2m1 0h1m2 0h1m4 0h1m2 0h3m2 0h1m2 0h1m2 0h3m1 0h1m6 0h2m2 0h1m1 0h2m1 0h1m1 0h2m2 0h6m1 0h4m1 0h1m2 0h1m1 0h3m1 0h3m2 0h2m1 0h2m1 0h3m1 0h1m1 0h2m2 0h1m1 0h2m1 0h3m2 0h2m1 0h3m2 0h2m2 0h1m1 0h2m1 0h1m1 0h1m1 0h2m4 0h5m1 0h1m3 0h2m2 0h2m1 0h2m2 0h1m1 0h2m1 0h2m2 0h2m1 0h2M22 184.5h3m2 0h1m2 0h2m2 0h2m1 0h1m1 0h1m1 0h2m1 0h5m3 0h4m1 0h5m2 0h1m1 0h3m1 0h1m2 0h5m1 0h2m2 0h3m2 0h1m1 0h1m2 0h3m1 0h1m1 0h1m4 0h1m2 0h3m1 0h1m1 0h1m1 0h3m1 0h2m1 0h1m1 0h2m1 0h2m2 0h2m1 0h1m1 0h2m1 0h2m2 0h2m2 0h1m1 0h6m1 0h2m2 0h2m1 0h1m3 0h1m2 0h2m3 0h2m3 0h1m2 0h2m1 0h1m4 0h3m1 0h1m3 0h1m1 0h2m5 0h1m1 0h2m2 0h2m1 0h4m2 0h1m1 0h1m2 0h2m5 0h6m1 0h1m6 0h2M19 185.5h1m2 0h2m2 0h1m1 0h3m1 0h3m4 0h2m3 0h1m1 0h7m1 0h1m3 0h1m2 0h2m1 0h5m2 0h1m2 0h1m4 0h6m1 0h4m1 0h2m6 0h1m2 0h2m1 0h2m1 0h1m1 0h4m2 0h1m2 0h2m1 0h2m4 0h1m1 0h1m3 0h5m1 0h2m2 0h2m1 0h3m1 0h5m2 0h3m2 0h1m1 0h1m1 0h1m2 0h2m1 0h1m1 0h1m1 0h4m6 0h3m1 0h1m2 0h2m1 0h2m1 0h1m3 0h6m1 0h2m1 0h4m1 0h2m1 0h1m2 0h4m3 0h1m4 0h1m2 0h1m1 0h1m2 0h1m1 0h2m1 0h1M23 186.5h4m2 0h3m1 0h6m1 0h2m1 0h1m2 0h2m7 0h1m2 0h1m2 0h2m1 0h1m2 0h3m5 0h2m2 0h3m1 0h1m1 0h1m1 0h4m1 0h1m1 0h3m1 0h2m2 0h2m2 0h1m1 0h1m2 0h1m2 0h1m1 0h4m4 0h6m1 0h4m2 0h3m2 0h1m1 0h3m1 0h2m1 0h3m1 0h2m1 0h1m1 0h1m2 0h2m2 0h1m2 0h3m2 0h2m1 0h1m2 0h2m1 0h2m2 0h7m2 0h6m1 0h6m4 0h1m3 0h2m1 0h1m1 0h1m1 0h2m3 0h1m1 0h1m2 0h1m1 0h3m1 0h1m1 0h3m1 0h1M24 187.5h1m4 0h1m2 0h7m1 0h2m2 0h2m1 0h3m1 0h1m1 0h1m2 0h7m1 0h3m1 0h2m1 0h2m1 0h1m1 0h3m4 0h2m2 0h1m5 0h1m3 0h7m2 0h1m1 0h4m1 0h1m1 0h2m2 0h3m3 0h1m2 0h1m1 0h3m2 0h2m1 0h4m1 0h1m3 0h1m2 0h3m1 0h2m1 0h1m3 0h1m3 0h2m2 0h1m3 0h2m1 0h1m1 0h3m3 0h2m1 0h3m1 0h1m4 0h2m2 0h1m1 0h1m6 0h1m1 0h2m4 0h2m1 0h2m1 0h2m1 0h4m3 0h1m3 0h2m1 0h3m1 0h3m3 0h1M26 188.5h6m1 0h3m1 0h1m1 0h1m1 0h3m1 0h4m1 0h1m3 0h2m1 0h2m1 0h2m2 0h1m2 0h2m1 0h4m1 0h1m5 0h2m1 0h4m1 0h1m4 0h2m1 0h5m2 0h3m2 0h1m1 0h1m2 0h5m1 0h2m3 0h3m1 0h3m1 0h5m2 0h6m4 0h1m1 0h1m2 0h2m1 0h2m1 0h2m4 0h5m1 0h2m1 0h2m3 0h5m2 0h2m5 0h1m2 0h1m1 0h2m1 0h4m2 0h2m2 0h3m1 0h2m3 0h1m1 0h1m1 0h2m3 0h4m2 0h1m1 0h1m2 0h3m4 0h1M6 189.5h1m16 0h1m4 0h1m1 0h1m2 0h1m1 0h1m2 0h1m1 0h3m1 0h2m1 0h1m1 0h1m4 0h3m2 0h9m1 0h1m1 0h3m1 0h2m1 0h1m1 0h2m3 0h7m1 0h1m3 0h1m5 0h3m1 0h1m2 0h2m2 0h2m1 0h2m6 0h2m1 0h1m1 0h5m1 0h1m2 0h1m1 0h2m1 0h5m1 0h2m2 0h8m1 0h1m1 0h1m1 0h2m1 0h5m1 0h1m1 0h1m4 0h5m1 0h1m4 0h1m1 0h1m2 0h2m2 0h2m2 0h3m1 0h3m1 0h1m1 0h3m2 0h1m1 0h1m1 0h1m2 0h3m2 0h1m1 0h4m4 0h3m1 0h2M20 190.5h1m3 0h2m1 0h2m1 0h3m1 0h3m1 0h7m2 0h2m2 0h1m1 0h1m4 0h1m7 0h2m3 0h4m1 0h1m1 0h3m2 0h7m1 0h1m1 0h6m1 0h8m1 0h4m1 0h3m1 0h1m1 0h1m2 0h3m1 0h2m3 0h1m2 0h1m1 0h3m4 0h1m2 0h2m1 0h2m2 0h2m2 0h1m2 0h2m3 0h1m1 0h3m1 0h1m1 0h2m4 0h2m2 0h1m1 0h3m1 0h2m1 0h1m4 0h1m3 0h5m2 0h1m1 0h1m1 0h1m1 0h1m1 0h1m1 0h1m1 0h5m1 0h1m1 0h3m1 0h1m1 0h4m2 0h1m2 0h6M23 191.5h3m2 0h3m4 0h1m3 0h4m2 0h3m1 0h1m1 0h3m1 0h1m2 0h3m1 0h3m1 0h1m1 0h1m7 0h1m2 0h2m1 0h2m1 0h1m4 0h3m3 0h1m1 0h4m2 0h2m1 0h2m1 0h1m1 0h2m1 0h2m2 0h1m1 0h2m3 0h2m1 0h1m1 0h1m2 0h1m1 0h5m1 0h1m1 0h6m1 0h2m2 0h2m2 0h2m2 0h1m1 0h2m1 0h1m1 0h2m1 0h15m3 0h1m1 0h3m1 0h1m1 0h2m1 0h4m1 0h3m1 0h1m3 0h3m1 0h3m1 0h2m3 0h3m1 0h2m1 0h5m1 0h2m1 0h2m2 0h1m1 0h1M10 192.5h1m9 0h3m1 0h1m1 0h3m1 0h1m1 0h1m1 0h1m1 0h1m2 0h1m1 0h1m1 0h8m4 0h3m2 0h2m3 0h7m5 0h4m2 0h3m3 0h1m1 0h3m1 0h1m1 0h8m3 0h1m2 0h1m2 0h1m1 0h1m2 0h1m2 0h1m1 0h1m3 0h2m1 0h2m4 0h1m3 0h1m1 0h6m3 0h3m1 0h2m1 0h3m1 0h1m1 0h2m1 0h1m1 0h1m1 0h2m1 0h1m1 0h1m1 0h3m3 0h1m1 0h2m1 0h5m3 0h1m1 0h2m1 0h1m1 0h2m1 0h1m1 0h2m1 0h1m2 0h2m3 0h2m2 0h4m1 0h3m4 0h1m1 0h1m1 0h1m1 0h1m5 0h2M19 193.5h4m4 0h1m2 0h2m1 0h2m1 0h1m1 0h2m3 0h6m3 0h4m7 0h1m1 0h1m1 0h1m2 0h3m2 0h1m1 0h2m3 0h3m1 0h4m1 0h1m6 0h1m1 0h3m1 0h2m1 0h1m3 0h2m3 0h2m2 0h8m5 0h1m1 0h1m2 0h1m2 0h3m2 0h1m1 0h3m1 0h1m1 0h5m1 0h3m1 0h1m1 0h1m6 0h2m2 0h4m1 0h2m1 0h2m2 0h4m1 0h3m4 0h1m2 0h1m1 0h1m1 0h2m4 0h3m1 0h3m1 0h2m1 0h1m2 0h2m1 0h1m1 0h1m4 0h5m2 0h2m1 0h2M17 194.5h1m2 0h1m3 0h2m1 0h3m1 0h1m1 0h1m1 0h2m2 0h1m2 0h1m1 0h2m2 0h5m3 0h1m1 0h1m1 0h6m1 0h6m1 0h1m4 0h1m2 0h2m1 0h1m1 0h2m1 0h1m1 0h1m1 0h1m2 0h7m2 0h3m1 0h2m3 0h1m2 0h2m2 0h2m3 0h1m5 0h1m1 0h3m1 0h1m1 0h1m1 0h1m1 0h4m1 0h1m1 0h2m2 0h1m1 0h2m1 0h3m1 0h6m2 0h2m9 0h4m1 0h3m1 0h1m1 0h3m8 0h1m2 0h3m1 0h1m1 0h2m2 0h1m1 0h2m1 0h3m2 0h2m2 0h4m1 0h2m1 0h4m3 0h1m1 0h1M18 195.5h3m1 0h3m2 0h4m1 0h2m3 0h6m1 0h1m2 0h3m2 0h2m3 0h1m1 0h1m1 0h3m1 0h5m2 0h1m1 0h3m3 0h1m1 0h2m1 0h4m1 0h3m1 0h7m1 0h1m2 0h2m4 0h1m1 0h1m2 0h3m2 0h5m3 0h2m3 0h1m2 0h6m2 0h1m2 0h1m1 0h3m1 0h3m2 0h6m1 0h3m4 0h6m3 0h1m6 0h3m2 0h2m1 0h1m1 0h2m1 0h2m2 0h3m1 0h1m1 0h1m1 0h2m1 0h5m1 0h1m2 0h5m1 0h2m2 0h6m1 0h2m2 0h1m1 0h2M11 196.5h1m4 0h5m1 0h2m1 0h3m2 0h1m1 0h1m1 0h3m1 0h1m2 0h1m1 0h2m1 0h1m3 0h1m1 0h1m3 0h4m4 0h2m1 0h1m1 0h3m2 0h1m1 0h2m1 0h1m1 0h2m2 0h2m3 0h2m2 0h1m2 0h17m1 0h1m1 0h1m5 0h2m2 0h1m2 0h1m1 0h2m2 0h1m2 0h3m1 0h1m2 0h2m1 0h3m2 0h1m1 0h2m2 0h1m1 0h1m2 0h1m1 0h1m2 0h1m2 0h1m3 0h4m3 0h4m1 0h1m1 0h1m2 0h2m1 0h2m1 0h3m2 0h1m1 0h1m3 0h2m1 0h5m1 0h2m1 0h6m3 0h1m1 0h2m1 0h1m3 0h1m1 0h4M18 197.5h3m2 0h2m2 0h4m1 0h1m1 0h5m2 0h1m1 0h2m2 0h1m1 0h1m2 0h2m1 0h2m2 0h1m1 0h2m2 0h2m1 0h4m1 0h4m3 0h1m1 0h2m1 0h1m1 0h1m2 0h5m1 0h4m3 0h3m1 0h1m1 0h4m2 0h3m1 0h1m1 0h1m2 0h1m4 0h1m3 0h6m1 0h1m1 0h1m1 0h3m1 0h7m1 0h1m1 0h8m1 0h4m3 0h1m1 0h3m1 0h2m2 0h1m1 0h1m3 0h1m1 0h5m1 0h4m3 0h1m1 0h1m1 0h2m1 0h1m1 0h1m1 0h2m1 0h2m1 0h1m1 0h2m3 0h3m2 0h1m1 0h2m1 0h2m1 0h2m1 0h6M14 198.5h1m2 0h1m4 0h1m4 0h2m2 0h7m3 0h2m1 0h2m1 0h5m1 0h1m2 0h1m2 0h2m6 0h5m2 0h2m1 0h1m1 0h1m1 0h1m1 0h1m1 0h9m2 0h2m2 0h1m2 0h1m1 0h1m1 0h1m2 0h5m1 0h2m1 0h1m2 0h3m4 0h2m1 0h7m3 0h2m1 0h1m1 0h7m3 0h4m1 0h3m1 0h2m3 0h1m2 0h1m1 0h1m1 0h1m3 0h1m1 0h1m2 0h2m1 0h1m1 0h1m1 0h3m3 0h1m6 0h1m5 0h1m2 0h1m1 0h2m1 0h2m3 0h2m1 0h1m1 0h1m1 0h2m3 0h2m1 0h2m1 0h1m2 0h3M19 199.5h1m6 0h2m1 0h2m1 0h3m2 0h6m2 0h1m3 0h1m3 0h4m2 0h3m2 0h6m2 0h1m1 0h1m1 0h3m3 0h3m2 0h2m1 0h1m5 0h2m1 0h2m1 0h1m2 0h1m1 0h2m1 0h1m1 0h1m1 0h8m4 0h3m1 0h1m1 0h4m5 0h1m1 0h8m2 0h2m2 0h10m1 0h1m2 0h3m1 0h1m3 0h3m1 0h2m1 0h1m3 0h1m1 0h2m4 0h1m1 0h2m2 0h2m3 0h4m2 0h2m2 0h6m1 0h1m2 0h3m1 0h1m1 0h2m3 0h3M15 200.5h2m1 0h1m1 0h2m2 0h2m1 0h2m3 0h1m1 0h3m1 0h4m2 0h2m2 0h1m1 0h2m1 0h3m2 0h3m3 0h2m2 0h3m1 0h2m3 0h3m2 0h1m1 0h1m2 0h1m1 0h3m1 0h3m1 0h1m2 0h6m1 0h6m1 0h2m9 0h1m1 0h1m1 0h1m1 0h2m3 0h6m1 0h1m1 0h2m2 0h2m1 0h1m1 0h1m3 0h4m1 0h4m2 0h2m1 0h3m1 0h4m3 0h5m1 0h1m4 0h2m2 0h1m7 0h1m1 0h1m1 0h1m6 0h4m2 0h3m2 0h1m1 0h6m2 0h2m1 0h1m2 0h1m2 0h2M15 201.5h1m2 0h1m1 0h1m1 0h1m1 0h2m1 0h3m1 0h3m2 0h2m1 0h4m2 0h2m3 0h4m2 0h2m1 0h1m2 0h1m1 0h1m3 0h3m2 0h2m6 0h4m1 0h2m3 0h4m4 0h4m2 0h2m1 0h3m1 0h1m5 0h1m1 0h1m4 0h1m4 0h4m3 0h1m2 0h1m1 0h3m2 0h6m1 0h1m5 0h4m1 0h2m1 0h2m1 0h3m1 0h1m1 0h2m3 0h2m1 0h7m1 0h3m7 0h1m1 0h4m2 0h1m3 0h4m1 0h2m2 0h1m1 0h2m1 0h1m1 0h1m1 0h1m4 0h1m2 0h4m1 0h2m2 0h1M18 202.5h2m1 0h1m2 0h2m2 0h1m1 0h1m2 0h5m1 0h1m1 0h1m1 0h2m3 0h1m1 0h1m1 0h1m1 0h3m1 0h1m1 0h1m2 0h2m1 0h4m1 0h7m4 0h2m1 0h2m1 0h1m2 0h3m1 0h1m1 0h3m1 0h1m1 0h4m6 0h1m1 0h1m1 0h1m1 0h6m3 0h5m4 0h1m1 0h5m1 0h1m1 0h2m3 0h1m2 0h1m1 0h3m1 0h1m2 0h4m1 0h4m2 0h1m1 0h1m4 0h4m2 0h10m2 0h3m5 0h1m2 0h2m1 0h1m1 0h1m1 0h3m1 0h1m1 0h3m1 0h5m1 0h4m2 0h1m2 0h2m2 0h1m1 0h2M15 203.5h3m1 0h1m1 0h1m1 0h1m1 0h1m1 0h5m1 0h1m2 0h1m2 0h1m1 0h1m3 0h10m2 0h2m1 0h1m1 0h5m2 0h2m1 0h7m1 0h1m1 0h1m3 0h2m1 0h1m2 0h1m1 0h2m2 0h3m1 0h4m2 0h1m1 0h8m3 0h1m1 0h1m1 0h6m1 0h2m1 0h3m4 0h2m5 0h3m1 0h3m1 0h2m1 0h3m3 0h2m1 0h5m1 0h1m1 0h2m2 0h1m1 0h3m3 0h6m3 0h1m1 0h1m1 0h2m4 0h2m1 0h2m2 0h3m1 0h1m1 0h2m1 0h1m1 0h1m2 0h5m1 0h4m3 0h1m1 0h2m1 0h4M11 204.5h2m2 0h1m1 0h1m1 0h1m1 0h6m1 0h1m3 0h6m3 0h2m1 0h1m1 0h2m1 0h2m1 0h3m4 0h1m1 0h1m2 0h1m1 0h1m1 0h2m1 0h1m2 0h1m2 0h2m1 0h1m2 0h1m6 0h1m1 0h1m3 0h1m5 0h3m1 0h7m1 0h1m1 0h1m1 0h2m1 0h1m2 0h1m1 0h1m1 0h2m1 0h1m2 0h2m1 0h2m2 0h1m1 0h3m1 0h3m6 0h1m1 0h1m1 0h1m3 0h1m1 0h3m3 0h2m4 0h1m1 0h1m4 0h2m2 0h1m1 0h2m1 0h1m1 0h1m1 0h4m1 0h2m1 0h1m2 0h3m1 0h1m2 0h2m1 0h2m1 0h1m1 0h3m1 0h2m1 0h9m2 0h1m1 0h3m2 0h2M14 205.5h2m1 0h1m1 0h1m1 0h1m2 0h5m1 0h1m1 0h1m3 0h7m1 0h2m1 0h5m2 0h1m4 0h2m2 0h2m1 0h3m1 0h3m1 0h7m4 0h1m2 0h1m1 0h1m6 0h4m1 0h4m8 0h5m2 0h1m1 0h2m1 0h2m1 0h1m2 0h2m2 0h3m2 0h1m3 0h2m3 0h1m3 0h1m3 0h5m1 0h3m2 0h2m4 0h2m3 0h1m1 0h1m2 0h1m1 0h3m1 0h1m1 0h2m1 0h1m2 0h1m1 0h2m1 0h2m1 0h1m2 0h2m2 0h6m1 0h1m2 0h1m2 0h4m1 0h2m1 0h4m1 0h4m1 0h4m1 0h1M13 206.5h2m1 0h2m1 0h1m1 0h3m1 0h1m1 0h1m1 0h2m3 0h1m1 0h5m1 0h1m2 0h4m1 0h1m1 0h9m2 0h2m1 0h2m2 0h1m1 0h2m1 0h3m4 0h6m2 0h2m1 0h1m3 0h3m3 0h1m2 0h2m1 0h1m2 0h1m4 0h2m1 0h3m4 0h1m2 0h2m1 0h1m1 0h1m1 0h2m1 0h4m3 0h2m2 0h4m1 0h5m3 0h1m1 0h3m1 0h1m3 0h3m2 0h2m1 0h7m1 0h3m2 0h2m1 0h1m1 0h3m3 0h4m4 0h1m2 0h2m1 0h1m1 0h1m3 0h2m1 0h3m1 0h1m1 0h1m1 0h1m2 0h1m5 0h3m1 0h1M4 207.5h1m9 0h3m2 0h1m2 0h1m5 0h4m1 0h2m1 0h2m1 0h2m2 0h4m1 0h1m1 0h3m2 0h1m3 0h2m1 0h3m3 0h7m2 0h1m2 0h3m1 0h4m1 0h8m3 0h1m3 0h1m1 0h3m1 0h3m1 0h3m1 0h1m1 0h1m1 0h3m2 0h1m1 0h1m3 0h2m1 0h1m3 0h1m2 0h3m1 0h1m1 0h1m3 0h7m2 0h1m1 0h5m1 0h4m1 0h2m1 0h1m2 0h5m1 0h1m1 0h1m1 0h6m1 0h5m1 0h2m4 0h2m1 0h2m1 0h2m1 0h3m1 0h7m1 0h1m4 0h2m1 0h1m2 0h1m1 0h3m2 0h1M15 208.5h1m1 0h1m1 0h2m4 0h1m1 0h1m4 0h1m1 0h1m2 0h2m5 0h2m1 0h4m1 0h3m2 0h2m2 0h8m3 0h1m1 0h6m2 0h6m1 0h1m2 0h3m2 0h3m4 0h2m1 0h2m1 0h1m3 0h1m1 0h3m1 0h1m3 0h1m1 0h3m3 0h1m1 0h14m2 0h4m1 0h1m4 0h1m3 0h1m3 0h8m4 0h1m2 0h1m1 0h1m3 0h3m3 0h1m3 0h1m1 0h3m1 0h3m1 0h1m1 0h2m2 0h1m1 0h1m1 0h3m6 0h1m1 0h3m1 0h1m1 0h1m1 0h2m1 0h4m1 0h3m1 0h1M15 209.5h3m3 0h2m1 0h3m1 0h3m2 0h2m1 0h1m1 0h1m5 0h5m1 0h3m1 0h2m2 0h1m1 0h1m2 0h1m2 0h3m2 0h5m1 0h7m1 0h4m4 0h1m1 0h8m1 0h1m1 0h1m1 0h1m1 0h1m1 0h2m5 0h1m5 0h1m1 0h1m3 0h1m2 0h4m1 0h3m2 0h3m2 0h1m1 0h1m1 0h1m1 0h1m1 0h1m3 0h1m1 0h5m1 0h1m1 0h2m2 0h3m2 0h1m1 0h2m2 0h2m1 0h1m2 0h1m1 0h2m3 0h3m1 0h6m1 0h1m1 0h1m1 0h1m4 0h1m1 0h1m2 0h4m1 0h1m2 0h2m1 0h2m2 0h1m1 0h1m2 0h3m2 0h1M16 210.5h1m2 0h1m1 0h5m2 0h1m1 0h1m2 0h2m3 0h1m3 0h2m4 0h1m3 0h1m3 0h9m1 0h1m1 0h1m3 0h3m1 0h1m1 0h2m1 0h2m5 0h2m1 0h1m2 0h2m2 0h1m3 0h2m2 0h3m1 0h1m2 0h1m1 0h1m4 0h2m3 0h8m1 0h2m1 0h1m1 0h3m3 0h1m1 0h6m4 0h1m5 0h2m1 0h1m2 0h2m3 0h1m3 0h1m1 0h3m2 0h6m2 0h1m2 0h6m3 0h1m1 0h5m1 0h10m1 0h1m2 0h6m1 0h2m2 0h2m1 0h2m3 0h1m2 0h1M12 211.5h1m9 0h1m2 0h5m1 0h2m2 0h1m1 0h2m3 0h1m1 0h1m1 0h1m1 0h1m1 0h1m2 0h1m1 0h1m2 0h1m2 0h4m3 0h1m3 0h1m1 0h1m2 0h1m1 0h1m2 0h1m1 0h3m1 0h1m1 0h2m1 0h1m1 0h2m1 0h1m5 0h4m5 0h2m1 0h1m1 0h1m2 0h3m2 0h2m1 0h1m1 0h3m1 0h8m1 0h2m1 0h4m5 0h6m1 0h1m1 0h4m1 0h1m1 0h3m2 0h2m1 0h1m1 0h1m1 0h1m1 0h1m1 0h1m2 0h1m1 0h4m1 0h3m2 0h2m1 0h4m2 0h1m3 0h1m2 0h1m3 0h1m1 0h1m4 0h3m1 0h3m1 0h2m1 0h2m2 0h4M13 212.5h1m4 0h3m2 0h1m1 0h2m1 0h1m1 0h1m2 0h7m1 0h3m2 0h1m1 0h2m1 0h1m1 0h1m1 0h1m1 0h5m1 0h1m1 0h2m2 0h1m1 0h1m1 0h2m3 0h5m1 0h1m1 0h8m2 0h2m1 0h2m1 0h2m1 0h1m2 0h3m1 0h3m1 0h4m3 0h1m1 0h2m1 0h4m2 0h1m3 0h1m1 0h6m2 0h2m2 0h1m1 0h1m1 0h3m2 0h3m1 0h1m2 0h1m4 0h2m2 0h3m1 0h1m1 0h3m1 0h2m1 0h2m3 0h2m2 0h1m1 0h1m1 0h1m1 0h2m2 0h4m2 0h2m1 0h4m2 0h2m1 0h2m5 0h2m1 0h1m2 0h7m3 0h1M13 213.5h2m3 0h2m5 0h1m2 0h1m2 0h1m1 0h1m1 0h4m1 0h1m1 0h1m8 0h1m2 0h3m1 0h2m1 0h1m2 0h4m1 0h1m2 0h1m1 0h2m2 0h1m1 0h1m1 0h1m3 0h4m1 0h3m2 0h1m3 0h2m1 0h1m1 0h1m1 0h2m1 0h2m2 0h3m2 0h4m1 0h2m2 0h2m4 0h1m2 0h1m1 0h1m2 0h1m1 0h1m1 0h3m2 0h1m3 0h4m2 0h4m1 0h5m2 0h5m1 0h1m2 0h1m3 0h2m2 0h1m2 0h4m1 0h4m1 0h2m6 0h1m2 0h3m2 0h1m5 0h1m4 0h1m1 0h2m1 0h2m2 0h1m1 0h2m3 0h5M12 214.5h2m1 0h2m1 0h2m1 0h1m1 0h1m1 0h3m3 0h5m3 0h3m2 0h3m3 0h6m3 0h2m1 0h1m2 0h1m1 0h1m1 0h2m4 0h5m1 0h3m3 0h4m1 0h3m1 0h2m3 0h2m1 0h2m2 0h2m2 0h1m1 0h2m1 0h1m1 0h3m1 0h1m1 0h1m1 0h1m1 0h2m1 0h5m1 0h4m2 0h1m1 0h2m1 0h1m2 0h2m1 0h2m2 0h3m1 0h1m1 0h1m2 0h5m2 0h2m2 0h4m1 0h1m1 0h1m2 0h3m1 0h1m3 0h4m3 0h1m3 0h4m1 0h1m2 0h6m1 0h1m2 0h3m2 0h1m2 0h1m2 0h1m2 0h1m1 0h2m1 0h1m1 0h1M10 215.5h1m2 0h1m2 0h3m1 0h1m1 0h1m1 0h3m1 0h5m1 0h1m2 0h1m1 0h1m1 0h1m1 0h4m2 0h3m1 0h1m3 0h1m5 0h7m3 0h1m1 0h2m2 0h2m3 0h5m3 0h1m2 0h3m1 0h2m2 0h4m2 0h2m1 0h1m1 0h1m2 0h2m2 0h1m3 0h1m1 0h1m1 0h1m1 0h1m1 0h1m2 0h3m1 0h4m2 0h1m1 0h1m3 0h2m1 0h1m1 0h1m1 0h2m1 0h1m3 0h1m1 0h2m1 0h2m1 0h1m1 0h1m2 0h1m1 0h2m2 0h2m8 0h1m1 0h2m3 0h4m1 0h1m6 0h2m4 0h2m1 0h3m1 0h2m1 0h2m2 0h2m2 0h4m1 0h3m2 0h1m1 0h1M9 216.5h2m1 0h3m2 0h1m1 0h2m1 0h1m1 0h1m2 0h1m3 0h1m3 0h5m3 0h2m1 0h5m1 0h1m1 0h3m2 0h2m1 0h1m1 0h1m3 0h3m3 0h5m2 0h4m1 0h3m2 0h1m1 0h1m1 0h5m3 0h6m1 0h1m3 0h1m1 0h1m1 0h1m1 0h8m1 0h7m3 0h1m2 0h1m5 0h1m1 0h3m1 0h1m1 0h3m1 0h3m2 0h1m1 0h3m2 0h2m1 0h6m1 0h3m1 0h1m1 0h3m4 0h3m1 0h1m4 0h8m1 0h1m1 0h1m2 0h1m1 0h4m1 0h3m3 0h3m3 0h1m6 0h1m2 0h2M7 217.5h1m1 0h1m3 0h2m3 0h1m6 0h1m1 0h1m2 0h10m1 0h2m1 0h1m1 0h4m1 0h3m2 0h6m1 0h1m1 0h1m2 0h1m3 0h2m1 0h4m2 0h1m1 0h1m2 0h2m1 0h2m1 0h3m3 0h1m1 0h2m1 0h1m1 0h4m1 0h1m1 0h2m2 0h1m1 0h2m2 0h1m2 0h5m2 0h1m1 0h1m2 0h2m1 0h1m1 0h4m1 0h1m1 0h1m4 0h6m1 0h1m3 0h1m1 0h2m1 0h2m2 0h2m2 0h1m1 0h1m1 0h1m5 0h1m1 0h2m1 0h1m1 0h2m1 0h1m2 0h2m4 0h1m2 0h5m2 0h3m2 0h1m1 0h1m2 0h4m1 0h1m1 0h4m1 0h1m1 0h4m1 0h1m1 0h2M6 218.5h5m1 0h1m1 0h1m1 0h1m1 0h1m1 0h1m1 0h3m3 0h3m2 0h2m2 0h3m3 0h1m1 0h1m1 0h5m3 0h1m1 0h2m1 0h2m1 0h1m2 0h3m2 0h2m1 0h3m1 0h1m1 0h2m1 0h1m2 0h1m1 0h1m1 0h2m3 0h1m1 0h1m2 0h3m4 0h3m1 0h1m6 0h1m2 0h2m3 0h1m1 0h3m2 0h3m5 0h1m4 0h1m1 0h1m1 0h4m1 0h1m5 0h1m2 0h2m1 0h1m1 0h1m1 0h2m1 0h2m1 0h1m1 0h6m2 0h5m3 0h1m2 0h2m1 0h3m3 0h2m3 0h1m1 0h3m1 0h1m4 0h3m1 0h2m1 0h1m1 0h1m1 0h3m3 0h6m3 0h2M10 219.5h2m1 0h1m1 0h3m1 0h4m4 0h3m2 0h1m2 0h1m1 0h4m1 0h1m1 0h4m4 0h3m1 0h2m1 0h6m1 0h1m3 0h3m1 0h1m3 0h3m2 0h2m1 0h1m2 0h3m1 0h5m2 0h2m1 0h1m1 0h1m1 0h1m6 0h6m2 0h4m1 0h4m2 0h2m4 0h1m3 0h2m1 0h2m1 0h1m1 0h3m1 0h2m1 0h1m5 0h2m1 0h3m1 0h1m2 0h1m1 0h1m3 0h2m5 0h1m2 0h4m5 0h2m2 0h2m1 0h1m2 0h5m2 0h1m2 0h1m1 0h2m3 0h2m1 0h2m2 0h1m2 0h3m1 0h4m1 0h3m2 0h1M6 220.5h2m2 0h2m1 0h2m1 0h2m8 0h3m1 0h1m1 0h1m3 0h1m1 0h2m1 0h2m1 0h3m1 0h3m1 0h4m2 0h1m4 0h1m1 0h1m1 0h1m1 0h1m2 0h1m1 0h1m1 0h1m1 0h2m2 0h1m4 0h2m1 0h2m2 0h1m1 0h9m1 0h1m1 0h1m1 0h6m1 0h2m2 0h4m1 0h4m2 0h1m2 0h1m1 0h1m1 0h2m1 0h11m3 0h3m6 0h1m1 0h4m1 0h1m1 0h1m1 0h1m2 0h1m2 0h5m1 0h4m1 0h2m1 0h2m4 0h1m3 0h3m2 0h2m3 0h1m1 0h1m2 0h3m6 0h2m1 0h1m1 0h2m1 0h1m1 0h3m1 0h2m1 0h2M5 221.5h2m2 0h1m2 0h1m1 0h1m1 0h4m2 0h3m2 0h2m1 0h1m1 0h1m2 0h1m1 0h1m1 0h1m1 0h1m3 0h2m2 0h3m2 0h1m7 0h1m2 0h1m1 0h1m2 0h4m1 0h1m2 0h1m1 0h1m1 0h1m2 0h1m1 0h1m3 0h1m2 0h1m1 0h2m4 0h1m1 0h7m1 0h4m6 0h3m1 0h1m3 0h3m1 0h1m5 0h1m3 0h1m2 0h3m2 0h9m1 0h1m3 0h2m1 0h1m1 0h11m1 0h1m1 0h1m1 0h2m2 0h5m3 0h1m1 0h4m2 0h1m4 0h2m1 0h2m2 0h2m3 0h1m3 0h2m1 0h3m1 0h3m1 0h3m1 0h3m1 0h2M5 222.5h4m1 0h4m2 0h1m2 0h1m1 0h3m2 0h2m1 0h1m2 0h1m1 0h1m3 0h1m5 0h1m1 0h2m4 0h2m2 0h2m1 0h1m3 0h1m4 0h2m1 0h3m3 0h2m3 0h3m2 0h1m1 0h3m7 0h3m3 0h1m2 0h1m3 0h1m1 0h8m1 0h2m4 0h1m2 0h4m3 0h1m1 0h6m1 0h3m2 0h10m1 0h2m4 0h1m1 0h4m2 0h2m1 0h1m1 0h1m2 0h1m2 0h2m1 0h1m1 0h3m1 0h2m5 0h1m3 0h2m2 0h1m1 0h4m1 0h1m4 0h1m1 0h2m1 0h2m1 0h1m1 0h3m1 0h1m4 0h1m3 0h3M4 223.5h2m1 0h2m2 0h1m1 0h3m2 0h6m1 0h1m3 0h1m1 0h1m4 0h4m2 0h2m1 0h2m1 0h2m1 0h2m2 0h1m1 0h1m1 0h1m1 0h2m1 0h1m1 0h3m1 0h2m4 0h2m1 0h1m4 0h2m3 0h1m2 0h4m2 0h4m3 0h1m2 0h1m2 0h5m5 0h1m2 0h1m1 0h1m1 0h3m1 0h1m2 0h2m2 0h2m1 0h3m1 0h2m2 0h1m3 0h6m1 0h1m1 0h10m1 0h1m1 0h1m3 0h2m2 0h1m1 0h1m1 0h1m1 0h2m1 0h1m6 0h3m2 0h4m1 0h2m1 0h1m2 0h3m1 0h2m1 0h13m6 0h4m1 0h2m1 0h1M8 224.5h1m3 0h1m1 0h3m4 0h3m2 0h3m1 0h1m3 0h2m2 0h2m2 0h5m3 0h2m3 0h1m4 0h1m2 0h3m1 0h2m1 0h1m2 0h7m2 0h1m3 0h3m2 0h1m1 0h2m2 0h3m3 0h2m1 0h5m4 0h1m2 0h1m1 0h3m1 0h6m4 0h1m1 0h1m1 0h4m1 0h1m1 0h5m1 0h2m1 0h1m1 0h1m1 0h2m1 0h4m2 0h1m1 0h1m1 0h1m1 0h2m1 0h2m3 0h3m1 0h4m1 0h1m3 0h3m4 0h1m1 0h5m2 0h2m2 0h2m1 0h1m2 0h2m4 0h7m1 0h1m1 0h1m3 0h2m3 0h1m1 0h1m1 0h2M5 225.5h2m4 0h2m1 0h1m1 0h2m1 0h2m2 0h1m2 0h3m2 0h5m1 0h1m4 0h1m1 0h1m1 0h1m1 0h1m1 0h1m2 0h1m1 0h3m2 0h1m1 0h1m2 0h1m1 0h1m1 0h1m1 0h1m2 0h1m3 0h3m1 0h2m1 0h7m5 0h1m1 0h2m1 0h3m3 0h1m2 0h1m1 0h3m1 0h1m1 0h3m1 0h7m1 0h3m3 0h2m2 0h1m1 0h1m1 0h4m2 0h3m1 0h3m1 0h1m1 0h1m4 0h3m5 0h3m2 0h4m1 0h1m2 0h2m1 0h1m2 0h1m1 0h1m2 0h2m2 0h1m1 0h3m1 0h1m5 0h6m2 0h1m1 0h1m1 0h2m1 0h1m2 0h1m1 0h1m1 0h6m1 0h2m1 0h1m1 0h3M4 226.5h2m3 0h1m4 0h1m1 0h1m3 0h1m3 0h1m1 0h3m1 0h1m4 0h7m1 0h1m3 0h2m1 0h2m3 0h3m4 0h1m1 0h8m2 0h1m1 0h1m1 0h1m2 0h1m1 0h3m2 0h1m2 0h2m1 0h2m4 0h2m1 0h2m1 0h3m2 0h2m2 0h4m1 0h1m1 0h2m2 0h1m1 0h7m1 0h3m1 0h1m1 0h2m1 0h2m3 0h2m1 0h1m1 0h2m1 0h1m1 0h2m2 0h1m1 0h1m2 0h2m3 0h1m1 0h2m2 0h1m4 0h2m1 0h1m1 0h2m3 0h1m1 0h3m1 0h2m2 0h4m2 0h1m6 0h11m1 0h1m2 0h1m1 0h4m1 0h4m1 0h3M5 227.5h1m1 0h1m4 0h2m2 0h1m1 0h4m2 0h1m2 0h1m3 0h1m1 0h3m1 0h4m5 0h1m1 0h1m1 0h1m3 0h1m2 0h1m2 0h1m6 0h1m2 0h2m1 0h4m1 0h1m2 0h1m3 0h3m1 0h1m1 0h3m3 0h1m2 0h2m3 0h2m1 0h4m4 0h2m1 0h1m1 0h3m4 0h4m1 0h1m1 0h1m2 0h2m2 0h1m1 0h1m1 0h1m1 0h1m2 0h4m2 0h2m1 0h4m1 0h4m1 0h1m1 0h1m2 0h1m1 0h1m1 0h1m1 0h1m1 0h1m2 0h4m2 0h2m2 0h2m1 0h2m3 0h1m1 0h1m1 0h1m2 0h7m1 0h2m1 0h3m1 0h1m1 0h1m2 0h6m2 0h4m1 0h3m1 0h3M5 228.5h1m1 0h1m1 0h1m1 0h7m1 0h4m1 0h1m3 0h1m1 0h4m5 0h2m4 0h3m2 0h3m4 0h1m1 0h4m1 0h1m3 0h1m2 0h1m4 0h1m1 0h1m1 0h8m1 0h1m3 0h3m1 0h6m1 0h1m1 0h2m2 0h1m3 0h1m1 0h1m2 0h2m4 0h4m1 0h2m2 0h6m1 0h1m3 0h1m1 0h7m3 0h2m1 0h4m1 0h1m1 0h2m4 0h1m1 0h4m1 0h1m3 0h4m1 0h1m2 0h4m5 0h2m1 0h1m2 0h2m1 0h5m2 0h4m1 0h1m1 0h3m1 0h1m1 0h1m4 0h1m2 0h6m2 0h4M2 229.5h2m2 0h9m1 0h1m1 0h3m1 0h9m2 0h1m1 0h3m3 0h3m1 0h1m3 0h2m3 0h2m1 0h4m1 0h2m1 0h2m2 0h2m1 0h5m1 0h2m1 0h6m1 0h1m1 0h2m2 0h1m3 0h1m2 0h3m2 0h2m1 0h1m2 0h1m4 0h1m3 0h2m1 0h6m2 0h1m1 0h2m1 0h3m1 0h6m2 0h2m1 0h4m1 0h1m1 0h2m1 0h2m2 0h2m4 0h2m1 0h2m2 0h4m1 0h3m2 0h1m1 0h4m4 0h1m1 0h5m2 0h9m1 0h1m1 0h1m2 0h2m1 0h4m2 0h1m2 0h2m1 0h2m1 0h2m1 0h1m2 0h4M5 230.5h2m5 0h3m1 0h1m2 0h3m1 0h1m3 0h2m1 0h1m1 0h6m3 0h1m1 0h4m1 0h11m2 0h1m1 0h1m3 0h4m1 0h1m1 0h2m1 0h7m6 0h1m3 0h1m1 0h1m2 0h3m3 0h1m1 0h3m2 0h1m5 0h1m1 0h1m1 0h1m2 0h2m1 0h1m1 0h3m1 0h3m2 0h3m1 0h1m2 0h5m2 0h1m1 0h1m1 0h1m1 0h3m1 0h1m5 0h2m1 0h2m1 0h9m1 0h4m1 0h1m2 0h4m1 0h1m1 0h2m2 0h4m3 0h2m3 0h1m3 0h1m1 0h4m3 0h4m1 0h1m4 0h1m1 0h2m4 0h1M3 231.5h1m3 0h1m1 0h6m1 0h4m3 0h2m2 0h3m3 0h2m3 0h1m3 0h1m2 0h9m2 0h1m4 0h11m3 0h3m1 0h4m1 0h3m1 0h1m1 0h1m2 0h1m1 0h2m1 0h3m1 0h1m1 0h2m3 0h1m1 0h2m6 0h4m1 0h3m1 0h1m3 0h1m1 0h1m2 0h2m2 0h3m2 0h2m1 0h3m1 0h1m1 0h2m4 0h1m1 0h2m2 0h5m1 0h4m5 0h1m1 0h1m1 0h2m2 0h1m1 0h1m1 0h1m4 0h1m2 0h1m4 0h3m1 0h1m2 0h1m1 0h3m2 0h1m2 0h8m1 0h3m2 0h2m1 0h2m2 0h1m1 0h2M4 232.5h3m1 0h1m1 0h4m3 0h1m1 0h5m2 0h2m4 0h1m3 0h1m1 0h1m2 0h7m6 0h1m1 0h2m2 0h3m1 0h1m1 0h3m1 0h3m1 0h2m1 0h2m1 0h5m1 0h5m1 0h2m1 0h2m1 0h6m3 0h1m1 0h2m1 0h2m1 0h3m2 0h3m1 0h1m1 0h1m1 0h2m2 0h5m2 0h2m1 0h2m1 0h1m1 0h3m3 0h3m1 0h2m2 0h2m3 0h4m2 0h2m1 0h7m1 0h12m1 0h2m3 0h3m1 0h1m5 0h2m3 0h1m1 0h1m1 0h1m1 0h3m1 0h3m2 0h1m2 0h4m1 0h2m2 0h1m1 0h1m3 0h2M3 233.5h2m2 0h1m1 0h2m2 0h1m2 0h1m1 0h3m5 0h1m2 0h3m5 0h4m3 0h1m1 0h7m1 0h2m1 0h2m1 0h4m1 0h1m1 0h2m2 0h1m1 0h3m1 0h2m2 0h1m3 0h2m4 0h4m1 0h1m1 0h1m3 0h1m1 0h1m1 0h2m1 0h2m1 0h1m2 0h2m1 0h6m1 0h1m1 0h3m1 0h1m2 0h1m1 0h1m1 0h1m1 0h1m1 0h3m1 0h4m1 0h1m3 0h2m8 0h2m2 0h2m2 0h4m1 0h3m1 0h4m4 0h1m1 0h2m3 0h1m1 0h1m2 0h1m2 0h2m1 0h1m1 0h1m1 0h1m1 0h2m1 0h1m2 0h1m1 0h1m2 0h2m2 0h4m1 0h1m3 0h2m1 0h7m1 0h2M4 234.5h1m6 0h3m2 0h4m2 0h3m3 0h3m2 0h2m2 0h1m3 0h2m2 0h2m1 0h2m1 0h1m3 0h5m1 0h7m1 0h7m3 0h1m1 0h1m1 0h3m2 0h4m2 0h1m1 0h1m1 0h3m1 0h2m2 0h2m2 0h1m1 0h1m2 0h2m2 0h1m3 0h2m2 0h3m1 0h2m2 0h1m2 0h1m1 0h7m1 0h6m1 0h4m1 0h1m1 0h1m2 0h5m3 0h3m1 0h3m1 0h1m3 0h1m2 0h1m2 0h2m4 0h1m1 0h2m2 0h3m2 0h1m1 0h2m3 0h3m1 0h4m5 0h1m2 0h1m1 0h4m1 0h6m4 0h1m1 0h1M8 235.5h2m2 0h4m3 0h2m1 0h2m1 0h1m1 0h6m1 0h1m1 0h2m3 0h3m5 0h1m2 0h2m3 0h1m2 0h1m1 0h1m2 0h1m5 0h4m1 0h1m2 0h1m1 0h1m1 0h2m1 0h2m1 0h2m1 0h1m2 0h5m1 0h1m1 0h4m1 0h1m1 0h1m1 0h1m1 0h5m2 0h1m1 0h3m3 0h1m4 0h2m1 0h1m3 0h5m1 0h2m2 0h5m1 0h3m1 0h1m7 0h2m2 0h3m5 0h1m1 0h4m1 0h2m1 0h3m2 0h4m2 0h1m5 0h1m1 0h1m1 0h3m1 0h2m1 0h1m1 0h1m1 0h1m2 0h3m1 0h2m2 0h1m4 0h1m2 0h1m2 0h4m1 0h1M7 236.5h1m1 0h1m4 0h3m1 0h1m1 0h2m1 0h1m1 0h1m2 0h2m1 0h1m1 0h10m1 0h1m1 0h1m2 0h4m1 0h1m1 0h1m2 0h2m2 0h5m2 0h1m1 0h1m1 0h3m5 0h2m1 0h2m2 0h2m1 0h2m5 0h1m1 0h1m1 0h1m2 0h1m2 0h1m3 0h2m2 0h1m1 0h5m3 0h3m4 0h1m2 0h1m1 0h1m1 0h3m1 0h2m2 0h6m1 0h1m1 0h2m2 0h4m1 0h1m2 0h8m1 0h5m1 0h1m1 0h2m2 0h3m1 0h1m1 0h3m1 0h4m1 0h1m1 0h1m3 0h3m1 0h2m3 0h1m2 0h1m2 0h2m2 0h2m1 0h1m2 0h1m1 0h1m1 0h2m2 0h1m1 0h2M10 237.5h5m2 0h2m1 0h3m1 0h2m2 0h3m4 0h1m4 0h4m1 0h2m2 0h2m2 0h1m3 0h1m2 0h1m1 0h1m1 0h3m1 0h4m1 0h2m4 0h4m4 0h1m3 0h2m1 0h4m1 0h1m4 0h1m7 0h1m4 0h1m1 0h3m3 0h2m1 0h2m1 0h1m2 0h1m1 0h1m3 0h1m1 0h4m1 0h3m1 0h5m3 0h2m1 0h1m3 0h1m1 0h1m8 0h1m3 0h2m1 0h1m1 0h3m1 0h1m1 0h1m2 0h1m2 0h1m2 0h7m1 0h2m1 0h3m1 0h1m1 0h1m1 0h3m2 0h1m3 0h7m1 0h4m1 0h2m1 0h1m2 0h1M10 238.5h2m2 0h5m2 0h3m1 0h4m2 0h2m1 0h3m1 0h2m4 0h2m1 0h1m1 0h1m1 0h4m3 0h2m1 0h8m1 0h1m7 0h4m3 0h5m2 0h3m1 0h5m1 0h1m1 0h3m1 0h9m1 0h2m2 0h2m1 0h1m2 0h1m1 0h4m1 0h1m2 0h3m1 0h2m1 0h1m4 0h1m1 0h1m1 0h1m2 0h2m2 0h3m2 0h2m3 0h1m1 0h5m4 0h2m2 0h1m1 0h2m3 0h1m5 0h4m2 0h5m2 0h1m1 0h6m2 0h4m1 0h1m1 0h3m1 0h1m1 0h5m1 0h7m1 0h2M13 239.5h3m3 0h1m1 0h3m3 0h4m1 0h4m2 0h1m5 0h1m1 0h6m1 0h1m1 0h2m2 0h4m1 0h2m3 0h3m1 0h3m2 0h4m1 0h2m1 0h1m2 0h1m1 0h4m1 0h1m2 0h2m1 0h1m1 0h1m5 0h8m3 0h3m1 0h5m1 0h5m2 0h3m1 0h2m1 0h2m1 0h1m2 0h3m3 0h1m1 0h1m2 0h1m1 0h1m2 0h1m1 0h2m1 0h6m3 0h1m2 0h1m1 0h1m2 0h3m1 0h3m1 0h1m1 0h1m4 0h2m2 0h3m2 0h1m1 0h4m1 0h3m1 0h1m2 0h1m1 0h2m1 0h5m2 0h2m2 0h1m2 0h3m1 0h1M10 240.5h3m2 0h2m2 0h1m1 0h2m1 0h2m4 0h2m1 0h1m2 0h1m3 0h3m2 0h1m2 0h2m1 0h1m2 0h1m1 0h3m1 0h1m3 0h4m1 0h5m1 0h1m3 0h5m2 0h1m1 0h2m3 0h3m1 0h1m1 0h1m1 0h1m1 0h5m1 0h6m2 0h1m4 0h1m2 0h3m2 0h3m1 0h3m1 0h2m1 0h2m2 0h1m3 0h1m1 0h1m2 0h2m1 0h6m1 0h1m1 0h1m1 0h1m1 0h5m1 0h2m4 0h3m1 0h4m1 0h1m1 0h6m1 0h1m3 0h4m2 0h1m4 0h1m1 0h2m2 0h1m1 0h3m1 0h1m3 0h1m4 0h3m2 0h1m1 0h1m1 0h2m2 0h2M15 241.5h1m3 0h1m1 0h3m1 0h1m1 0h1m1 0h4m7 0h2m1 0h2m2 0h1m1 0h1m1 0h1m1 0h1m1 0h1m1 0h1m3 0h2m2 0h3m1 0h1m2 0h1m1 0h3m1 0h1m1 0h2m1 0h2m1 0h3m1 0h1m1 0h1m1 0h3m3 0h1m1 0h2m3 0h4m1 0h2m1 0h3m2 0h1m2 0h5m1 0h3m1 0h4m2 0h3m2 0h1m1 0h3m1 0h1m1 0h1m3 0h3m4 0h2m4 0h1m2 0h2m1 0h5m2 0h1m2 0h1m1 0h5m2 0h1m1 0h2m4 0h2m1 0h1m2 0h1m3 0h1m1 0h1m3 0h2m1 0h1m2 0h3m1 0h1m1 0h3m3 0h2m2 0h4m1 0h1m1 0h1m1 0h2M14 242.5h1m2 0h1m2 0h5m2 0h1m1 0h4m1 0h2m1 0h5m1 0h1m2 0h2m1 0h3m1 0h1m1 0h1m1 0h1m1 0h2m4 0h1m1 0h1m1 0h2m2 0h6m2 0h8m1 0h6m2 0h1m4 0h5m1 0h2m1 0h4m2 0h2m1 0h4m1 0h1m1 0h1m2 0h1m3 0h4m3 0h3m3 0h2m1 0h2m4 0h1m1 0h1m3 0h4m1 0h3m1 0h3m2 0h3m2 0h4m1 0h3m1 0h2m1 0h1m1 0h1m1 0h1m6 0h2m1 0h1m2 0h2m1 0h10m2 0h3m1 0h2m5 0h3m3 0h1m1 0h5M10 243.5h1m5 0h2m6 0h2m1 0h1m1 0h3m2 0h4m6 0h1m2 0h2m3 0h1m1 0h2m1 0h3m1 0h1m1 0h1m3 0h4m3 0h2m1 0h1m1 0h5m1 0h2m1 0h1m4 0h1m2 0h2m5 0h1m1 0h3m3 0h3m1 0h1m1 0h2m1 0h1m1 0h2m1 0h3m1 0h4m2 0h5m2 0h1m5 0h2m1 0h1m1 0h1m1 0h1m4 0h1m2 0h1m1 0h1m5 0h5m2 0h1m2 0h3m2 0h3m3 0h4m1 0h2m1 0h1m2 0h1m1 0h2m3 0h5m3 0h1m1 0h5m1 0h1m1 0h3m1 0h1m2 0h1m1 0h3m1 0h3m1 0h6M7 244.5h1m2 0h2m2 0h1m2 0h2m1 0h2m1 0h1m1 0h3m1 0h3m4 0h1m1 0h1m1 0h3m4 0h2m1 0h11m2 0h6m3 0h1m1 0h7m3 0h1m1 0h1m1 0h1m1 0h3m1 0h1m3 0h1m1 0h2m3 0h3m1 0h1m3 0h2m2 0h1m3 0h4m1 0h2m2 0h1m1 0h3m1 0h2m1 0h5m5 0h2m3 0h5m1 0h3m2 0h3m3 0h1m2 0h1m2 0h1m1 0h2m1 0h3m1 0h2m2 0h2m1 0h2m3 0h2m1 0h1m3 0h1m1 0h1m2 0h2m2 0h5m1 0h1m2 0h3m2 0h1m1 0h4m2 0h4m3 0h1m2 0h1m1 0h1m1 0h1M4 245.5h1m1 0h1m1 0h3m2 0h2m1 0h5m1 0h4m2 0h1m2 0h5m1 0h1m2 0h2m1 0h1m3 0h1m3 0h10m1 0h1m1 0h2m1 0h1m2 0h1m1 0h1m1 0h1m4 0h1m1 0h2m1 0h2m2 0h1m2 0h1m1 0h3m2 0h2m5 0h2m1 0h4m3 0h1m3 0h1m3 0h1m3 0h1m1 0h3m1 0h1m1 0h2m1 0h1m3 0h5m1 0h1m1 0h4m1 0h1m1 0h1m1 0h2m4 0h1m2 0h5m1 0h3m3 0h3m2 0h4m2 0h1m2 0h1m1 0h1m4 0h1m1 0h6m3 0h2m2 0h1m1 0h3m1 0h1m2 0h1m2 0h1m1 0h3m1 0h3m1 0h1m1 0h2m5 0h1m1 0h2M4 246.5h1m2 0h2m1 0h1m2 0h3m3 0h5m1 0h1m1 0h2m1 0h1m1 0h2m1 0h4m2 0h1m1 0h3m1 0h2m7 0h3m1 0h1m1 0h3m1 0h4m1 0h2m2 0h4m2 0h1m1 0h3m1 0h2m1 0h3m3 0h1m1 0h3m1 0h2m1 0h1m1 0h5m1 0h1m1 0h5m1 0h6m1 0h2m1 0h1m1 0h2m1 0h1m3 0h1m1 0h2m1 0h2m2 0h7m6 0h3m1 0h4m1 0h4m1 0h2m2 0h1m2 0h2m1 0h1m2 0h1m1 0h1m1 0h6m1 0h2m3 0h1m2 0h1m2 0h1m2 0h2m1 0h3m1 0h3m1 0h3m4 0h1m1 0h2m2 0h1m1 0h3m1 0h1m2 0h1m1 0h2M4 247.5h1m3 0h1m2 0h4m4 0h2m3 0h2m1 0h4m1 0h1m2 0h1m3 0h2m1 0h2m1 0h1m3 0h1m2 0h3m2 0h4m1 0h1m1 0h2m1 0h3m2 0h1m3 0h1m1 0h2m2 0h1m1 0h1m2 0h3m1 0h1m1 0h1m1 0h1m1 0h1m2 0h1m2 0h3m2 0h2m2 0h1m2 0h1m1 0h1m1 0h3m1 0h3m2 0h2m1 0h2m1 0h2m2 0h3m1 0h6m7 0h1m2 0h2m1 0h9m3 0h7m1 0h4m1 0h4m1 0h1m3 0h5m1 0h1m2 0h6m1 0h2m1 0h1m1 0h1m1 0h5m1 0h3m1 0h2m1 0h5m1 0h5m3 0h1m1 0h1m1 0h2M3 248.5h3m1 0h3m1 0h1m1 0h1m1 0h2m1 0h1m1 0h2m1 0h3m1 0h1m1 0h2m2 0h5m2 0h2m2 0h1m2 0h1m1 0h2m2 0h1m2 0h3m1 0h1m1 0h6m2 0h2m1 0h4m1 0h2m2 0h1m1 0h4m3 0h1m1 0h1m1 0h2m2 0h3m4 0h4m1 0h5m1 0h1m1 0h6m1 0h2m2 0h1m1 0h1m2 0h1m1 0h1m5 0h1m1 0h3m2 0h1m1 0h1m1 0h1m5 0h2m4 0h1m1 0h1m2 0h1m2 0h3m1 0h1m4 0h2m1 0h1m1 0h2m4 0h2m1 0h3m2 0h1m2 0h3m1 0h4m1 0h1m1 0h2m1 0h1m1 0h7m1 0h4m1 0h5m2 0h4m1 0h1m1 0h1M2 249.5h1m3 0h6m2 0h1m1 0h6m2 0h1m5 0h1m1 0h1m1 0h6m4 0h4m1 0h2m2 0h6m1 0h2m1 0h4m6 0h1m1 0h2m1 0h1m1 0h5m2 0h5m2 0h4m1 0h1m2 0h1m1 0h5m3 0h2m1 0h1m1 0h6m1 0h1m1 0h2m1 0h3m3 0h3m1 0h3m1 0h1m6 0h2m1 0h1m1 0h4m2 0h3m1 0h2m4 0h2m1 0h6m1 0h3m1 0h1m3 0h1m1 0h2m1 0h1m2 0h1m1 0h1m1 0h5m3 0h6m3 0h3m5 0h1m2 0h1m1 0h4m2 0h2m1 0h3m1 0h1m2 0h3M4 250.5h2m1 0h5m2 0h1m3 0h1m1 0h2m5 0h2m2 0h3m4 0h2m1 0h1m1 0h3m2 0h3m3 0h1m2 0h1m1 0h1m1 0h7m1 0h3m2 0h1m2 0h2m1 0h2m1 0h4m1 0h1m1 0h1m1 0h2m1 0h1m4 0h2m4 0h2m1 0h3m1 0h3m1 0h2m1 0h1m1 0h2m3 0h2m2 0h5m1 0h1m1 0h3m5 0h2m2 0h2m5 0h5m1 0h1m2 0h4m1 0h2m1 0h2m1 0h6m1 0h1m2 0h1m1 0h1m2 0h1m2 0h3m6 0h3m5 0h3m2 0h3m1 0h5m2 0h1m2 0h3m3 0h1m1 0h1m1 0h2m1 0h5"/><path stroke="#47110e" stroke-width="1" fill="none" d="M0 0.5h1m1 0h3m1 0h1m3 0h1m2 0h4m3 0h2M0 1.5h3m1 0h3m2 0h6m3 0h2M0 2.5h1m3 0h1m2 0h2m1 0h2m3 0h4M0 3.5h4m5 0h1m1 0h1m1 0h1m1 0h4M0 4.5h4m1 0h2m2 0h1m5 0h2M0 5.5h3m1 0h3m1 0h2m2 0h3M0 6.5h1m1 0h7m1 0h1m1 0h2M0 7.5h4m2 0h1m2 0h2m2 0h1M0 8.5h1m1 0h3m1 0h1m2 0h3M0 9.5h2m1 0h1m2 0h1m1 0h2m3 0h1M0 10.5h1m1 0h3m1 0h1m1 0h4M0 11.5h3m1 0h2m1 0h1m1 0h2M0 12.5h1m3 0h1m1 0h1m1 0h5M0 13.5h3m1 0h1m4 0h2M0 14.5h1m2 0h1m1 0h2M0 15.5h1m3 0h2m1 0h1m1 0h1M0 16.5h1m6 0h2m1 0h2M0 17.5h3m3 0h1M0 18.5h1m2 0h5m2 0h2M0 19.5h6m1 0h1m1 0h1m1 0h1M0 20.5h1m2 0h1m1 0h1m1 0h1m1 0h2M0 21.5h1m2 0h2m6 0h2M0 22.5h8m1 0h4M0 23.5h1m3 0h1m1 0h6m2 0h1M0 24.5h3m1 0h4m3 0h2M0 25.5h1m1 0h1m1 0h2m1 0h1m1 0h1m1 0h1m2 0h1M0 26.5h1m2 0h1m3 0h1m1 0h2M0 27.5h10m1 0h1m1 0h1M0 28.5h1m1 0h1m3 0h2m3 0h1m1 0h2M0 29.5h8m1 0h1m1 0h1m2 0h1M0 30.5h10m1 0h3m1 0h1M0 31.5h1m1 0h2m1 0h2m1 0h1m1 0h3m1 0h1m1 0h3M0 32.5h1m4 0h1m1 0h1m2 0h1m1 0h2m1 0h3M0 33.5h1m1 0h1m1 0h1m2 0h1m2 0h4m1 0h1m3 0h2M0 34.5h2m2 0h1m3 0h2m1 0h2m1 0h1m3 0h1m3 0h1m1 0h1M0 35.5h1m1 0h3m1 0h2m1 0h3m1 0h1m2 0h1m2 0h5m1 0h2M0 36.5h4m1 0h2m3 0h2m1 0h2m1 0h1m5 0h1m1 0h3m1 0h3M0 37.5h4m1 0h2m2 0h2m1 0h1m2 0h1m1 0h2m3 0h5m2 0h1M0 38.5h1m1 0h3m1 0h1m1 0h3m1 0h1m1 0h4m1 0h6m3 0h1m2 0h1m1 0h1M0 39.5h3m4 0h3m2 0h1m2 0h1m3 0h1m1 0h2m1 0h1m1 0h1m2 0h6M0 40.5h2m1 0h1m2 0h2m4 0h1m1 0h1m2 0h1m4 0h2m1 0h1m1 0h1m2 0h2m2 0h1M0 41.5h2m3 0h4m1 0h3m2 0h2m3 0h2m1 0h2m1 0h4m1 0h2M0 42.5h2m2 0h1m3 0h1m3 0h1m1 0h2m1 0h1m6 0h3m1 0h1m2 0h2M0 43.5h1m1 0h1m4 0h2m4 0h1m2 0h1m1 0h6m1 0h1m1 0h1M0 44.5h2m3 0h5m1 0h2m7 0h3m1 0h6M0 45.5h2m2 0h1m4 0h1m1 0h1m3 0h1m3 0h1m1 0h2m2 0h1M0 46.5h1m3 0h2m1 0h5m1 0h3m1 0h1m1 0h1m4 0h3M0 47.5h2m3 0h2m1 0h2m3 0h3m1 0h1m1 0h1m2 0h2m1 0h1M0 48.5h1m7 0h1m1 0h2m6 0h2m1 0h2m1 0h1M0 49.5h2m9 0h2m1 0h2m2 0h2M0 50.5h3m8 0h1m1 0h1m1 0h3m1 0h4M0 51.5h1m11 0h1m1 0h3m1 0h6M0 52.5h3m9 0h1m1 0h1m3 0h6m1 0h1M0 53.5h1m16 0h2m1 0h1m1 0h1M0 54.5h3m10 0h2m1 0h3m2 0h4M0 55.5h2m12 0h2m5 0h2m1 0h1M0 56.5h1m1 0h1m12 0h3m1 0h2m1 0h1m1 0h1M0 57.5h1m1 0h1m12 0h1m1 0h2M0 58.5h1m1 0h1m11 0h3m2 0h2M0 59.5h2m14 0h6m1 0h1M0 60.5h3m11 0h1m1 0h4m1 0h1M0 61.5h1m14 0h2m1 0h3M0 62.5h3m11 0h1m1 0h2m1 0h1M0 63.5h1m13 0h2m1 0h3M0 64.5h2M0 65.5h3M0 66.5h1M0 67.5h2M0 68.5h1m1 0h1M0 69.5h2M0 70.5h2M0 71.5h3M0 72.5h2M0 73.5h1M0 74.5h3M0 75.5h1M0 76.5h3M0 77.5h2M0 78.5h1m1 0h1M0 79.5h3M0 80.5h1m1 0h1M0 81.5h1M0 82.5h1m1 0h1M0 83.5h1m2 0h1M0 84.5h2m1 0h1M0 85.5h2M0 86.5h1m2 0h1M0 87.5h1m3 0h1M0 88.5h1m1 0h4M0 89.5h6M0 90.5h1m1 0h2M0 91.5h1M0 92.5h2m1 0h1M0 93.5h1m1 0h2m1 0h1M0 94.5h3M0 95.5h1m1 0h1m1 0h1M0 96.5h3M0 97.5h2M0 98.5h3M0 99.5h1M0 100.5h1m2 0h1M0 101.5h1M0 102.5h1m2 0h1M0 103.5h2m1 0h2M0 104.5h1m1 0h2M0 105.5h1m1 0h4M0 106.5h2m2 0h1M0 107.5h2m3 0h2M0 108.5h1m1 0h2M0 109.5h7M0 110.5h1m1 0h4m1 0h1M0 111.5h7M0 112.5h1m2 0h2m1 0h2M0 113.5h1m4 0h3M0 114.5h3m2 0h1m1 0h3M0 115.5h3m2 0h3m1 0h1M0 116.5h1m1 0h3m1 0h3M0 117.5h1m1 0h1m1 0h1m1 0h2m1 0h1M0 118.5h2m2 0h1m4 0h1M0 119.5h2m1 0h1m1 0h2M0 120.5h1m3 0h3M0 121.5h4m1 0h1M0 122.5h2m3 0h2M0 123.5h3m1 0h1m1 0h2M0 124.5h2m1 0h1m1 0h4M0 125.5h1m2 0h2m3 0h1m1 0h1M0 126.5h1m2 0h1m4 0h1m1 0h2M0 127.5h3m1 0h2m1 0h1m1 0h1m1 0h2M0 128.5h2m2 0h1m6 0h2M0 129.5h2m2 0h2m1 0h2M0 130.5h4m2 0h3M0 131.5h4m2 0h2M0 132.5h2m1 0h1m2 0h1M0 133.5h4M0 134.5h2m2 0h1M0 135.5h3m1 0h3M0 136.5h1M0 137.5h1m1 0h2M0 138.5h1m1 0h4M0 139.5h3M0 140.5h5m1 0h1M0 141.5h3m1 0h3M0 142.5h2m3 0h2M0 143.5h3m1 0h1m1 0h1M0 144.5h2m1 0h1m2 0h1M0 145.5h1m2 0h1m1 0h1M0 146.5h4m1 0h1M0 147.5h4m1 0h1m4 0h2M0 148.5h2m1 0h2m1 0h2m1 0h1m2 0h3m2 0h1M0 149.5h2m3 0h3m1 0h1m2 0h1m3 0h1m1 0h2M0 150.5h1m3 0h1m4 0h3m2 0h1m1 0h2m2 0h1M0 151.5h1m1 0h2m3 0h11m1 0h1m2 0h1M0 152.5h5m3 0h1m5 0h4m3 0h2M0 153.5h4m1 0h3m1 0h1m2 0h3m1 0h2m1 0h1m2 0h2M0 154.5h4m4 0h1m1 0h3m2 0h2m1 0h1m1 0h1M0 155.5h2m1 0h2m1 0h4m2 0h2m1 0h1m3 0h1M0 156.5h3m2 0h2m1 0h1m1 0h3m2 0h1m2 0h1m3 0h4M0 157.5h1m3 0h1m4 0h2m1 0h1m1 0h6m1 0h5M0 158.5h1m1 0h1m1 0h1m1 0h4m1 0h1m2 0h1m1 0h4m2 0h1m1 0h1M0 159.5h1m1 0h4m3 0h4m1 0h1m1 0h3m2 0h1m1 0h3M0 160.5h1m1 0h5m1 0h1m2 0h2m3 0h1m1 0h2m1 0h1m2 0h2M0 161.5h4m1 0h7m4 0h1m4 0h3m1 0h1m1 0h2M0 162.5h1m2 0h1m2 0h1m1 0h4m1 0h2m2 0h1m2 0h2m3 0h3M0 163.5h1m2 0h3m2 0h2m4 0h2m4 0h4m2 0h2M0 164.5h5m1 0h1m2 0h1m2 0h2m1 0h1m1 0h2m1 0h5m3 0h1M0 165.5h1m6 0h2m1 0h4m2 0h1m1 0h1m1 0h4m5 0h2M0 166.5h1m2 0h1m2 0h3m1 0h3m3 0h1m1 0h3m1 0h3m3 0h3M0 167.5h3m4 0h3m2 0h1m1 0h1m2 0h4m1 0h1m1 0h1m1 0h1m1 0h2M0 168.5h2m2 0h5m2 0h1m4 0h2m1 0h1m6 0h2M0 169.5h1m2 0h3m1 0h3m1 0h2m3 0h4m1 0h2m2 0h5M0 170.5h3m1 0h1m1 0h4m1 0h4m1 0h5m1 0h1m1 0h5M0 171.5h1m1 0h1m1 0h1m2 0h1m2 0h1m1 0h1m1 0h3m1 0h5m1 0h2m1 0h1M0 172.5h3m1 0h2m1 0h2m1 0h1m1 0h2m1 0h3m1 0h1m1 0h3m1 0h2M0 173.5h1m4 0h2m1 0h3m1 0h2m2 0h2m5 0h4M0 174.5h1m2 0h2m1 0h2m2 0h1m2 0h4m1 0h1m1 0h1m1 0h3M0 175.5h1m3 0h2m6 0h1m1 0h1m1 0h4m1 0h1M0 176.5h8m2 0h1m1 0h2m2 0h1m1 0h1m1 0h4M0 177.5h3m3 0h1m1 0h2m1 0h1m2 0h1m1 0h1m3 0h2M0 178.5h3m10 0h4m1 0h1M0 179.5h1m5 0h2m3 0h4m1 0h2M0 180.5h1m2 0h3m1 0h1m1 0h2m1 0h2m1 0h1m1 0h1m1 0h1M0 181.5h1m1 0h1m3 0h1m2 0h5m1 0h2m1 0h2M0 182.5h3m2 0h1m3 0h4m2 0h2m1 0h2m1 0h1M0 183.5h5m1 0h7m2 0h2m1 0h1M0 184.5h5m1 0h1m2 0h2m2 0h3m1 0h5M0 185.5h1m1 0h1m1 0h2m5 0h3m2 0h1m4 0h1M0 186.5h2m1 0h2m1 0h1m1 0h1m1 0h1m1 0h2m2 0h3m1 0h2M0 187.5h2m1 0h2m1 0h2m1 0h1m2 0h1m1 0h2m1 0h5M0 188.5h1m2 0h2m1 0h1m3 0h3m1 0h1m2 0h1m1 0h3m1 0h1M0 189.5h3m4 0h2m1 0h2m1 0h2m1 0h4m1 0h1M0 190.5h2m1 0h1m2 0h1m5 0h1m1 0h1m1 0h1m1 0h2M0 191.5h1m1 0h1m1 0h2m2 0h1m2 0h5m1 0h2M0 192.5h6m1 0h1m4 0h2m3 0h1M0 193.5h2m2 0h1m3 0h1m2 0h1m1 0h4M0 194.5h1m1 0h6m2 0h2m2 0h1m1 0h1M0 195.5h2m1 0h2m1 0h2m1 0h5m1 0h1m1 0h1M0 196.5h1m1 0h5m1 0h3m1 0h1m2 0h1M0 197.5h2m2 0h2m1 0h2m3 0h3M0 198.5h1m3 0h1m4 0h2m1 0h1M0 199.5h1m2 0h1m1 0h2m1 0h1m2 0h4M0 200.5h1m1 0h1m4 0h2m1 0h2m1 0h1M0 201.5h1m2 0h1m1 0h2m1 0h1m1 0h1m1 0h1m1 0h1M0 202.5h7m1 0h2m1 0h1m1 0h1M0 203.5h4m1 0h3m6 0h1M0 204.5h1m4 0h2m1 0h3M0 205.5h3m1 0h4m1 0h1m3 0h1M0 206.5h3m1 0h3m2 0h1m1 0h2M0 207.5h1m2 0h1m1 0h1m2 0h4M0 208.5h2m2 0h3m1 0h1m1 0h4M0 209.5h1m1 0h1m8 0h3M0 210.5h2m2 0h3m1 0h2m2 0h1M0 211.5h3m1 0h2m1 0h1m1 0h1M0 212.5h3m1 0h2m2 0h3m1 0h1M0 213.5h2m2 0h1m2 0h1m4 0h1M0 214.5h3m1 0h2m2 0h3M0 215.5h1m3 0h3m1 0h2M0 216.5h1m1 0h5M0 217.5h1m2 0h4M0 218.5h1m3 0h1M0 219.5h1m1 0h5M0 220.5h1m2 0h1m1 0h1M0 221.5h1m1 0h2M0 222.5h1m1 0h2M0 223.5h1m1 0h1M0 224.5h1m1 0h2M0 225.5h3M0 226.5h1m2 0h1M0 227.5h1m1 0h1M0 228.5h1M0 229.5h1M0 230.5h1M0 231.5h1M0 232.5h1M0 233.5h2M0 234.5h2M0 235.5h4M0 236.5h2m1 0h3M0 237.5h2m1 0h2m1 0h2M0 238.5h3m1 0h1m1 0h1m1 0h1M0 239.5h5m2 0h1M0 240.5h1m3 0h1m1 0h1m1 0h1M0 241.5h3m1 0h2m2 0h1M0 242.5h3m2 0h1m2 0h1M0 243.5h2m2 0h2m1 0h1M0 244.5h2m2 0h1M0 245.5h1m1 0h2M0 246.5h1m1 0h1M0 247.5h1M0 248.5h1m1 0h1M0 249.5h2M0 250.5h1"/></svg>
<!-- divider -->
<svg style="left:0;top:833px;" width="40" height="20" viewBox="0 833 40 20"><path d="M3.9 846.1L9.05 840.8L14.2 846.1Z M22.9 840.9H32.9L27.9 846.1Z" fill="#000"/></svg>
<div class="a" style="left:796.4px;top:840px;width:6.6px;height:6.6px;background:#fff;border-radius:50%;"></div>
<!-- command center -->
<svg style="left:0;top:885px;" width="1600" height="52" viewBox="0 885 1600 52"><rect x="0.2" y="888.7" width="1597.9" height="46" rx="4" fill="#2e2e38" stroke="#66666b" stroke-width="1.2"/><rect x="1590.2" y="892" width="6.8" height="39.5" fill="#292929"/></svg>
<svg style="left:0;top:850px;" width="1600" height="40" viewBox="0 850 1600 40"><rect x="1488.10" y="859.60" width="19.10" height="20.00" rx="3.40" fill="#2d2d37" stroke="#5a5a60" stroke-width="1.20"/><rect x="1515.80" y="859.50" width="76.90" height="21.40" rx="3.90" fill="#2d2d37" stroke="#5e5e64" stroke-width="1.20"/><path d="M1495.7 866.1H1501.9V871.8M1492.4 869H1499V874.8" fill="none" stroke="#fff" stroke-width="1.3"/></svg>
<svg style="left:90px;top:935px;" width="1510" height="22" viewBox="90 935 1510 22">
<rect x="97.4" y="938.2" width="1481.6" height="15.7" fill="#151515"/>
<rect x="97.4" y="951.4" width="1481.6" height="0.9" fill="#000"/>
<rect x="97.4" y="938.2" width="1481.6" height="1.4" fill="#b6b6b6"/>
<rect x="97.4" y="952.1" width="1482.6" height="1.8" fill="#ffffff"/>
<rect x="97.4" y="938.2" width="1.2" height="15.7" fill="#c4c4c4"/>
<rect x="1580.1" y="938.2" width="18.4" height="16.7" rx="2" fill="#f1f1f1"/>
<path d="M1585 944.4H1595.2L1590.1 950.2Z" fill="#000"/>
</svg>
<span class="t" style="left:6.20px;top:865.00px;font-size:12.30px;color:#ffffff;font-weight:bold;transform:scaleX(1.0113);">Командный центр</span><span class="t" style="left:6.20px;top:941.00px;font-size:13.00px;color:#ffffff;transform:scaleX(0.9587);">наблюдатель&gt;</span><span class="t" style="left:1528.40px;top:865.00px;font-size:12.50px;color:#ffffff;transform:scaleX(0.9777);">Очистить</span>
<span class="t" style="left:1184.50px;top:851.00px;font-size:18.90px;color:rgba(255,255,255,0.37);transform:scaleX(1.1009);">Активация Windows</span><span class="t" style="left:1184.50px;top:877.00px;font-size:13.80px;color:rgba(255,255,255,0.37);transform:scaleX(1.0679);">Чтобы активировать Windows, перейдите в раздел</span><span class="t" style="left:1184.50px;top:898.00px;font-size:13.80px;color:rgba(255,255,255,0.37);transform:scaleX(1.0723);">"Параметры".</span>
<!-- taskbar -->
<div class="a" style="left:0;top:958.2px;width:1600px;height:41.8px;background:#111111;"></div><div class="a" style="left:0;top:958.2px;width:50px;height:1.2px;background:#000;"></div>
<div class="a" style="left:50px;top:958.2px;width:300px;height:41.8px;background:#3c3c3c;border-left:1px solid #6c6c6c;border-right:1px solid #5a5a5a;border-top:1px solid #a9a9a9;"></div>
<div class="a" style="left:921.7px;top:958px;width:50.8px;height:42px;background:#333333;"></div>
<!-- start + search -->
<svg style="left:0;top:958px;" width="120" height="42" viewBox="0 0 1600 560"><path d="M220 201L305 189V266H220Z M325 186L445 169V266H325Z M220 284H305V363L220 351Z M325 284H445V386L325 367Z" fill="#fff"/><circle cx="978" cy="250" r="67" fill="none" stroke="#f4f4f4" stroke-width="18"/><path d="M928 303L838 388" stroke="#f4f4f4" stroke-width="18" stroke-linecap="round"/></svg>
<!-- dome -->
<svg style="left:264px;top:956px;" width="90" height="44" viewBox="0 0 1600 782">
<defs>
<linearGradient id="sky" x1="0" y1="0" x2="1" y2="0"><stop offset="0" stop-color="#0a40c0"/><stop offset=".25" stop-color="#3a6ee0"/><stop offset=".45" stop-color="#9fb0ee"/><stop offset=".6" stop-color="#e4b8d6"/><stop offset=".78" stop-color="#fba6b4"/><stop offset=".9" stop-color="#f7c48c"/><stop offset="1" stop-color="#fbee3c"/></linearGradient>
<linearGradient id="skyv" x1="0" y1="0" x2="0" y2="1"><stop offset="0" stop-color="#2a5fd8" stop-opacity=".55"/><stop offset=".5" stop-color="#8fa8f0" stop-opacity=".1"/><stop offset="1" stop-color="#fff" stop-opacity="0"/></linearGradient>
<linearGradient id="rock" x1="0" y1="0" x2="1" y2="1"><stop offset="0" stop-color="#ffffff"/><stop offset=".55" stop-color="#e6e6f4"/><stop offset="1" stop-color="#b4b2de"/></linearGradient>
<linearGradient id="ice" x1="0" y1="0" x2="0" y2="1"><stop offset="0" stop-color="#c8d2f6"/><stop offset=".45" stop-color="#d8c0e8"/><stop offset="1" stop-color="#b4ccf6"/></linearGradient>
<clipPath id="dm"><path d="M160 520Q190 310 420 180Q620 70 800 70Q1000 70 1180 170Q1410 310 1445 520Z"/></clipPath>
</defs>
<g clip-path="url(#dm)">
<rect x="140" y="60" width="1320" height="470" fill="url(#sky)"/>
<rect x="140" y="60" width="900" height="470" fill="url(#skyv)"/>
<path d="M340 470Q335 300 395 250Q445 225 468 285Q515 295 520 360L560 470Z" fill="#86a8f0" opacity=".75"/>
<path d="M880 300Q900 240 950 220Q940 150 1030 135Q1110 130 1140 190Q1230 200 1250 270Q1330 300 1330 380L1000 470Z" fill="#fbd3c6" opacity=".85"/>
<path d="M1000 330Q1100 300 1200 330Q1300 360 1350 470H1000Z" fill="#fba4b4" opacity=".7"/>
</g>
<path d="M505 318L612 282L700 300L940 296L990 420L1000 520L570 545L548 420Z" fill="url(#ice)"/>
<path d="M505 318L612 282L700 300L690 330L560 345L548 420Z" fill="#e8ecff" opacity=".8"/>
<path d="M562 398H770V432H570Z" fill="#f2a2c6" opacity=".85"/>
<path d="M575 445H700L650 520H580Z" fill="#0c3fe0"/>
<path d="M650 520L720 440L770 520Z" fill="#a8c0f2"/>
<path d="M775 380H960L990 520H770Z" fill="#9fc0f6"/>
<path d="M780 378L960 372L962 392L782 400Z" fill="#3d78e6"/>
<path d="M800 470H990V530H790Z" fill="#dfe8fb" opacity=".8"/>
<ellipse cx="790" cy="650" rx="655" ry="95" fill="#bebbea"/>
<ellipse cx="790" cy="575" rx="650" ry="70" fill="#c9c7ee"/>
<g fill="url(#rock)">
<path d="M140 530L235 445L290 480L250 560Z"/>
<path d="M200 600L330 470L400 430L450 470L470 580L330 660Z"/>
<path d="M440 480L500 460L560 500L580 580L470 600Z"/>
<path d="M430 700L500 600L590 590L600 720Z"/>
<path d="M590 590L680 540L800 550L840 720H600Z"/>
<path d="M830 580L900 540L1000 560L1010 720H850Z"/>
<path d="M1000 560L1040 470L1100 430L1150 470L1180 600L1120 720H1010Z"/>
<path d="M1130 520L1230 460L1300 520L1330 620L1200 680Z"/>
<path d="M1280 470L1330 445L1440 520L1400 560L1320 560Z"/>
<path d="M1300 600L1440 590L1380 650L1300 660Z"/>
<path d="M135 600L250 570L260 640L200 640Z"/>
</g>
<g fill="#a9a6d8" opacity=".55">
<path d="M400 430L450 470L470 580L430 600Z"/><path d="M800 550L840 720H790Z"/><path d="M1100 430L1150 470L1180 600L1140 640Z"/><path d="M560 500L580 580L545 590Z"/>
</g>
</svg>
<!-- folder -->
<svg style="left:354px;top:958px;" width="150" height="42" viewBox="0 0 1600 448">
<path d="M138 132Q138 118 152 118H232L252 140H380V180H138Z" fill="#e9a80c"/>
<path d="M138 150H366Q380 150 380 164V303Q380 317 366 317H152Q138 317 138 303Z" fill="#ffd75e"/>
<path d="M180 326V246Q180 226 200 226H320Q340 226 340 246V326H300V266H216V326Z" fill="#3b97e8"/>
<!-- telegram -->
<defs><linearGradient id="tg" x1="0" y1="0" x2="0" y2="1"><stop offset="0" stop-color="#2ca7e2"/><stop offset="1" stop-color="#1b8fd2"/></linearGradient></defs>
<circle cx="808" cy="222" r="122" fill="url(#tg)"/>
<path d="M735 226L868 174Q880 171 877 186L852 292Q848 303 836 296L798 266L778 286Q772 290 772 280L775 250L850 195L762 244Z" fill="#fff"/>
<!-- tradingview -->
<rect x="1236" y="90" width="266" height="266" rx="40" fill="#151515"/>
<path d="M1256 172H1346V276H1298V219H1256Z M1420 172H1472L1426 276H1372Z" fill="#fff"/><circle cx="1380" cy="196" r="24" fill="#fff"/>
</svg>
<!-- wave, whatsapp, wps -->
<svg style="left:508px;top:958px;" width="150" height="42" viewBox="0 0 1600 448" fill="none">
<defs><linearGradient id="wv" gradientUnits="userSpaceOnUse" x1="160" y1="80" x2="260" y2="350"><stop offset="0" stop-color="#2bbfd4"/><stop offset=".45" stop-color="#17e2ee"/><stop offset="1" stop-color="#1291a9"/></linearGradient></defs>
<g stroke="url(#wv)" fill="none"><path d="M212.7 342C150 270 138 190 207 124C262 78 345 95 392 156" stroke-width="44"/><path d="M268 291C214 236 208 176 267 134C310 108 352 120 386 152" stroke-width="39"/><path d="M315 237C280 200 283 160 332 143C356 136 374 143 388 156" stroke-width="35"/></g><circle cx="386" cy="156" r="15" fill="#19c6dc"/>
<path d="M714.7 281.8A121 121 0 1 1 764.7 331.8L696 351Z" stroke="#2bd866" stroke-width="25" stroke-linejoin="round" fill="none"/>
<path d="M776 183Q779 226 812 251Q836 266 859 258" stroke="#2bd866" stroke-width="25" stroke-linecap="round"/>
<circle cx="778" cy="180" r="19" fill="#2bd866"/><circle cx="861" cy="257" r="18" fill="#2bd866"/>
<circle cx="959.4" cy="306.3" r="89" fill="#2b2b2b" fill-opacity=".93" stroke="#9a9a9a" stroke-width="9"/>
<rect x="1237.3" y="89.8" width="268.4" height="273.9" rx="36" fill="#fb1823"/>
<path d="M1277 178H1357M1279 178L1339 291L1394 176M1370 231L1402 291L1462 178H1415" stroke="#fff" stroke-width="21" stroke-linejoin="round" fill="none"/>
</svg>
<span class="t" style="left:594.20px;top:982.00px;font-size:12.20px;color:#fff;transform:scaleX(1.0464);">1</span>
<!-- edge, yandex, telegram2 -->
<svg style="left:662px;top:958px;" width="150" height="42" viewBox="0 0 1600 448" fill="none">
<defs>
<linearGradient id="e1" x1="0" y1="0" x2=".6" y2="1"><stop offset="0" stop-color="#2cb0f2"/><stop offset="1" stop-color="#1670d0"/></linearGradient>
<linearGradient id="e2" x1="0" y1="0" x2="1" y2=".35"><stop offset="0" stop-color="#36bcf4"/><stop offset=".5" stop-color="#2fc4c4"/><stop offset="1" stop-color="#70ec4c"/></linearGradient>
<linearGradient id="yr" x1="0" y1="1" x2="1" y2="0"><stop offset="0" stop-color="#ff3a2c"/><stop offset="1" stop-color="#fc5ee0"/></linearGradient>
</defs>
<g transform="translate(85.3 42.67) scale(.3628)">
<circle cx="545" cy="505" r="372" fill="url(#e1)"/>
<path d="M470 400Q380 500 400 650Q440 820 640 850Q790 830 860 690Q760 720 650 690Q500 640 455 540Q440 460 470 400Z" fill="#1259ac"/>
<path d="M175 440Q200 250 400 160Q600 90 780 210Q930 330 915 480Q890 620 740 630Q620 630 590 570Q640 540 620 450Q560 330 400 330Q260 340 175 440Z" fill="url(#e2)"/>
<path d="M455 500Q460 420 540 420Q620 430 625 510Q605 555 590 572Q640 640 760 640Q860 630 908 560Q905 640 862 692Q760 722 650 690Q500 640 455 500Z" fill="#111"/>
</g>
<circle cx="832" cy="222" r="136" fill="#fff"/>
<path d="M757 162L830 242" stroke="#ff6a1c" stroke-width="38"/>
<path d="M830 242L904 162" stroke="url(#yr)" stroke-width="38"/>
<path d="M830 225V326" stroke="#ff4226" stroke-width="38"/>
<circle cx="1380" cy="222" r="122" fill="url(#tg)"/>
<path d="M1307 226L1440 174Q1452 171 1449 186L1424 292Q1420 303 1408 296L1370 266L1350 286Q1344 290 1344 280L1347 250L1422 195L1334 244Z" fill="#fff"/>
<rect x="1368.6" y="256.0" width="169.6" height="125.3" rx="42" fill="#ef3a30"/>
</svg>
<span class="t" style="left:791.60px;top:984.00px;font-size:9.00px;color:#fff;font-weight:bold;transform:scaleX(0.8194);">..41</span>
<!-- link, gear, netlogo -->
<svg style="left:822px;top:958px;" width="150" height="42" viewBox="0 0 1600 448" fill="none">
<defs><linearGradient id="lk" x1="0" y1="0" x2="1" y2="1"><stop offset="0" stop-color="#4410fa"/><stop offset=".5" stop-color="#4a78f2"/><stop offset="1" stop-color="#3ef0f0"/></linearGradient></defs>
<rect x="95" y="92" width="268" height="270" rx="38" fill="url(#lk)"/>
<rect x="136.5" y="188.8" width="95" height="68.3" rx="34" stroke="#e6eaff" stroke-width="17"/>
<rect x="218.6" y="188.8" width="95" height="68.3" rx="34" stroke="#e6eaff" stroke-width="17"/>
<g transform="translate(775 222) rotate(22.5)" fill="#fff">
<circle r="57" fill="none" stroke="#fff" stroke-width="34"/>
<g id="th"><rect x="-20" y="-100" width="40" height="36" rx="7"/></g>
<use href="#th" transform="rotate(45)"/><use href="#th" transform="rotate(90)"/><use href="#th" transform="rotate(135)"/><use href="#th" transform="rotate(180)"/><use href="#th" transform="rotate(225)"/><use href="#th" transform="rotate(270)"/><use href="#th" transform="rotate(315)"/>
</g>
<rect x="1195" y="92" width="268" height="270" rx="42" fill="#3db4f6"/>
<path d="M1245 140L1427 219L1290 219Z" fill="#f21405"/><path d="M1427 219L1245 302L1290 219Z" fill="#c20808"/>
</svg>
<!-- underlines -->
<div class="ul" style="left:512.5px;width:42.4px;"></div><div class="ul" style="left:564.1px;width:42.4px;"></div><div class="ul" style="left:615.8px;width:42.4px;"></div><div class="ul" style="left:667.4px;width:42.4px;"></div><div class="ul" style="left:719px;width:42.4px;"></div><div class="ul" style="left:770.7px;width:42.4px;"></div><div class="ul" style="left:822.3px;width:42.4px;"></div><div class="ul" style="left:874px;width:42.4px;"></div><div class="ul" style="left:921.7px;width:50.8px;"></div>
<!-- tray -->
<svg style="left:1300px;top:955px;" width="300" height="45" viewBox="0 0 1600 240" fill="none">
<path d="M224 148L259 113L294 148" stroke="#fff" stroke-width="8"/>
<rect x="370" y="86" width="40" height="61" rx="9" fill="#f6f6f6"/>
<path d="M361 126V134Q361 159 390 159Q419 159 419 134V126" stroke="#b2b2b2" stroke-width="7"/><path d="M390 159V172M374 173H406" stroke="#b2b2b2" stroke-width="6"/>
<rect x="1125.3" y="86.9" width="97.1" height="69.9" rx="11" fill="#fff"/>
<path d="M1119.5 167.7H1226.1" stroke="#fff" stroke-width="7"/>
<path d="M1172.8 122.8C1160 99 1138 101 1138 122.8C1138 144.6 1160 146.6 1172.8 122.8C1186 99 1206 101 1206 122.8C1206 144.6 1186 146.6 1172.8 122.8Z" stroke="#161616" stroke-width="8" fill="none"/>
<path d="M1371.7 83.5H1462.4V160.5H1430.5L1416.5 174.9L1402.5 160.5H1371.7Z" fill="#fff"/>
<path d="M1392.5 103.5H1444M1392.5 140.8H1424" stroke="#5a5a5a" stroke-width="5.5"/><path d="M1392.5 122.1H1444" stroke="#6a6a6a" stroke-width="8"/>
<path d="M1577.6 17V240" stroke="#606060" stroke-width="5.9"/>
</svg>

<span class="t" style="left:92.50px;top:972.00px;font-size:14.40px;color:#e8e8e8;transform:scaleX(1.1152);">Поиск</span><span class="t" style="left:1393.75px;top:974.00px;font-size:12.00px;color:#ffffff;transform:scaleX(0.8739);">РУС</span><span class="t" style="left:1444.75px;top:964.00px;font-size:12.00px;color:#ffffff;transform:scaleX(0.9374);">10:53</span><span class="t" style="left:1429.75px;top:983.00px;font-size:12.00px;color:#ffffff;transform:scaleX(0.9699);">27.12.2025</span>
</body>
</html>
